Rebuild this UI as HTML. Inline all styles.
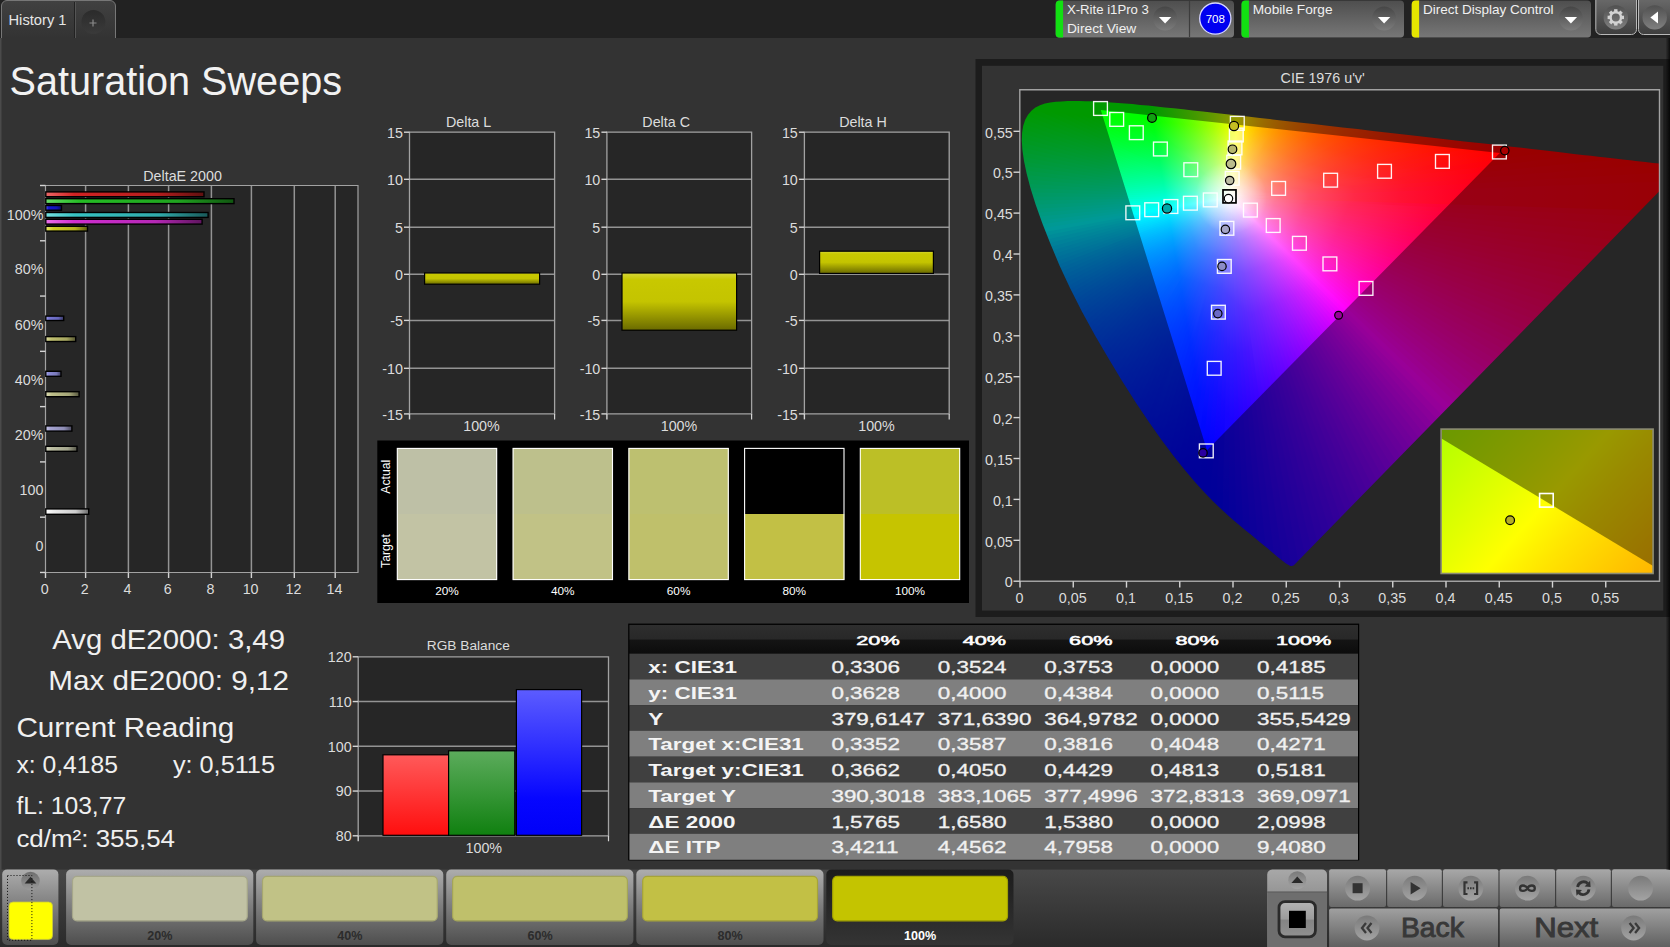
<!DOCTYPE html>
<html lang="en"><head><meta charset="utf-8"><title>Saturation Sweeps</title>
<style>html,body{margin:0;padding:0;background:#333;overflow:hidden}body{width:1670px;height:947px}
svg{display:block;font-family:"Liberation Sans",sans-serif}</style></head>
<body><svg width="1670" height="947" viewBox="0 0 1670 947">
<defs><linearGradient id="tabg" x1="0" y1="0" x2="0" y2="1"><stop offset="0" stop-color="#414141"/><stop offset="1" stop-color="#333"/></linearGradient>
<linearGradient id="plusg" x1="0" y1="0" x2="0" y2="1"><stop offset="0" stop-color="#2b2b2b"/><stop offset="1" stop-color="#3a3a3a"/></linearGradient>
<linearGradient id="wg" x1="0" y1="0" x2="0" y2="1"><stop offset="0" stop-color="#4e4e4e"/><stop offset="1" stop-color="#777"/></linearGradient>
<linearGradient id="ddg" x1="0" y1="0" x2="0" y2="1"><stop offset="0" stop-color="#464646"/><stop offset="1" stop-color="#7c7c7c"/></linearGradient>
<linearGradient id="gb" x1="0" y1="0" x2="0" y2="1"><stop offset="0" stop-color="#6a6a6a"/><stop offset="1" stop-color="#3e3e3e"/></linearGradient>
<linearGradient id="gbc" x1="0" y1="0" x2="0" y2="1"><stop offset="0" stop-color="#505050"/><stop offset="1" stop-color="#808080"/></linearGradient>
<linearGradient id="hb0" x1="0" y1="0" x2="1" y2="0"><stop offset="0" stop-color="#eb6767"/><stop offset="0.18" stop-color="#d02323"/><stop offset="0.7" stop-color="#b51e1e"/><stop offset="1" stop-color="#5f1010"/></linearGradient>
<linearGradient id="hb1" x1="0" y1="0" x2="1" y2="0"><stop offset="0" stop-color="#68dc68"/><stop offset="0.18" stop-color="#25bd25"/><stop offset="0.7" stop-color="#20a420"/><stop offset="1" stop-color="#115611"/></linearGradient>
<linearGradient id="hb2" x1="0" y1="0" x2="1" y2="0"><stop offset="0" stop-color="#5d5dea"/><stop offset="0.18" stop-color="#1616cf"/><stop offset="0.7" stop-color="#1313b4"/><stop offset="1" stop-color="#0a0a5e"/></linearGradient>
<linearGradient id="hb3" x1="0" y1="0" x2="1" y2="0"><stop offset="0" stop-color="#76e1e1"/><stop offset="0.18" stop-color="#37c3c3"/><stop offset="0.7" stop-color="#30aaaa"/><stop offset="1" stop-color="#195959"/></linearGradient>
<linearGradient id="hb4" x1="0" y1="0" x2="1" y2="0"><stop offset="0" stop-color="#eb70eb"/><stop offset="0.18" stop-color="#d02ed0"/><stop offset="0.7" stop-color="#b528b5"/><stop offset="1" stop-color="#5f155f"/></linearGradient>
<linearGradient id="hb5" x1="0" y1="0" x2="1" y2="0"><stop offset="0" stop-color="#e8e868"/><stop offset="0.18" stop-color="#cccc25"/><stop offset="0.7" stop-color="#b2b220"/><stop offset="1" stop-color="#5d5d11"/></linearGradient>
<linearGradient id="hb6" x1="0" y1="0" x2="1" y2="0"><stop offset="0" stop-color="#a6a6ef"/><stop offset="0.18" stop-color="#7676d5"/><stop offset="0.7" stop-color="#6666ba"/><stop offset="1" stop-color="#363661"/></linearGradient>
<linearGradient id="hb7" x1="0" y1="0" x2="1" y2="0"><stop offset="0" stop-color="#dddda0"/><stop offset="0.18" stop-color="#bebe6e"/><stop offset="0.7" stop-color="#a5a560"/><stop offset="1" stop-color="#575732"/></linearGradient>
<linearGradient id="hb8" x1="0" y1="0" x2="1" y2="0"><stop offset="0" stop-color="#b6b6ef"/><stop offset="0.18" stop-color="#8a8ad5"/><stop offset="0.7" stop-color="#7878ba"/><stop offset="1" stop-color="#3f3f61"/></linearGradient>
<linearGradient id="hb9" x1="0" y1="0" x2="1" y2="0"><stop offset="0" stop-color="#dddeb6"/><stop offset="0.18" stop-color="#bebf8a"/><stop offset="0.7" stop-color="#a5a678"/><stop offset="1" stop-color="#57573f"/></linearGradient>
<linearGradient id="hb10" x1="0" y1="0" x2="1" y2="0"><stop offset="0" stop-color="#c9c8eb"/><stop offset="0.18" stop-color="#a4a2d0"/><stop offset="0.7" stop-color="#8e8db5"/><stop offset="1" stop-color="#4b4a5f"/></linearGradient>
<linearGradient id="hb11" x1="0" y1="0" x2="1" y2="0"><stop offset="0" stop-color="#dbddc8"/><stop offset="0.18" stop-color="#bcbea2"/><stop offset="0.7" stop-color="#a3a58d"/><stop offset="1" stop-color="#56574a"/></linearGradient>
<linearGradient id="hb12" x1="0" y1="0" x2="1" y2="0"><stop offset="0" stop-color="#fff"/><stop offset="0.18" stop-color="#ebebeb"/><stop offset="0.7" stop-color="#ccc"/><stop offset="1" stop-color="#6b6b6b"/></linearGradient>
<linearGradient id="yv" x1="0" y1="0" x2="0" y2="1"><stop offset="0" stop-color="#d6d63a"/><stop offset="0.12" stop-color="#c8c800"/><stop offset="0.5" stop-color="#c4c400"/><stop offset="1" stop-color="#6a6a00"/></linearGradient>
<linearGradient id="w0" gradientUnits="userSpaceOnUse" x1="1230.8" y1="197.5" x2="1653.2" y2="197.5"><stop offset="0" stop-color="#fff"/><stop offset="0.023" stop-color="#ffd4da"/><stop offset="0.047" stop-color="#ffb2be"/><stop offset="0.107" stop-color="#ff788d"/><stop offset="0.187" stop-color="#ff4b67"/><stop offset="0.291" stop-color="#ff284a"/><stop offset="0.398" stop-color="#ff1237"/><stop offset="0.532" stop-color="#ff0028"/><stop offset="1" stop-color="#ff000f"/></linearGradient>
<linearGradient id="w1" gradientUnits="userSpaceOnUse" x1="1230.8" y1="197.5" x2="1644.7" y2="206.2"><stop offset="0" stop-color="#fff"/><stop offset="0.023" stop-color="#ffd4dc"/><stop offset="0.047" stop-color="#ffb3c1"/><stop offset="0.077" stop-color="#ff93a6"/><stop offset="0.11" stop-color="#ff778f"/><stop offset="0.191" stop-color="#ff4a6a"/><stop offset="0.294" stop-color="#ff284e"/><stop offset="0.401" stop-color="#ff123b"/><stop offset="0.532" stop-color="#ff002d"/><stop offset="1" stop-color="#ff0014"/></linearGradient>
<linearGradient id="w2" gradientUnits="userSpaceOnUse" x1="1230.8" y1="197.5" x2="1636.6" y2="214.5"><stop offset="0" stop-color="#fff"/><stop offset="0.023" stop-color="#ffd5dd"/><stop offset="0.047" stop-color="#ffb4c3"/><stop offset="0.077" stop-color="#ff94a9"/><stop offset="0.11" stop-color="#ff7892"/><stop offset="0.191" stop-color="#ff4b6e"/><stop offset="0.298" stop-color="#ff2852"/><stop offset="0.401" stop-color="#ff1240"/><stop offset="0.532" stop-color="#ff0032"/><stop offset="1" stop-color="#ff0019"/></linearGradient>
<linearGradient id="w3" gradientUnits="userSpaceOnUse" x1="1230.8" y1="197.5" x2="1628.7" y2="222.5"><stop offset="0" stop-color="#fff"/><stop offset="0.023" stop-color="#ffd6de"/><stop offset="0.05" stop-color="#ffb1c2"/><stop offset="0.114" stop-color="#ff7794"/><stop offset="0.194" stop-color="#ff4b71"/><stop offset="0.301" stop-color="#ff2756"/><stop offset="0.532" stop-color="#ff0037"/><stop offset="1" stop-color="#ff001e"/></linearGradient>
<linearGradient id="w4" gradientUnits="userSpaceOnUse" x1="1230.8" y1="197.5" x2="1621.2" y2="230.3"><stop offset="0" stop-color="#fff"/><stop offset="0.023" stop-color="#ffd6e0"/><stop offset="0.05" stop-color="#ffb2c4"/><stop offset="0.114" stop-color="#ff7897"/><stop offset="0.194" stop-color="#ff4b75"/><stop offset="0.301" stop-color="#ff285a"/><stop offset="0.532" stop-color="#ff003c"/><stop offset="1" stop-color="#ff0023"/></linearGradient>
<linearGradient id="w5" gradientUnits="userSpaceOnUse" x1="1230.8" y1="197.5" x2="1613.8" y2="237.8"><stop offset="0" stop-color="#fff"/><stop offset="0.023" stop-color="#ffd7e1"/><stop offset="0.05" stop-color="#ffb3c6"/><stop offset="0.114" stop-color="#ff799b"/><stop offset="0.197" stop-color="#ff4b79"/><stop offset="0.304" stop-color="#ff285e"/><stop offset="0.532" stop-color="#ff0041"/><stop offset="1" stop-color="#ff0028"/></linearGradient>
<linearGradient id="w6" gradientUnits="userSpaceOnUse" x1="1230.8" y1="197.5" x2="1606.8" y2="245"><stop offset="0" stop-color="#fff"/><stop offset="0.023" stop-color="#ffd7e2"/><stop offset="0.05" stop-color="#ffb4c8"/><stop offset="0.117" stop-color="#ff789d"/><stop offset="0.201" stop-color="#ff4a7c"/><stop offset="0.308" stop-color="#ff2762"/><stop offset="0.532" stop-color="#ff0046"/><stop offset="1" stop-color="#ff002d"/></linearGradient>
<linearGradient id="w7" gradientUnits="userSpaceOnUse" x1="1230.8" y1="197.5" x2="1599.9" y2="252"><stop offset="0" stop-color="#fff"/><stop offset="0.023" stop-color="#ffd8e3"/><stop offset="0.05" stop-color="#ffb5ca"/><stop offset="0.117" stop-color="#ff79a0"/><stop offset="0.201" stop-color="#ff4b80"/><stop offset="0.311" stop-color="#ff2766"/><stop offset="0.532" stop-color="#ff004b"/><stop offset="1" stop-color="#ff0032"/></linearGradient>
<linearGradient id="w8" gradientUnits="userSpaceOnUse" x1="1230.8" y1="197.5" x2="1593.3" y2="258.8"><stop offset="0" stop-color="#fff"/><stop offset="0.023" stop-color="#ffd8e4"/><stop offset="0.054" stop-color="#ffb2ca"/><stop offset="0.12" stop-color="#ff77a2"/><stop offset="0.204" stop-color="#ff4b83"/><stop offset="0.314" stop-color="#ff276a"/><stop offset="0.532" stop-color="#ff0050"/><stop offset="1" stop-color="#ff0037"/></linearGradient>
<linearGradient id="w9" gradientUnits="userSpaceOnUse" x1="1230.8" y1="197.5" x2="1586.8" y2="265.4"><stop offset="0" stop-color="#fff"/><stop offset="0.027" stop-color="#ffd4e2"/><stop offset="0.054" stop-color="#ffb3cc"/><stop offset="0.12" stop-color="#ff78a5"/><stop offset="0.207" stop-color="#ff4a86"/><stop offset="0.318" stop-color="#ff266e"/><stop offset="0.532" stop-color="#ff0054"/><stop offset="1" stop-color="#ff003d"/></linearGradient>
<linearGradient id="w10" gradientUnits="userSpaceOnUse" x1="1230.8" y1="197.5" x2="1580.5" y2="271.8"><stop offset="0" stop-color="#fff"/><stop offset="0.027" stop-color="#ffd5e3"/><stop offset="0.054" stop-color="#ffb3ce"/><stop offset="0.12" stop-color="#ff79a8"/><stop offset="0.207" stop-color="#ff4b8a"/><stop offset="0.321" stop-color="#ff2672"/><stop offset="0.532" stop-color="#ff0059"/><stop offset="1" stop-color="#ff0042"/></linearGradient>
<linearGradient id="w11" gradientUnits="userSpaceOnUse" x1="1230.8" y1="197.5" x2="1574.4" y2="278.1"><stop offset="0" stop-color="#fff"/><stop offset="0.027" stop-color="#ffd5e5"/><stop offset="0.054" stop-color="#ffb4d0"/><stop offset="0.124" stop-color="#ff78aa"/><stop offset="0.211" stop-color="#ff4a8d"/><stop offset="0.321" stop-color="#ff2677"/><stop offset="0.532" stop-color="#ff005e"/><stop offset="1" stop-color="#ff0047"/></linearGradient>
<linearGradient id="w12" gradientUnits="userSpaceOnUse" x1="1230.8" y1="197.5" x2="1568.5" y2="284.2"><stop offset="0" stop-color="#fff"/><stop offset="0.027" stop-color="#ffd6e6"/><stop offset="0.054" stop-color="#ffb5d2"/><stop offset="0.124" stop-color="#ff79ad"/><stop offset="0.211" stop-color="#ff4b91"/><stop offset="0.324" stop-color="#ff267b"/><stop offset="0.532" stop-color="#ff0063"/><stop offset="1" stop-color="#ff004d"/></linearGradient>
<linearGradient id="w13" gradientUnits="userSpaceOnUse" x1="1230.8" y1="197.5" x2="1562.6" y2="290.2"><stop offset="0" stop-color="#fff"/><stop offset="0.027" stop-color="#ffd6e7"/><stop offset="0.057" stop-color="#ffb2d2"/><stop offset="0.127" stop-color="#ff78af"/><stop offset="0.214" stop-color="#ff4b95"/><stop offset="0.328" stop-color="#ff267f"/><stop offset="0.532" stop-color="#ff0069"/><stop offset="1" stop-color="#ff0052"/></linearGradient>
<linearGradient id="w14" gradientUnits="userSpaceOnUse" x1="1230.8" y1="197.5" x2="1557" y2="296"><stop offset="0" stop-color="#fff"/><stop offset="0.027" stop-color="#ffd7e8"/><stop offset="0.057" stop-color="#ffb3d4"/><stop offset="0.127" stop-color="#ff79b3"/><stop offset="0.217" stop-color="#ff4a98"/><stop offset="0.331" stop-color="#ff2583"/><stop offset="0.532" stop-color="#ff006e"/><stop offset="1" stop-color="#ff0057"/></linearGradient>
<linearGradient id="w15" gradientUnits="userSpaceOnUse" x1="1230.8" y1="197.5" x2="1551.4" y2="301.7"><stop offset="0" stop-color="#fff"/><stop offset="0.027" stop-color="#ffd7e9"/><stop offset="0.057" stop-color="#ffb4d6"/><stop offset="0.127" stop-color="#ff7ab6"/><stop offset="0.217" stop-color="#ff4b9c"/><stop offset="0.334" stop-color="#ff2587"/><stop offset="0.532" stop-color="#ff0073"/><stop offset="1" stop-color="#ff005d"/></linearGradient>
<linearGradient id="w16" gradientUnits="userSpaceOnUse" x1="1230.8" y1="197.5" x2="1545.9" y2="307.2"><stop offset="0" stop-color="#fff"/><stop offset="0.027" stop-color="#ffd8ea"/><stop offset="0.057" stop-color="#ffb5d8"/><stop offset="0.13" stop-color="#ff79b8"/><stop offset="0.221" stop-color="#ff4a9f"/><stop offset="0.338" stop-color="#ff258b"/><stop offset="0.532" stop-color="#ff0078"/><stop offset="1" stop-color="#ff0063"/></linearGradient>
<linearGradient id="w17" gradientUnits="userSpaceOnUse" x1="1230.8" y1="197.5" x2="1540.6" y2="312.7"><stop offset="0" stop-color="#fff"/><stop offset="0.027" stop-color="#ffd8eb"/><stop offset="0.057" stop-color="#ffb6da"/><stop offset="0.13" stop-color="#ff7abb"/><stop offset="0.224" stop-color="#ff4aa3"/><stop offset="0.341" stop-color="#ff2490"/><stop offset="0.532" stop-color="#ff007d"/><stop offset="1" stop-color="#ff0068"/></linearGradient>
<linearGradient id="w18" gradientUnits="userSpaceOnUse" x1="1230.8" y1="197.5" x2="1535.4" y2="318.1"><stop offset="0" stop-color="#fff"/><stop offset="0.027" stop-color="#ffd9ec"/><stop offset="0.06" stop-color="#ffb3da"/><stop offset="0.134" stop-color="#ff78bd"/><stop offset="0.227" stop-color="#ff49a6"/><stop offset="0.341" stop-color="#ff2594"/><stop offset="0.532" stop-color="#ff0083"/><stop offset="1" stop-color="#ff006e"/></linearGradient>
<linearGradient id="w19" gradientUnits="userSpaceOnUse" x1="1230.8" y1="197.5" x2="1530.2" y2="323.4"><stop offset="0" stop-color="#fff"/><stop offset="0.027" stop-color="#ffd9ed"/><stop offset="0.06" stop-color="#ffb4dc"/><stop offset="0.134" stop-color="#ff79c1"/><stop offset="0.227" stop-color="#ff4aaa"/><stop offset="0.344" stop-color="#ff2499"/><stop offset="0.532" stop-color="#f08"/><stop offset="1" stop-color="#ff0074"/></linearGradient>
<linearGradient id="w20" gradientUnits="userSpaceOnUse" x1="1230.8" y1="197.5" x2="1525.1" y2="328.5"><stop offset="0" stop-color="#fff"/><stop offset="0.027" stop-color="#ffdaee"/><stop offset="0.06" stop-color="#ffb5de"/><stop offset="0.134" stop-color="#ff7ac4"/><stop offset="0.227" stop-color="#ff4baf"/><stop offset="0.348" stop-color="#ff249d"/><stop offset="0.532" stop-color="#ff008d"/><stop offset="1" stop-color="#ff007a"/></linearGradient>
<linearGradient id="w21" gradientUnits="userSpaceOnUse" x1="1230.8" y1="197.5" x2="1520.1" y2="333.7"><stop offset="0" stop-color="#fff"/><stop offset="0.03" stop-color="#ffd6ee"/><stop offset="0.06" stop-color="#ffb5e0"/><stop offset="0.137" stop-color="#ff79c6"/><stop offset="0.231" stop-color="#ff4ab2"/><stop offset="0.351" stop-color="#ff23a2"/><stop offset="0.532" stop-color="#ff0093"/><stop offset="1" stop-color="#ff0080"/></linearGradient>
<linearGradient id="w22" gradientUnits="userSpaceOnUse" x1="1230.8" y1="197.5" x2="1515.2" y2="338.7"><stop offset="0" stop-color="#fff"/><stop offset="0.06" stop-color="#ffb6e2"/><stop offset="0.137" stop-color="#ff7aca"/><stop offset="0.234" stop-color="#ff4ab6"/><stop offset="0.355" stop-color="#ff23a7"/><stop offset="0.532" stop-color="#f09"/><stop offset="1" stop-color="#ff0087"/></linearGradient>
<linearGradient id="w23" gradientUnits="userSpaceOnUse" x1="1230.8" y1="197.5" x2="1510.4" y2="343.7"><stop offset="0" stop-color="#fff"/><stop offset="0.03" stop-color="#ffd7f0"/><stop offset="0.064" stop-color="#ffb4e2"/><stop offset="0.14" stop-color="#ff79cc"/><stop offset="0.237" stop-color="#ff49ba"/><stop offset="0.358" stop-color="#ff23ab"/><stop offset="0.532" stop-color="#ff009e"/><stop offset="1" stop-color="#ff008d"/></linearGradient>
<linearGradient id="w24" gradientUnits="userSpaceOnUse" x1="1230.8" y1="197.5" x2="1505.6" y2="348.6"><stop offset="0" stop-color="#fff"/><stop offset="0.03" stop-color="#ffd8f1"/><stop offset="0.064" stop-color="#ffb4e4"/><stop offset="0.14" stop-color="#ff7acf"/><stop offset="0.237" stop-color="#ff4abe"/><stop offset="0.361" stop-color="#ff22b0"/><stop offset="0.532" stop-color="#ff00a4"/><stop offset="1" stop-color="#ff0094"/></linearGradient>
<linearGradient id="w25" gradientUnits="userSpaceOnUse" x1="1230.8" y1="197.5" x2="1500.8" y2="353.4"><stop offset="0" stop-color="#fff"/><stop offset="0.064" stop-color="#ffb5e6"/><stop offset="0.144" stop-color="#ff79d2"/><stop offset="0.241" stop-color="#ff49c2"/><stop offset="0.365" stop-color="#ff22b5"/><stop offset="0.532" stop-color="#f0a"/><stop offset="1" stop-color="#ff009a"/></linearGradient>
<linearGradient id="w26" gradientUnits="userSpaceOnUse" x1="1230.8" y1="197.5" x2="1496.1" y2="358.2"><stop offset="0" stop-color="#fff"/><stop offset="0.064" stop-color="#ffb6e8"/><stop offset="0.144" stop-color="#ff7ad6"/><stop offset="0.244" stop-color="#ff49c7"/><stop offset="0.368" stop-color="#ff21ba"/><stop offset="0.532" stop-color="#ff00b0"/><stop offset="1" stop-color="#ff00a1"/></linearGradient>
<linearGradient id="w27" gradientUnits="userSpaceOnUse" x1="1230.8" y1="197.5" x2="1491.5" y2="363"><stop offset="0" stop-color="#fff"/><stop offset="0.03" stop-color="#ffd9f4"/><stop offset="0.067" stop-color="#ffb4e9"/><stop offset="0.147" stop-color="#ff79d9"/><stop offset="0.247" stop-color="#ff48cb"/><stop offset="0.371" stop-color="#ff21c0"/><stop offset="0.532" stop-color="#ff00b6"/><stop offset="1" stop-color="#ff00a8"/></linearGradient>
<linearGradient id="w28" gradientUnits="userSpaceOnUse" x1="1230.8" y1="197.5" x2="1486.9" y2="367.7"><stop offset="0" stop-color="#fff"/><stop offset="0.067" stop-color="#ffb4ec"/><stop offset="0.151" stop-color="#ff78dc"/><stop offset="0.251" stop-color="#ff48cf"/><stop offset="0.378" stop-color="#ff20c5"/><stop offset="0.532" stop-color="#ff00bc"/><stop offset="1" stop-color="#ff00af"/></linearGradient>
<linearGradient id="w29" gradientUnits="userSpaceOnUse" x1="1230.8" y1="197.5" x2="1482.3" y2="372.3"><stop offset="0" stop-color="#fff"/><stop offset="0.067" stop-color="#ffb5ee"/><stop offset="0.151" stop-color="#ff79df"/><stop offset="0.254" stop-color="#ff47d4"/><stop offset="0.381" stop-color="#ff1fca"/><stop offset="0.532" stop-color="#ff00c3"/><stop offset="1" stop-color="#ff00b7"/></linearGradient>
<linearGradient id="w30" gradientUnits="userSpaceOnUse" x1="1230.8" y1="197.5" x2="1477.8" y2="377"><stop offset="0" stop-color="#fff"/><stop offset="0.033" stop-color="#ffd7f7"/><stop offset="0.07" stop-color="#ffb3ef"/><stop offset="0.154" stop-color="#ff78e3"/><stop offset="0.258" stop-color="#ff47d8"/><stop offset="0.385" stop-color="#ff1fd0"/><stop offset="0.532" stop-color="#ff00c9"/><stop offset="1" stop-color="#ff00bf"/></linearGradient>
<linearGradient id="w31" gradientUnits="userSpaceOnUse" x1="1230.8" y1="197.5" x2="1473.3" y2="381.6"><stop offset="0" stop-color="#fff"/><stop offset="0.07" stop-color="#ffb4f1"/><stop offset="0.154" stop-color="#ff79e6"/><stop offset="0.258" stop-color="#ff47dd"/><stop offset="0.388" stop-color="#ff1ed6"/><stop offset="0.532" stop-color="#ff00d0"/><stop offset="1" stop-color="#ff00c7"/></linearGradient>
<linearGradient id="w32" gradientUnits="userSpaceOnUse" x1="1230.8" y1="197.5" x2="1468.8" y2="386.2"><stop offset="0" stop-color="#fff"/><stop offset="0.07" stop-color="#ffb5f3"/><stop offset="0.157" stop-color="#ff78ea"/><stop offset="0.261" stop-color="#ff47e2"/><stop offset="0.391" stop-color="#ff1edc"/><stop offset="0.532" stop-color="#ff00d7"/><stop offset="1" stop-color="#ff00cf"/></linearGradient>
<linearGradient id="w33" gradientUnits="userSpaceOnUse" x1="1230.8" y1="197.5" x2="1464.4" y2="390.7"><stop offset="0" stop-color="#fff"/><stop offset="0.074" stop-color="#ffb3f5"/><stop offset="0.161" stop-color="#ff77ed"/><stop offset="0.268" stop-color="#ff45e7"/><stop offset="0.398" stop-color="#ff1de2"/><stop offset="0.532" stop-color="#ff00de"/><stop offset="1" stop-color="#ff00d7"/></linearGradient>
<linearGradient id="w34" gradientUnits="userSpaceOnUse" x1="1230.8" y1="197.5" x2="1459.9" y2="395.3"><stop offset="0" stop-color="#fff"/><stop offset="0.074" stop-color="#ffb4f7"/><stop offset="0.161" stop-color="#ff78f1"/><stop offset="0.268" stop-color="#ff46ed"/><stop offset="0.401" stop-color="#ff1ce8"/><stop offset="0.532" stop-color="#ff00e6"/><stop offset="1" stop-color="#ff00e0"/></linearGradient>
<linearGradient id="w35" gradientUnits="userSpaceOnUse" x1="1230.8" y1="197.5" x2="1455.5" y2="399.8"><stop offset="0" stop-color="#fff"/><stop offset="0.074" stop-color="#ffb5fa"/><stop offset="0.164" stop-color="#ff77f5"/><stop offset="0.271" stop-color="#ff45f2"/><stop offset="0.405" stop-color="#ff1cef"/><stop offset="0.532" stop-color="#ff00ed"/><stop offset="1" stop-color="#ff00e9"/></linearGradient>
<linearGradient id="w36" gradientUnits="userSpaceOnUse" x1="1230.8" y1="197.5" x2="1451.1" y2="404.3"><stop offset="0" stop-color="#fff"/><stop offset="0.077" stop-color="#ffb3fc"/><stop offset="0.167" stop-color="#ff76fa"/><stop offset="0.278" stop-color="#ff44f8"/><stop offset="0.411" stop-color="#ff1af6"/><stop offset="0.532" stop-color="#ff00f5"/><stop offset="1" stop-color="#ff00f3"/></linearGradient>
<linearGradient id="w37" gradientUnits="userSpaceOnUse" x1="1230.8" y1="197.5" x2="1446.6" y2="408.9"><stop offset="0" stop-color="#fff"/><stop offset="0.077" stop-color="#ffb4fe"/><stop offset="0.167" stop-color="#ff77fe"/><stop offset="0.278" stop-color="#ff45fd"/><stop offset="0.415" stop-color="#ff1afd"/><stop offset="0.532" stop-color="#ff00fd"/><stop offset="1" stop-color="#ff00fc"/></linearGradient>
<linearGradient id="w38" gradientUnits="userSpaceOnUse" x1="1230.8" y1="197.5" x2="1442.2" y2="413.4"><stop offset="0" stop-color="#fff"/><stop offset="0.077" stop-color="#fdb3ff"/><stop offset="0.167" stop-color="#fc77ff"/><stop offset="0.278" stop-color="#fb44ff"/><stop offset="0.415" stop-color="#fa1aff"/><stop offset="0.532" stop-color="#f900ff"/><stop offset="1" stop-color="#f800ff"/></linearGradient>
<linearGradient id="w39" gradientUnits="userSpaceOnUse" x1="1230.8" y1="197.5" x2="1437.8" y2="417.9"><stop offset="0" stop-color="#fff"/><stop offset="0.074" stop-color="#fbb5ff"/><stop offset="0.164" stop-color="#f878ff"/><stop offset="0.274" stop-color="#f545ff"/><stop offset="0.408" stop-color="#f21bff"/><stop offset="0.532" stop-color="#f100ff"/><stop offset="1" stop-color="#e0f"/></linearGradient>
<linearGradient id="w40" gradientUnits="userSpaceOnUse" x1="1230.8" y1="197.5" x2="1433.4" y2="422.5"><stop offset="0" stop-color="#fff"/><stop offset="0.074" stop-color="#f9b4ff"/><stop offset="0.164" stop-color="#f377ff"/><stop offset="0.271" stop-color="#ef45ff"/><stop offset="0.405" stop-color="#ec1cff"/><stop offset="0.532" stop-color="#e900ff"/><stop offset="1" stop-color="#e400ff"/></linearGradient>
<linearGradient id="w41" gradientUnits="userSpaceOnUse" x1="1230.8" y1="197.5" x2="1428.9" y2="427"><stop offset="0" stop-color="#fff"/><stop offset="0.074" stop-color="#f6b4ff"/><stop offset="0.161" stop-color="#ef78ff"/><stop offset="0.268" stop-color="#ea46ff"/><stop offset="0.401" stop-color="#e51cff"/><stop offset="0.532" stop-color="#e200ff"/><stop offset="1" stop-color="#db00ff"/></linearGradient>
<linearGradient id="w42" gradientUnits="userSpaceOnUse" x1="1230.8" y1="197.5" x2="1424.4" y2="431.6"><stop offset="0" stop-color="#fff"/><stop offset="0.074" stop-color="#f4b3ff"/><stop offset="0.161" stop-color="#eb77ff"/><stop offset="0.268" stop-color="#e445ff"/><stop offset="0.398" stop-color="#de1dff"/><stop offset="0.532" stop-color="#da00ff"/><stop offset="1" stop-color="#d300ff"/></linearGradient>
<linearGradient id="w43" gradientUnits="userSpaceOnUse" x1="1230.8" y1="197.5" x2="1420" y2="436.2"><stop offset="0" stop-color="#fff"/><stop offset="0.07" stop-color="#f2b5ff"/><stop offset="0.157" stop-color="#e878ff"/><stop offset="0.264" stop-color="#df46ff"/><stop offset="0.395" stop-color="#d81dff"/><stop offset="0.532" stop-color="#d300ff"/><stop offset="1" stop-color="#ca00ff"/></linearGradient>
<linearGradient id="w44" gradientUnits="userSpaceOnUse" x1="1230.8" y1="197.5" x2="1415.5" y2="440.8"><stop offset="0" stop-color="#fff"/><stop offset="0.07" stop-color="#f0b4ff"/><stop offset="0.154" stop-color="#e479ff"/><stop offset="0.258" stop-color="#da47ff"/><stop offset="0.388" stop-color="#d21eff"/><stop offset="0.532" stop-color="#c0f"/><stop offset="1" stop-color="#c200ff"/></linearGradient>
<linearGradient id="w45" gradientUnits="userSpaceOnUse" x1="1230.8" y1="197.5" x2="1410.9" y2="445.4"><stop offset="0" stop-color="#fff"/><stop offset="0.07" stop-color="#eeb3ff"/><stop offset="0.154" stop-color="#e078ff"/><stop offset="0.258" stop-color="#d547ff"/><stop offset="0.385" stop-color="#cc1fff"/><stop offset="0.532" stop-color="#c500ff"/><stop offset="1" stop-color="#ba00ff"/></linearGradient>
<linearGradient id="w46" gradientUnits="userSpaceOnUse" x1="1230.8" y1="197.5" x2="1406.4" y2="450.1"><stop offset="0" stop-color="#fff"/><stop offset="0.067" stop-color="#ecb6ff"/><stop offset="0.151" stop-color="#dd79ff"/><stop offset="0.254" stop-color="#d147ff"/><stop offset="0.381" stop-color="#c71fff"/><stop offset="0.532" stop-color="#bf00ff"/><stop offset="1" stop-color="#b200ff"/></linearGradient>
<linearGradient id="w47" gradientUnits="userSpaceOnUse" x1="1230.8" y1="197.5" x2="1401.7" y2="454.8"><stop offset="0" stop-color="#fff"/><stop offset="0.067" stop-color="#eab5ff"/><stop offset="0.151" stop-color="#d978ff"/><stop offset="0.251" stop-color="#cc48ff"/><stop offset="0.378" stop-color="#c120ff"/><stop offset="0.532" stop-color="#b800ff"/><stop offset="1" stop-color="#a0f"/></linearGradient>
<linearGradient id="w48" gradientUnits="userSpaceOnUse" x1="1230.8" y1="197.5" x2="1397.1" y2="459.6"><stop offset="0" stop-color="#fff"/><stop offset="0.067" stop-color="#e8b4ff"/><stop offset="0.147" stop-color="#d679ff"/><stop offset="0.247" stop-color="#c848ff"/><stop offset="0.375" stop-color="#bb20ff"/><stop offset="0.532" stop-color="#b200ff"/><stop offset="1" stop-color="#a300ff"/></linearGradient>
<linearGradient id="w49" gradientUnits="userSpaceOnUse" x1="1230.8" y1="197.5" x2="1392.4" y2="464.4"><stop offset="0" stop-color="#fff"/><stop offset="0.03" stop-color="#f2d9ff"/><stop offset="0.067" stop-color="#e6b3ff"/><stop offset="0.147" stop-color="#d378ff"/><stop offset="0.247" stop-color="#c348ff"/><stop offset="0.371" stop-color="#b621ff"/><stop offset="0.532" stop-color="#ab00ff"/><stop offset="1" stop-color="#9b00ff"/></linearGradient>
<linearGradient id="w50" gradientUnits="userSpaceOnUse" x1="1230.8" y1="197.5" x2="1387.7" y2="469.2"><stop offset="0" stop-color="#fff"/><stop offset="0.064" stop-color="#e5b6ff"/><stop offset="0.144" stop-color="#d079ff"/><stop offset="0.244" stop-color="#bf48ff"/><stop offset="0.368" stop-color="#b121ff"/><stop offset="0.532" stop-color="#a500ff"/><stop offset="1" stop-color="#9400ff"/></linearGradient>
<linearGradient id="w51" gradientUnits="userSpaceOnUse" x1="1230.8" y1="197.5" x2="1382.9" y2="474.1"><stop offset="0" stop-color="#fff"/><stop offset="0.064" stop-color="#e3b5ff"/><stop offset="0.144" stop-color="#cc78ff"/><stop offset="0.241" stop-color="#ba49ff"/><stop offset="0.365" stop-color="#ac22ff"/><stop offset="0.532" stop-color="#9f00ff"/><stop offset="1" stop-color="#8d00ff"/></linearGradient>
<linearGradient id="w52" gradientUnits="userSpaceOnUse" x1="1230.8" y1="197.5" x2="1378" y2="479.1"><stop offset="0" stop-color="#fff"/><stop offset="0.03" stop-color="#efd8ff"/><stop offset="0.064" stop-color="#e1b4ff"/><stop offset="0.14" stop-color="#ca7aff"/><stop offset="0.237" stop-color="#b64aff"/><stop offset="0.361" stop-color="#a722ff"/><stop offset="0.532" stop-color="#90f"/><stop offset="1" stop-color="#8600ff"/></linearGradient>
<linearGradient id="w53" gradientUnits="userSpaceOnUse" x1="1230.8" y1="197.5" x2="1373.1" y2="484.1"><stop offset="0" stop-color="#fff"/><stop offset="0.03" stop-color="#eed7ff"/><stop offset="0.064" stop-color="#dfb4ff"/><stop offset="0.14" stop-color="#c679ff"/><stop offset="0.237" stop-color="#b249ff"/><stop offset="0.358" stop-color="#a222ff"/><stop offset="0.532" stop-color="#9300ff"/><stop offset="1" stop-color="#8000ff"/></linearGradient>
<linearGradient id="w54" gradientUnits="userSpaceOnUse" x1="1230.8" y1="197.5" x2="1368.1" y2="489.3"><stop offset="0" stop-color="#fff"/><stop offset="0.06" stop-color="#deb6ff"/><stop offset="0.137" stop-color="#c47aff"/><stop offset="0.234" stop-color="#ae49ff"/><stop offset="0.355" stop-color="#9d23ff"/><stop offset="0.532" stop-color="#8d00ff"/><stop offset="1" stop-color="#7900ff"/></linearGradient>
<linearGradient id="w55" gradientUnits="userSpaceOnUse" x1="1230.8" y1="197.5" x2="1363" y2="494.5"><stop offset="0" stop-color="#fff"/><stop offset="0.03" stop-color="#ecd6ff"/><stop offset="0.06" stop-color="#dcb5ff"/><stop offset="0.137" stop-color="#c079ff"/><stop offset="0.234" stop-color="#a949ff"/><stop offset="0.355" stop-color="#9822ff"/><stop offset="0.532" stop-color="#8700ff"/><stop offset="1" stop-color="#7300ff"/></linearGradient>
<linearGradient id="w56" gradientUnits="userSpaceOnUse" x1="1230.8" y1="197.5" x2="1357.8" y2="499.7"><stop offset="0" stop-color="#fff"/><stop offset="0.027" stop-color="#eddaff"/><stop offset="0.06" stop-color="#dab5ff"/><stop offset="0.137" stop-color="#bd78ff"/><stop offset="0.231" stop-color="#a649ff"/><stop offset="0.351" stop-color="#9323ff"/><stop offset="0.532" stop-color="#8200ff"/><stop offset="1" stop-color="#6c00ff"/></linearGradient>
<linearGradient id="w57" gradientUnits="userSpaceOnUse" x1="1230.8" y1="197.5" x2="1352.6" y2="505.1"><stop offset="0" stop-color="#fff"/><stop offset="0.027" stop-color="#ecd9ff"/><stop offset="0.06" stop-color="#d8b4ff"/><stop offset="0.134" stop-color="#ba79ff"/><stop offset="0.227" stop-color="#a24aff"/><stop offset="0.348" stop-color="#8e23ff"/><stop offset="0.532" stop-color="#7c00ff"/><stop offset="1" stop-color="#60f"/></linearGradient>
<linearGradient id="w58" gradientUnits="userSpaceOnUse" x1="1230.8" y1="197.5" x2="1347.2" y2="510.6"><stop offset="0" stop-color="#fff"/><stop offset="0.027" stop-color="#ebd9ff"/><stop offset="0.06" stop-color="#d6b3ff"/><stop offset="0.134" stop-color="#b779ff"/><stop offset="0.227" stop-color="#9e49ff"/><stop offset="0.344" stop-color="#8924ff"/><stop offset="0.532" stop-color="#7600ff"/><stop offset="1" stop-color="#6000ff"/></linearGradient>
<linearGradient id="w59" gradientUnits="userSpaceOnUse" x1="1230.8" y1="197.5" x2="1341.8" y2="516.2"><stop offset="0" stop-color="#fff"/><stop offset="0.027" stop-color="#e9d8ff"/><stop offset="0.057" stop-color="#d6b6ff"/><stop offset="0.13" stop-color="#b57aff"/><stop offset="0.224" stop-color="#9a4aff"/><stop offset="0.341" stop-color="#8524ff"/><stop offset="0.532" stop-color="#7100ff"/><stop offset="1" stop-color="#5a00ff"/></linearGradient>
<linearGradient id="w60" gradientUnits="userSpaceOnUse" x1="1230.8" y1="197.5" x2="1336.2" y2="521.9"><stop offset="0" stop-color="#fff"/><stop offset="0.027" stop-color="#e8d8ff"/><stop offset="0.057" stop-color="#d4b5ff"/><stop offset="0.13" stop-color="#b179ff"/><stop offset="0.221" stop-color="#964aff"/><stop offset="0.338" stop-color="#8025ff"/><stop offset="0.532" stop-color="#6b00ff"/><stop offset="1" stop-color="#5300ff"/></linearGradient>
<linearGradient id="w61" gradientUnits="userSpaceOnUse" x1="1230.8" y1="197.5" x2="1330.5" y2="527.7"><stop offset="0" stop-color="#fff"/><stop offset="0.027" stop-color="#e7d7ff"/><stop offset="0.057" stop-color="#d2b4ff"/><stop offset="0.13" stop-color="#ae78ff"/><stop offset="0.221" stop-color="#924aff"/><stop offset="0.334" stop-color="#7c25ff"/><stop offset="0.532" stop-color="#6500ff"/><stop offset="1" stop-color="#4d00ff"/></linearGradient>
<linearGradient id="w62" gradientUnits="userSpaceOnUse" x1="1230.8" y1="197.5" x2="1324.7" y2="533.7"><stop offset="0" stop-color="#fff"/><stop offset="0.027" stop-color="#e6d7ff"/><stop offset="0.057" stop-color="#d0b4ff"/><stop offset="0.127" stop-color="#ac79ff"/><stop offset="0.217" stop-color="#8e4aff"/><stop offset="0.334" stop-color="#7725ff"/><stop offset="0.532" stop-color="#6000ff"/><stop offset="1" stop-color="#4700ff"/></linearGradient>
<linearGradient id="w63" gradientUnits="userSpaceOnUse" x1="1230.8" y1="197.5" x2="1318.7" y2="539.8"><stop offset="0" stop-color="#fff"/><stop offset="0.027" stop-color="#e5d7ff"/><stop offset="0.057" stop-color="#ceb3ff"/><stop offset="0.127" stop-color="#a878ff"/><stop offset="0.217" stop-color="#8a4aff"/><stop offset="0.331" stop-color="#7225ff"/><stop offset="0.532" stop-color="#5b00ff"/><stop offset="1" stop-color="#4200ff"/></linearGradient>
<linearGradient id="w64" gradientUnits="userSpaceOnUse" x1="1230.8" y1="197.5" x2="1312.6" y2="546.1"><stop offset="0" stop-color="#fff"/><stop offset="0.027" stop-color="#e4d6ff"/><stop offset="0.054" stop-color="#ceb6ff"/><stop offset="0.124" stop-color="#a67aff"/><stop offset="0.214" stop-color="#874aff"/><stop offset="0.328" stop-color="#6e25ff"/><stop offset="0.528" stop-color="#50f"/><stop offset="1" stop-color="#3c00ff"/></linearGradient>
<linearGradient id="w65" gradientUnits="userSpaceOnUse" x1="1230.8" y1="197.5" x2="1306.3" y2="552.5"><stop offset="0" stop-color="#fff"/><stop offset="0.027" stop-color="#e3d6ff"/><stop offset="0.054" stop-color="#ccb5ff"/><stop offset="0.124" stop-color="#a379ff"/><stop offset="0.211" stop-color="#834bff"/><stop offset="0.324" stop-color="#6a26ff"/><stop offset="0.528" stop-color="#5000ff"/><stop offset="1" stop-color="#3600ff"/></linearGradient>
<linearGradient id="w66" gradientUnits="userSpaceOnUse" x1="1230.8" y1="197.5" x2="1299.8" y2="559.2"><stop offset="0" stop-color="#fff"/><stop offset="0.027" stop-color="#e1d5ff"/><stop offset="0.054" stop-color="#cab4ff"/><stop offset="0.124" stop-color="#9f78ff"/><stop offset="0.211" stop-color="#7f4aff"/><stop offset="0.321" stop-color="#6526ff"/><stop offset="0.528" stop-color="#4b00ff"/><stop offset="1" stop-color="#3000ff"/></linearGradient>
<linearGradient id="w67" gradientUnits="userSpaceOnUse" x1="1230.8" y1="197.5" x2="1293" y2="565.6"><stop offset="0" stop-color="#fff"/><stop offset="0.027" stop-color="#e0d4ff"/><stop offset="0.054" stop-color="#c8b3ff"/><stop offset="0.12" stop-color="#9d79ff"/><stop offset="0.207" stop-color="#7b4bff"/><stop offset="0.318" stop-color="#6126ff"/><stop offset="0.532" stop-color="#4500ff"/><stop offset="1" stop-color="#2a00ff"/></linearGradient>
<linearGradient id="w68" gradientUnits="userSpaceOnUse" x1="1230.8" y1="197.5" x2="1284.7" y2="562.4"><stop offset="0" stop-color="#fff"/><stop offset="0.027" stop-color="#dfd5ff"/><stop offset="0.054" stop-color="#c7b4ff"/><stop offset="0.12" stop-color="#9b7aff"/><stop offset="0.207" stop-color="#794cff"/><stop offset="0.318" stop-color="#5e28ff"/><stop offset="0.545" stop-color="#4000ff"/><stop offset="1" stop-color="#2600ff"/></linearGradient>
<linearGradient id="w69" gradientUnits="userSpaceOnUse" x1="1230.8" y1="197.5" x2="1276" y2="555.6"><stop offset="0" stop-color="#fff"/><stop offset="0.027" stop-color="#dfd6ff"/><stop offset="0.054" stop-color="#c6b5ff"/><stop offset="0.12" stop-color="#9a7cff"/><stop offset="0.207" stop-color="#774fff"/><stop offset="0.318" stop-color="#5b2bff"/><stop offset="0.428" stop-color="#4914ff"/><stop offset="0.565" stop-color="#3a00ff"/><stop offset="1" stop-color="#2100ff"/></linearGradient>
<linearGradient id="w70" gradientUnits="userSpaceOnUse" x1="1230.8" y1="197.5" x2="1267.7" y2="548.5"><stop offset="0" stop-color="#fff"/><stop offset="0.027" stop-color="#dfd7ff"/><stop offset="0.054" stop-color="#c6b7ff"/><stop offset="0.12" stop-color="#997fff"/><stop offset="0.207" stop-color="#7551ff"/><stop offset="0.318" stop-color="#592dff"/><stop offset="0.438" stop-color="#4514ff"/><stop offset="0.589" stop-color="#3500ff"/><stop offset="1" stop-color="#1d00ff"/></linearGradient>
<linearGradient id="w71" gradientUnits="userSpaceOnUse" x1="1230.8" y1="197.5" x2="1259.7" y2="541.9"><stop offset="0" stop-color="#fff"/><stop offset="0.027" stop-color="#dfd7ff"/><stop offset="0.054" stop-color="#c5b8ff"/><stop offset="0.124" stop-color="#967eff"/><stop offset="0.211" stop-color="#7252ff"/><stop offset="0.318" stop-color="#5630ff"/><stop offset="0.448" stop-color="#4115ff"/><stop offset="0.612" stop-color="#2f00ff"/><stop offset="1" stop-color="#1900ff"/></linearGradient>
<linearGradient id="w72" gradientUnits="userSpaceOnUse" x1="1230.8" y1="197.5" x2="1252.1" y2="535.6"><stop offset="0" stop-color="#fff"/><stop offset="0.054" stop-color="#c5baff"/><stop offset="0.124" stop-color="#9580ff"/><stop offset="0.211" stop-color="#7054ff"/><stop offset="0.318" stop-color="#5432ff"/><stop offset="0.458" stop-color="#3c16ff"/><stop offset="0.635" stop-color="#2a00ff"/><stop offset="1" stop-color="#1500ff"/></linearGradient>
<linearGradient id="w73" gradientUnits="userSpaceOnUse" x1="1230.8" y1="197.5" x2="1244.7" y2="529.6"><stop offset="0" stop-color="#fff"/><stop offset="0.054" stop-color="#c5bbff"/><stop offset="0.124" stop-color="#9482ff"/><stop offset="0.211" stop-color="#6f57ff"/><stop offset="0.318" stop-color="#5235ff"/><stop offset="0.468" stop-color="#3817ff"/><stop offset="0.659" stop-color="#2500ff"/><stop offset="1" stop-color="#10f"/></linearGradient>
<linearGradient id="w74" gradientUnits="userSpaceOnUse" x1="1230.8" y1="197.5" x2="1237.6" y2="523.7"><stop offset="0" stop-color="#fff"/><stop offset="0.054" stop-color="#c4bcff"/><stop offset="0.124" stop-color="#9384ff"/><stop offset="0.207" stop-color="#6e5aff"/><stop offset="0.314" stop-color="#5038ff"/><stop offset="0.475" stop-color="#3418ff"/><stop offset="0.686" stop-color="#1f00ff"/><stop offset="1" stop-color="#0d00ff"/></linearGradient>
<linearGradient id="w75" gradientUnits="userSpaceOnUse" x1="1230.8" y1="197.5" x2="1230.8" y2="517.8"><stop offset="0" stop-color="#fff"/><stop offset="0.054" stop-color="#c4bdff"/><stop offset="0.124" stop-color="#9286ff"/><stop offset="0.207" stop-color="#6d5dff"/><stop offset="0.314" stop-color="#4e3aff"/><stop offset="0.482" stop-color="#311aff"/><stop offset="0.706" stop-color="#1a01ff"/><stop offset="1" stop-color="#0900ff"/></linearGradient>
<linearGradient id="w76" gradientUnits="userSpaceOnUse" x1="1230.8" y1="197.5" x2="1224.2" y2="511.9"><stop offset="0" stop-color="#fff"/><stop offset="0.054" stop-color="#c3beff"/><stop offset="0.124" stop-color="#9188ff"/><stop offset="0.207" stop-color="#6b5fff"/><stop offset="0.314" stop-color="#4c3dff"/><stop offset="0.478" stop-color="#2e1dff"/><stop offset="0.689" stop-color="#1805ff"/><stop offset="1" stop-color="#0500ff"/></linearGradient>
<linearGradient id="w77" gradientUnits="userSpaceOnUse" x1="1230.8" y1="197.5" x2="1217.9" y2="505.9"><stop offset="0" stop-color="#fff"/><stop offset="0.054" stop-color="#c3c0ff"/><stop offset="0.124" stop-color="#918aff"/><stop offset="0.207" stop-color="#6a61ff"/><stop offset="0.314" stop-color="#4a3fff"/><stop offset="0.472" stop-color="#2d20ff"/><stop offset="0.672" stop-color="#1608ff"/><stop offset="0.776" stop-color="#0e00ff"/><stop offset="1" stop-color="#0100ff"/></linearGradient>
<linearGradient id="w78" gradientUnits="userSpaceOnUse" x1="1230.8" y1="197.5" x2="1211.8" y2="500"><stop offset="0" stop-color="#fff"/><stop offset="0.057" stop-color="#c0beff"/><stop offset="0.124" stop-color="#908cff"/><stop offset="0.207" stop-color="#6963ff"/><stop offset="0.314" stop-color="#4842ff"/><stop offset="0.465" stop-color="#2b24ff"/><stop offset="0.656" stop-color="#150cff"/><stop offset="0.806" stop-color="#0900ff"/><stop offset="1" stop-color="#00f"/></linearGradient>
<linearGradient id="w79" gradientUnits="userSpaceOnUse" x1="1230.8" y1="197.5" x2="1205.9" y2="494"><stop offset="0" stop-color="#fff"/><stop offset="0.057" stop-color="#c0bfff"/><stop offset="0.124" stop-color="#8f8eff"/><stop offset="0.207" stop-color="#6766ff"/><stop offset="0.311" stop-color="#4745ff"/><stop offset="0.455" stop-color="#2a28ff"/><stop offset="0.639" stop-color="#1310ff"/><stop offset="0.843" stop-color="#0300ff"/><stop offset="1" stop-color="#00f"/></linearGradient>
<linearGradient id="w80" gradientUnits="userSpaceOnUse" x1="1230.8" y1="197.5" x2="1200.3" y2="488"><stop offset="0" stop-color="#fff"/><stop offset="0.057" stop-color="#c0c0ff"/><stop offset="0.124" stop-color="#8f90ff"/><stop offset="0.207" stop-color="#6668ff"/><stop offset="0.314" stop-color="#4446ff"/><stop offset="0.462" stop-color="#2729ff"/><stop offset="0.645" stop-color="#1012ff"/><stop offset="0.836" stop-color="#0003ff"/><stop offset="1" stop-color="#00f"/></linearGradient>
<linearGradient id="w81" gradientUnits="userSpaceOnUse" x1="1230.8" y1="197.5" x2="1194.9" y2="481.9"><stop offset="0" stop-color="#fff"/><stop offset="0.057" stop-color="#c0c2ff"/><stop offset="0.127" stop-color="#8c90ff"/><stop offset="0.214" stop-color="#6368ff"/><stop offset="0.321" stop-color="#4147ff"/><stop offset="0.478" stop-color="#2229ff"/><stop offset="0.676" stop-color="#0a12ff"/><stop offset="0.789" stop-color="#0009ff"/><stop offset="1" stop-color="#00f"/></linearGradient>
<linearGradient id="w82" gradientUnits="userSpaceOnUse" x1="1230.8" y1="197.5" x2="1189.7" y2="475.8"><stop offset="0" stop-color="#fff"/><stop offset="0.057" stop-color="#c0c3ff"/><stop offset="0.127" stop-color="#8c92ff"/><stop offset="0.214" stop-color="#626aff"/><stop offset="0.324" stop-color="#3f49ff"/><stop offset="0.488" stop-color="#1e2aff"/><stop offset="0.702" stop-color="#0412ff"/><stop offset="1" stop-color="#00f"/></linearGradient>
<linearGradient id="w83" gradientUnits="userSpaceOnUse" x1="1230.8" y1="197.5" x2="1184.7" y2="469.9"><stop offset="0" stop-color="#fff"/><stop offset="0.057" stop-color="#bfc4ff"/><stop offset="0.13" stop-color="#8992ff"/><stop offset="0.221" stop-color="#5e6aff"/><stop offset="0.331" stop-color="#3b4aff"/><stop offset="0.498" stop-color="#1a2bff"/><stop offset="0.716" stop-color="#0013ff"/><stop offset="1" stop-color="#0001ff"/></linearGradient>
<linearGradient id="w84" gradientUnits="userSpaceOnUse" x1="1230.8" y1="197.5" x2="1180" y2="464"><stop offset="0" stop-color="#fff"/><stop offset="0.06" stop-color="#bcc3ff"/><stop offset="0.134" stop-color="#8792ff"/><stop offset="0.224" stop-color="#5c6bff"/><stop offset="0.338" stop-color="#384bff"/><stop offset="0.492" stop-color="#192fff"/><stop offset="0.689" stop-color="#0018ff"/><stop offset="1" stop-color="#0003ff"/></linearGradient>
<linearGradient id="w85" gradientUnits="userSpaceOnUse" x1="1230.8" y1="197.5" x2="1175.4" y2="458.2"><stop offset="0" stop-color="#fff"/><stop offset="0.06" stop-color="#bcc4ff"/><stop offset="0.137" stop-color="#8593ff"/><stop offset="0.227" stop-color="#5a6dff"/><stop offset="0.341" stop-color="#364dff"/><stop offset="0.485" stop-color="#1833ff"/><stop offset="0.662" stop-color="#001dff"/><stop offset="1" stop-color="#0006ff"/></linearGradient>
<linearGradient id="w86" gradientUnits="userSpaceOnUse" x1="1230.8" y1="197.5" x2="1171" y2="452.5"><stop offset="0" stop-color="#fff"/><stop offset="0.06" stop-color="#bdc5ff"/><stop offset="0.137" stop-color="#8495ff"/><stop offset="0.231" stop-color="#586eff"/><stop offset="0.348" stop-color="#334eff"/><stop offset="0.482" stop-color="#1736ff"/><stop offset="0.642" stop-color="#02f"/><stop offset="1" stop-color="#0008ff"/></linearGradient>
<linearGradient id="w87" gradientUnits="userSpaceOnUse" x1="1230.8" y1="197.5" x2="1166.8" y2="446.9"><stop offset="0" stop-color="#fff"/><stop offset="0.064" stop-color="#bac4ff"/><stop offset="0.14" stop-color="#8295ff"/><stop offset="0.237" stop-color="#546eff"/><stop offset="0.355" stop-color="#304fff"/><stop offset="0.478" stop-color="#1539ff"/><stop offset="0.622" stop-color="#0027ff"/><stop offset="1" stop-color="#000bff"/></linearGradient>
<linearGradient id="w88" gradientUnits="userSpaceOnUse" x1="1230.8" y1="197.5" x2="1162.7" y2="441.4"><stop offset="0" stop-color="#fff"/><stop offset="0.064" stop-color="#bac5ff"/><stop offset="0.144" stop-color="#8096ff"/><stop offset="0.241" stop-color="#526fff"/><stop offset="0.358" stop-color="#2d51ff"/><stop offset="0.602" stop-color="#002bff"/><stop offset="1" stop-color="#000dff"/></linearGradient>
<linearGradient id="w89" gradientUnits="userSpaceOnUse" x1="1230.8" y1="197.5" x2="1158.8" y2="436"><stop offset="0" stop-color="#fff"/><stop offset="0.064" stop-color="#bac7ff"/><stop offset="0.144" stop-color="#8098ff"/><stop offset="0.244" stop-color="#5071ff"/><stop offset="0.365" stop-color="#2a52ff"/><stop offset="0.585" stop-color="#0030ff"/><stop offset="1" stop-color="#0010ff"/></linearGradient>
<linearGradient id="w90" gradientUnits="userSpaceOnUse" x1="1230.8" y1="197.5" x2="1155" y2="430.8"><stop offset="0" stop-color="#fff"/><stop offset="0.067" stop-color="#b7c6ff"/><stop offset="0.147" stop-color="#7d98ff"/><stop offset="0.247" stop-color="#4e72ff"/><stop offset="0.371" stop-color="#2753ff"/><stop offset="0.572" stop-color="#0034ff"/><stop offset="1" stop-color="#0012ff"/></linearGradient>
<linearGradient id="w91" gradientUnits="userSpaceOnUse" x1="1230.8" y1="197.5" x2="1151.4" y2="425.6"><stop offset="0" stop-color="#fff"/><stop offset="0.067" stop-color="#b7c7ff"/><stop offset="0.151" stop-color="#7b98ff"/><stop offset="0.254" stop-color="#4b73ff"/><stop offset="0.378" stop-color="#2455ff"/><stop offset="0.559" stop-color="#0038ff"/><stop offset="1" stop-color="#0015ff"/></linearGradient>
<linearGradient id="w92" gradientUnits="userSpaceOnUse" x1="1230.8" y1="197.5" x2="1147.8" y2="420.5"><stop offset="0" stop-color="#fff"/><stop offset="0.07" stop-color="#b4c6ff"/><stop offset="0.154" stop-color="#7999ff"/><stop offset="0.258" stop-color="#4874ff"/><stop offset="0.381" stop-color="#2256ff"/><stop offset="0.545" stop-color="#003dff"/><stop offset="0.749" stop-color="#0028ff"/><stop offset="1" stop-color="#0017ff"/></linearGradient>
<linearGradient id="w93" gradientUnits="userSpaceOnUse" x1="1230.8" y1="197.5" x2="1144.5" y2="415.6"><stop offset="0" stop-color="#fff"/><stop offset="0.07" stop-color="#b4c7ff"/><stop offset="0.154" stop-color="#799bff"/><stop offset="0.258" stop-color="#4876ff"/><stop offset="0.388" stop-color="#1f58ff"/><stop offset="0.535" stop-color="#0041ff"/><stop offset="0.742" stop-color="#002bff"/><stop offset="1" stop-color="#001aff"/></linearGradient>
<linearGradient id="w94" gradientUnits="userSpaceOnUse" x1="1230.8" y1="197.5" x2="1141.2" y2="410.7"><stop offset="0" stop-color="#fff"/><stop offset="0.07" stop-color="#b4c9ff"/><stop offset="0.157" stop-color="#779cff"/><stop offset="0.264" stop-color="#47f"/><stop offset="0.395" stop-color="#1c59ff"/><stop offset="0.525" stop-color="#0045ff"/><stop offset="0.736" stop-color="#002eff"/><stop offset="1" stop-color="#001cff"/></linearGradient>
<linearGradient id="w95" gradientUnits="userSpaceOnUse" x1="1230.8" y1="197.5" x2="1138" y2="405.9"><stop offset="0" stop-color="#fff"/><stop offset="0.074" stop-color="#b2c8ff"/><stop offset="0.161" stop-color="#759cff"/><stop offset="0.268" stop-color="#4278ff"/><stop offset="0.401" stop-color="#195aff"/><stop offset="0.515" stop-color="#0049ff"/><stop offset="0.729" stop-color="#0031ff"/><stop offset="1" stop-color="#001fff"/></linearGradient>
<linearGradient id="w96" gradientUnits="userSpaceOnUse" x1="1230.8" y1="197.5" x2="1134.9" y2="401.2"><stop offset="0" stop-color="#fff"/><stop offset="0.074" stop-color="#b2c9ff"/><stop offset="0.164" stop-color="#739dff"/><stop offset="0.274" stop-color="#3f79ff"/><stop offset="0.408" stop-color="#165cff"/><stop offset="0.505" stop-color="#004dff"/><stop offset="0.722" stop-color="#0035ff"/><stop offset="1" stop-color="#02f"/></linearGradient>
<linearGradient id="w97" gradientUnits="userSpaceOnUse" x1="1230.8" y1="197.5" x2="1132" y2="396.6"><stop offset="0" stop-color="#fff"/><stop offset="0.074" stop-color="#b2caff"/><stop offset="0.167" stop-color="#719eff"/><stop offset="0.278" stop-color="#3d7aff"/><stop offset="0.415" stop-color="#125dff"/><stop offset="0.495" stop-color="#0051ff"/><stop offset="0.719" stop-color="#0038ff"/><stop offset="1" stop-color="#0024ff"/></linearGradient>
<linearGradient id="w98" gradientUnits="userSpaceOnUse" x1="1230.8" y1="197.5" x2="1129.1" y2="392.1"><stop offset="0" stop-color="#fff"/><stop offset="0.037" stop-color="#d5e3ff"/><stop offset="0.077" stop-color="#afcaff"/><stop offset="0.167" stop-color="#70a0ff"/><stop offset="0.281" stop-color="#3b7cff"/><stop offset="0.421" stop-color="#0f5fff"/><stop offset="0.488" stop-color="#0054ff"/><stop offset="0.712" stop-color="#003bff"/><stop offset="1" stop-color="#0027ff"/></linearGradient>
<linearGradient id="w99" gradientUnits="userSpaceOnUse" x1="1230.8" y1="197.5" x2="1126.3" y2="387.6"><stop offset="0" stop-color="#fff"/><stop offset="0.077" stop-color="#afcbff"/><stop offset="0.171" stop-color="#6ea0ff"/><stop offset="0.288" stop-color="#387dff"/><stop offset="0.428" stop-color="#0c60ff"/><stop offset="0.482" stop-color="#0058ff"/><stop offset="0.709" stop-color="#003eff"/><stop offset="1" stop-color="#002aff"/></linearGradient>
<linearGradient id="w100" gradientUnits="userSpaceOnUse" x1="1230.8" y1="197.5" x2="1123.5" y2="383.3"><stop offset="0" stop-color="#fff"/><stop offset="0.077" stop-color="#afccff"/><stop offset="0.174" stop-color="#6ca1ff"/><stop offset="0.291" stop-color="#367eff"/><stop offset="0.435" stop-color="#0962ff"/><stop offset="0.475" stop-color="#005cff"/><stop offset="0.706" stop-color="#0041ff"/><stop offset="1" stop-color="#002cff"/></linearGradient>
<linearGradient id="w101" gradientUnits="userSpaceOnUse" x1="1230.8" y1="197.5" x2="1120.9" y2="379"><stop offset="0" stop-color="#fff"/><stop offset="0.037" stop-color="#d5e5ff"/><stop offset="0.08" stop-color="#adccff"/><stop offset="0.177" stop-color="#6aa2ff"/><stop offset="0.298" stop-color="#337fff"/><stop offset="0.441" stop-color="#0663ff"/><stop offset="0.468" stop-color="#005fff"/><stop offset="0.686" stop-color="#0046ff"/><stop offset="1" stop-color="#002fff"/></linearGradient>
<linearGradient id="w102" gradientUnits="userSpaceOnUse" x1="1230.8" y1="197.5" x2="1118.3" y2="374.7"><stop offset="0" stop-color="#fff"/><stop offset="0.037" stop-color="#d5e6ff"/><stop offset="0.08" stop-color="#adcdff"/><stop offset="0.181" stop-color="#68a3ff"/><stop offset="0.301" stop-color="#3181ff"/><stop offset="0.448" stop-color="#0365ff"/><stop offset="0.689" stop-color="#0048ff"/><stop offset="1" stop-color="#0032ff"/></linearGradient>
<linearGradient id="w103" gradientUnits="userSpaceOnUse" x1="1230.8" y1="197.5" x2="1115.8" y2="370.6"><stop offset="0" stop-color="#fff"/><stop offset="0.08" stop-color="#adceff"/><stop offset="0.181" stop-color="#68a5ff"/><stop offset="0.304" stop-color="#2f83ff"/><stop offset="0.452" stop-color="#0167ff"/><stop offset="0.692" stop-color="#004bff"/><stop offset="1" stop-color="#0035ff"/></linearGradient>
<linearGradient id="w104" gradientUnits="userSpaceOnUse" x1="1230.8" y1="197.5" x2="1113.3" y2="366.5"><stop offset="0" stop-color="#fff"/><stop offset="0.08" stop-color="#adcfff"/><stop offset="0.181" stop-color="#68a7ff"/><stop offset="0.301" stop-color="#2f86ff"/><stop offset="0.448" stop-color="#006aff"/><stop offset="0.689" stop-color="#004eff"/><stop offset="1" stop-color="#0038ff"/></linearGradient>
<linearGradient id="w105" gradientUnits="userSpaceOnUse" x1="1230.8" y1="197.5" x2="1110.9" y2="362.5"><stop offset="0" stop-color="#fff"/><stop offset="0.08" stop-color="#add1ff"/><stop offset="0.181" stop-color="#68a9ff"/><stop offset="0.298" stop-color="#3089ff"/><stop offset="0.441" stop-color="#006eff"/><stop offset="0.686" stop-color="#0051ff"/><stop offset="1" stop-color="#003aff"/></linearGradient>
<linearGradient id="w106" gradientUnits="userSpaceOnUse" x1="1230.8" y1="197.5" x2="1108.5" y2="358.6"><stop offset="0" stop-color="#fff"/><stop offset="0.08" stop-color="#aed2ff"/><stop offset="0.177" stop-color="#69acff"/><stop offset="0.294" stop-color="#308cff"/><stop offset="0.435" stop-color="#0172ff"/><stop offset="0.682" stop-color="#0054ff"/><stop offset="1" stop-color="#003dff"/></linearGradient>
<linearGradient id="w107" gradientUnits="userSpaceOnUse" x1="1230.8" y1="197.5" x2="1106.2" y2="354.6"><stop offset="0" stop-color="#fff"/><stop offset="0.08" stop-color="#aed3ff"/><stop offset="0.177" stop-color="#69aeff"/><stop offset="0.294" stop-color="#308fff"/><stop offset="0.431" stop-color="#0075ff"/><stop offset="0.679" stop-color="#0057ff"/><stop offset="1" stop-color="#0040ff"/></linearGradient>
<linearGradient id="w108" gradientUnits="userSpaceOnUse" x1="1230.8" y1="197.5" x2="1104" y2="350.8"><stop offset="0" stop-color="#fff"/><stop offset="0.08" stop-color="#aed4ff"/><stop offset="0.177" stop-color="#69b0ff"/><stop offset="0.291" stop-color="#3092ff"/><stop offset="0.428" stop-color="#0079ff"/><stop offset="0.679" stop-color="#005aff"/><stop offset="1" stop-color="#0043ff"/></linearGradient>
<linearGradient id="w109" gradientUnits="userSpaceOnUse" x1="1230.8" y1="197.5" x2="1101.7" y2="347"><stop offset="0" stop-color="#fff"/><stop offset="0.08" stop-color="#aed6ff"/><stop offset="0.174" stop-color="#6bb3ff"/><stop offset="0.288" stop-color="#3195ff"/><stop offset="0.421" stop-color="#017cff"/><stop offset="0.672" stop-color="#005eff"/><stop offset="1" stop-color="#0046ff"/></linearGradient>
<linearGradient id="w110" gradientUnits="userSpaceOnUse" x1="1230.8" y1="197.5" x2="1099.6" y2="343.2"><stop offset="0" stop-color="#fff"/><stop offset="0.08" stop-color="#aed7ff"/><stop offset="0.174" stop-color="#6bb5ff"/><stop offset="0.284" stop-color="#3298ff"/><stop offset="0.418" stop-color="#0080ff"/><stop offset="0.672" stop-color="#0061ff"/><stop offset="1" stop-color="#004aff"/></linearGradient>
<linearGradient id="w111" gradientUnits="userSpaceOnUse" x1="1230.8" y1="197.5" x2="1097.4" y2="339.5"><stop offset="0" stop-color="#fff"/><stop offset="0.08" stop-color="#afd8ff"/><stop offset="0.174" stop-color="#6bb7ff"/><stop offset="0.284" stop-color="#319bff"/><stop offset="0.415" stop-color="#0083ff"/><stop offset="0.669" stop-color="#0065ff"/><stop offset="1" stop-color="#004dff"/></linearGradient>
<linearGradient id="w112" gradientUnits="userSpaceOnUse" x1="1230.8" y1="197.5" x2="1095.3" y2="335.9"><stop offset="0" stop-color="#fff"/><stop offset="0.08" stop-color="#afd9ff"/><stop offset="0.174" stop-color="#6bb9ff"/><stop offset="0.284" stop-color="#319dff"/><stop offset="0.411" stop-color="#0086ff"/><stop offset="0.669" stop-color="#0068ff"/><stop offset="1" stop-color="#0050ff"/></linearGradient>
<linearGradient id="w113" gradientUnits="userSpaceOnUse" x1="1230.8" y1="197.5" x2="1093.2" y2="332.2"><stop offset="0" stop-color="#fff"/><stop offset="0.08" stop-color="#afdaff"/><stop offset="0.174" stop-color="#6bbbff"/><stop offset="0.281" stop-color="#32a1ff"/><stop offset="0.408" stop-color="#008aff"/><stop offset="0.666" stop-color="#006bff"/><stop offset="1" stop-color="#0053ff"/></linearGradient>
<linearGradient id="w114" gradientUnits="userSpaceOnUse" x1="1230.8" y1="197.5" x2="1091.2" y2="328.6"><stop offset="0" stop-color="#fff"/><stop offset="0.08" stop-color="#afdbff"/><stop offset="0.171" stop-color="#6dbeff"/><stop offset="0.281" stop-color="#31a3ff"/><stop offset="0.405" stop-color="#008dff"/><stop offset="0.666" stop-color="#006eff"/><stop offset="1" stop-color="#0057ff"/></linearGradient>
<linearGradient id="w115" gradientUnits="userSpaceOnUse" x1="1230.8" y1="197.5" x2="1089.2" y2="325"><stop offset="0" stop-color="#fff"/><stop offset="0.08" stop-color="#afddff"/><stop offset="0.171" stop-color="#6dc0ff"/><stop offset="0.278" stop-color="#32a6ff"/><stop offset="0.398" stop-color="#0191ff"/><stop offset="0.659" stop-color="#0072ff"/><stop offset="1" stop-color="#005aff"/></linearGradient>
<linearGradient id="w116" gradientUnits="userSpaceOnUse" x1="1230.8" y1="197.5" x2="1087.2" y2="321.4"><stop offset="0" stop-color="#fff"/><stop offset="0.08" stop-color="#b0deff"/><stop offset="0.171" stop-color="#6dc2ff"/><stop offset="0.274" stop-color="#3af"/><stop offset="0.395" stop-color="#0195ff"/><stop offset="0.659" stop-color="#0076ff"/><stop offset="1" stop-color="#005eff"/></linearGradient>
<linearGradient id="w117" gradientUnits="userSpaceOnUse" x1="1230.8" y1="197.5" x2="1085.3" y2="317.9"><stop offset="0" stop-color="#fff"/><stop offset="0.08" stop-color="#b0dfff"/><stop offset="0.171" stop-color="#6dc4ff"/><stop offset="0.278" stop-color="#31acff"/><stop offset="0.395" stop-color="#0098ff"/><stop offset="0.659" stop-color="#0079ff"/><stop offset="1" stop-color="#0062ff"/></linearGradient>
<linearGradient id="w118" gradientUnits="userSpaceOnUse" x1="1230.8" y1="197.5" x2="1083.4" y2="314.3"><stop offset="0" stop-color="#fff"/><stop offset="0.08" stop-color="#b0e0ff"/><stop offset="0.171" stop-color="#6dc6ff"/><stop offset="0.274" stop-color="#32afff"/><stop offset="0.391" stop-color="#009bff"/><stop offset="0.659" stop-color="#007dff"/><stop offset="1" stop-color="#0065ff"/></linearGradient>
<linearGradient id="w119" gradientUnits="userSpaceOnUse" x1="1230.8" y1="197.5" x2="1081.5" y2="310.8"><stop offset="0" stop-color="#fff"/><stop offset="0.077" stop-color="#b3e2ff"/><stop offset="0.167" stop-color="#6fc9ff"/><stop offset="0.271" stop-color="#33b2ff"/><stop offset="0.388" stop-color="#009fff"/><stop offset="0.656" stop-color="#0081ff"/><stop offset="1" stop-color="#0069ff"/></linearGradient>
<linearGradient id="w120" gradientUnits="userSpaceOnUse" x1="1230.8" y1="197.5" x2="1079.7" y2="307.3"><stop offset="0" stop-color="#fff"/><stop offset="0.077" stop-color="#b3e4ff"/><stop offset="0.167" stop-color="#6fcbff"/><stop offset="0.268" stop-color="#35b5ff"/><stop offset="0.385" stop-color="#00a2ff"/><stop offset="0.656" stop-color="#0084ff"/><stop offset="1" stop-color="#006dff"/></linearGradient>
<linearGradient id="w121" gradientUnits="userSpaceOnUse" x1="1230.8" y1="197.5" x2="1077.9" y2="303.8"><stop offset="0" stop-color="#fff"/><stop offset="0.077" stop-color="#b4e5ff"/><stop offset="0.167" stop-color="#6fcdff"/><stop offset="0.268" stop-color="#34b8ff"/><stop offset="0.381" stop-color="#00a6ff"/><stop offset="0.652" stop-color="#08f"/><stop offset="1" stop-color="#0071ff"/></linearGradient>
<linearGradient id="w122" gradientUnits="userSpaceOnUse" x1="1230.8" y1="197.5" x2="1076" y2="300.3"><stop offset="0" stop-color="#fff"/><stop offset="0.077" stop-color="#b4e6ff"/><stop offset="0.167" stop-color="#6fcfff"/><stop offset="0.268" stop-color="#34bbff"/><stop offset="0.378" stop-color="#0af"/><stop offset="0.652" stop-color="#008cff"/><stop offset="1" stop-color="#0075ff"/></linearGradient>
<linearGradient id="w123" gradientUnits="userSpaceOnUse" x1="1230.8" y1="197.5" x2="1074.3" y2="296.8"><stop offset="0" stop-color="#fff"/><stop offset="0.077" stop-color="#b4e7ff"/><stop offset="0.164" stop-color="#72d2ff"/><stop offset="0.264" stop-color="#35beff"/><stop offset="0.375" stop-color="#01adff"/><stop offset="0.649" stop-color="#0090ff"/><stop offset="1" stop-color="#007aff"/></linearGradient>
<linearGradient id="w124" gradientUnits="userSpaceOnUse" x1="1230.8" y1="197.5" x2="1072.6" y2="293.3"><stop offset="0" stop-color="#fff"/><stop offset="0.08" stop-color="#b2e7ff"/><stop offset="0.167" stop-color="#6fd3ff"/><stop offset="0.268" stop-color="#33c0ff"/><stop offset="0.375" stop-color="#00b1ff"/><stop offset="0.649" stop-color="#0095ff"/><stop offset="1" stop-color="#007eff"/></linearGradient>
<linearGradient id="w125" gradientUnits="userSpaceOnUse" x1="1230.8" y1="197.5" x2="1070.8" y2="289.8"><stop offset="0" stop-color="#fff"/><stop offset="0.077" stop-color="#b5e9ff"/><stop offset="0.164" stop-color="#72d6ff"/><stop offset="0.261" stop-color="#36c4ff"/><stop offset="0.371" stop-color="#00b5ff"/><stop offset="0.649" stop-color="#09f"/><stop offset="1" stop-color="#0083ff"/></linearGradient>
<linearGradient id="w126" gradientUnits="userSpaceOnUse" x1="1230.8" y1="197.5" x2="1069.2" y2="286.4"><stop offset="0" stop-color="#fff"/><stop offset="0.077" stop-color="#b5eaff"/><stop offset="0.164" stop-color="#72d8ff"/><stop offset="0.261" stop-color="#36c7ff"/><stop offset="0.368" stop-color="#01b8ff"/><stop offset="0.645" stop-color="#009dff"/><stop offset="1" stop-color="#08f"/></linearGradient>
<linearGradient id="w127" gradientUnits="userSpaceOnUse" x1="1230.8" y1="197.5" x2="1067.5" y2="282.9"><stop offset="0" stop-color="#fff"/><stop offset="0.077" stop-color="#b5ecff"/><stop offset="0.164" stop-color="#72daff"/><stop offset="0.261" stop-color="#35caff"/><stop offset="0.368" stop-color="#00bcff"/><stop offset="0.645" stop-color="#00a2ff"/><stop offset="1" stop-color="#008dff"/></linearGradient>
<linearGradient id="w128" gradientUnits="userSpaceOnUse" x1="1230.8" y1="197.5" x2="1065.9" y2="279.4"><stop offset="0" stop-color="#fff"/><stop offset="0.077" stop-color="#b6edff"/><stop offset="0.164" stop-color="#72dcff"/><stop offset="0.258" stop-color="#37ceff"/><stop offset="0.365" stop-color="#00c0ff"/><stop offset="0.645" stop-color="#00a6ff"/><stop offset="1" stop-color="#0092ff"/></linearGradient>
<linearGradient id="w129" gradientUnits="userSpaceOnUse" x1="1230.8" y1="197.5" x2="1064.2" y2="275.9"><stop offset="0" stop-color="#fff"/><stop offset="0.077" stop-color="#b6eeff"/><stop offset="0.164" stop-color="#72deff"/><stop offset="0.258" stop-color="#37d0ff"/><stop offset="0.361" stop-color="#01c4ff"/><stop offset="0.645" stop-color="#00abff"/><stop offset="1" stop-color="#0097ff"/></linearGradient>
<linearGradient id="w130" gradientUnits="userSpaceOnUse" x1="1230.8" y1="197.5" x2="1062.6" y2="272.4"><stop offset="0" stop-color="#fff"/><stop offset="0.077" stop-color="#b6efff"/><stop offset="0.164" stop-color="#73e1ff"/><stop offset="0.261" stop-color="#35d3ff"/><stop offset="0.361" stop-color="#00c8ff"/><stop offset="0.645" stop-color="#00b0ff"/><stop offset="1" stop-color="#009dff"/></linearGradient>
<linearGradient id="w131" gradientUnits="userSpaceOnUse" x1="1230.8" y1="197.5" x2="1061" y2="268.9"><stop offset="0" stop-color="#fff"/><stop offset="0.077" stop-color="#b7f0ff"/><stop offset="0.164" stop-color="#73e3ff"/><stop offset="0.258" stop-color="#36d7ff"/><stop offset="0.358" stop-color="#0cf"/><stop offset="0.642" stop-color="#00b5ff"/><stop offset="1" stop-color="#00a3ff"/></linearGradient>
<linearGradient id="w132" gradientUnits="userSpaceOnUse" x1="1230.8" y1="197.5" x2="1059.5" y2="265.3"><stop offset="0" stop-color="#fff"/><stop offset="0.077" stop-color="#b7f2ff"/><stop offset="0.164" stop-color="#73e5ff"/><stop offset="0.261" stop-color="#34d9ff"/><stop offset="0.358" stop-color="#00d0ff"/><stop offset="0.645" stop-color="#00baff"/><stop offset="1" stop-color="#00a9ff"/></linearGradient>
<linearGradient id="w133" gradientUnits="userSpaceOnUse" x1="1230.8" y1="197.5" x2="1057.9" y2="261.8"><stop offset="0" stop-color="#fff"/><stop offset="0.077" stop-color="#b7f3ff"/><stop offset="0.161" stop-color="#76e8ff"/><stop offset="0.254" stop-color="#38ddff"/><stop offset="0.355" stop-color="#00d4ff"/><stop offset="1" stop-color="#00b0ff"/></linearGradient>
<linearGradient id="w134" gradientUnits="userSpaceOnUse" x1="1230.8" y1="197.5" x2="1056.4" y2="258.2"><stop offset="0" stop-color="#fff"/><stop offset="0.077" stop-color="#b8f4ff"/><stop offset="0.161" stop-color="#76eaff"/><stop offset="0.251" stop-color="#3ae1ff"/><stop offset="0.351" stop-color="#01d8ff"/><stop offset="1" stop-color="#00b7ff"/></linearGradient>
<linearGradient id="w135" gradientUnits="userSpaceOnUse" x1="1230.8" y1="197.5" x2="1054.8" y2="254.7"><stop offset="0" stop-color="#fff"/><stop offset="0.077" stop-color="#b8f5ff"/><stop offset="0.161" stop-color="#76edff"/><stop offset="0.254" stop-color="#37e4ff"/><stop offset="0.351" stop-color="#0df"/><stop offset="1" stop-color="#00beff"/></linearGradient>
<linearGradient id="w136" gradientUnits="userSpaceOnUse" x1="1230.8" y1="197.5" x2="1053.3" y2="251.1"><stop offset="0" stop-color="#fff"/><stop offset="0.077" stop-color="#b9f7ff"/><stop offset="0.161" stop-color="#77efff"/><stop offset="0.251" stop-color="#39e8ff"/><stop offset="0.348" stop-color="#01e1ff"/><stop offset="1" stop-color="#00c5ff"/></linearGradient>
<linearGradient id="w137" gradientUnits="userSpaceOnUse" x1="1230.8" y1="197.5" x2="1051.8" y2="247.5"><stop offset="0" stop-color="#fff"/><stop offset="0.077" stop-color="#b9f8ff"/><stop offset="0.161" stop-color="#77f1ff"/><stop offset="0.251" stop-color="#39ebff"/><stop offset="0.348" stop-color="#00e6ff"/><stop offset="1" stop-color="#00cdff"/></linearGradient>
<linearGradient id="w138" gradientUnits="userSpaceOnUse" x1="1230.8" y1="197.5" x2="1050.3" y2="243.8"><stop offset="0" stop-color="#fff"/><stop offset="0.077" stop-color="#b9f9ff"/><stop offset="0.161" stop-color="#77f4ff"/><stop offset="0.251" stop-color="#39efff"/><stop offset="0.344" stop-color="#01eaff"/><stop offset="1" stop-color="#00d6ff"/></linearGradient>
<linearGradient id="w139" gradientUnits="userSpaceOnUse" x1="1230.8" y1="197.5" x2="1048.9" y2="240.2"><stop offset="0" stop-color="#fff"/><stop offset="0.077" stop-color="#bafbff"/><stop offset="0.161" stop-color="#78f6ff"/><stop offset="0.344" stop-color="#00efff"/><stop offset="1" stop-color="#00deff"/></linearGradient>
<linearGradient id="w140" gradientUnits="userSpaceOnUse" x1="1230.8" y1="197.5" x2="1047.4" y2="236.5"><stop offset="0" stop-color="#fff"/><stop offset="0.077" stop-color="#bafcff"/><stop offset="0.161" stop-color="#78f9ff"/><stop offset="0.341" stop-color="#01f4ff"/><stop offset="1" stop-color="#00e8ff"/></linearGradient>
<linearGradient id="w141" gradientUnits="userSpaceOnUse" x1="1230.8" y1="197.5" x2="1045.9" y2="232.8"><stop offset="0" stop-color="#fff"/><stop offset="0.161" stop-color="#78fcff"/><stop offset="0.341" stop-color="#00f9ff"/><stop offset="1" stop-color="#00f2ff"/></linearGradient>
<linearGradient id="w142" gradientUnits="userSpaceOnUse" x1="1230.8" y1="197.5" x2="1044.5" y2="229"><stop offset="0" stop-color="#fff"/><stop offset="0.164" stop-color="#76feff"/><stop offset="0.341" stop-color="#00feff"/><stop offset="1" stop-color="#00fdff"/></linearGradient>
<linearGradient id="w143" gradientUnits="userSpaceOnUse" x1="1230.8" y1="197.5" x2="1043" y2="225.2"><stop offset="0" stop-color="#fff"/><stop offset="0.161" stop-color="#78fffd"/><stop offset="0.338" stop-color="#00fffb"/><stop offset="1" stop-color="#00fff6"/></linearGradient>
<linearGradient id="w144" gradientUnits="userSpaceOnUse" x1="1230.8" y1="197.5" x2="1041.6" y2="221.4"><stop offset="0" stop-color="#fff"/><stop offset="0.161" stop-color="#77fffa"/><stop offset="0.338" stop-color="#00fff5"/><stop offset="1" stop-color="#00ffeb"/></linearGradient>
<linearGradient id="w145" gradientUnits="userSpaceOnUse" x1="1230.8" y1="197.5" x2="1040.2" y2="217.5"><stop offset="0" stop-color="#fff"/><stop offset="0.157" stop-color="#79fff7"/><stop offset="0.334" stop-color="#00fff0"/><stop offset="1" stop-color="#00ffe0"/></linearGradient>
<linearGradient id="w146" gradientUnits="userSpaceOnUse" x1="1230.8" y1="197.5" x2="1038.8" y2="213.6"><stop offset="0" stop-color="#fff"/><stop offset="0.157" stop-color="#78fff5"/><stop offset="0.334" stop-color="#00ffeb"/><stop offset="1" stop-color="#00ffd5"/></linearGradient>
<linearGradient id="w147" gradientUnits="userSpaceOnUse" x1="1230.8" y1="197.5" x2="1037.4" y2="209.7"><stop offset="0" stop-color="#fff"/><stop offset="0.077" stop-color="#b9fff8"/><stop offset="0.161" stop-color="#75fff2"/><stop offset="0.334" stop-color="#00ffe6"/><stop offset="1" stop-color="#00ffcb"/></linearGradient>
<linearGradient id="w148" gradientUnits="userSpaceOnUse" x1="1230.8" y1="197.5" x2="1036" y2="205.7"><stop offset="0" stop-color="#fff"/><stop offset="0.077" stop-color="#b8fff7"/><stop offset="0.157" stop-color="#77ffef"/><stop offset="0.331" stop-color="#00ffe1"/><stop offset="1" stop-color="#00ffc0"/></linearGradient>
<linearGradient id="w149" gradientUnits="userSpaceOnUse" x1="1230.8" y1="197.5" x2="1034.7" y2="201.6"><stop offset="0" stop-color="#fff"/><stop offset="0.077" stop-color="#b8fff5"/><stop offset="0.157" stop-color="#76ffec"/><stop offset="0.331" stop-color="#00ffdc"/><stop offset="1" stop-color="#00ffb6"/></linearGradient>
<linearGradient id="w150" gradientUnits="userSpaceOnUse" x1="1230.8" y1="197.5" x2="1033.3" y2="197.5"><stop offset="0" stop-color="#fff"/><stop offset="0.077" stop-color="#b7fff4"/><stop offset="0.157" stop-color="#75ffe9"/><stop offset="0.247" stop-color="#34ffdf"/><stop offset="0.331" stop-color="#00ffd7"/><stop offset="0.635" stop-color="#00ffbf"/><stop offset="1" stop-color="#00ffac"/></linearGradient>
<linearGradient id="w151" gradientUnits="userSpaceOnUse" x1="1230.8" y1="197.5" x2="1032" y2="193.3"><stop offset="0" stop-color="#fff"/><stop offset="0.074" stop-color="#bafff3"/><stop offset="0.154" stop-color="#77ffe7"/><stop offset="0.328" stop-color="#00ffd2"/><stop offset="0.632" stop-color="#00ffb8"/><stop offset="1" stop-color="#00ffa2"/></linearGradient>
<linearGradient id="w152" gradientUnits="userSpaceOnUse" x1="1230.8" y1="197.5" x2="1030.8" y2="189.1"><stop offset="0" stop-color="#fff"/><stop offset="0.074" stop-color="#b9fff1"/><stop offset="0.154" stop-color="#76ffe4"/><stop offset="0.241" stop-color="#37ffd8"/><stop offset="0.328" stop-color="#00ffcd"/><stop offset="0.632" stop-color="#00ffb0"/><stop offset="1" stop-color="#00ff98"/></linearGradient>
<linearGradient id="w153" gradientUnits="userSpaceOnUse" x1="1230.8" y1="197.5" x2="1029.6" y2="184.8"><stop offset="0" stop-color="#fff"/><stop offset="0.074" stop-color="#b9fff0"/><stop offset="0.154" stop-color="#76ffe2"/><stop offset="0.244" stop-color="#34ffd3"/><stop offset="0.328" stop-color="#00ffc8"/><stop offset="0.632" stop-color="#00ffa8"/><stop offset="1" stop-color="#00ff8e"/></linearGradient>
<linearGradient id="w154" gradientUnits="userSpaceOnUse" x1="1230.8" y1="197.5" x2="1028.4" y2="180.5"><stop offset="0" stop-color="#fff"/><stop offset="0.074" stop-color="#b8ffee"/><stop offset="0.151" stop-color="#78ffdf"/><stop offset="0.234" stop-color="#3affd1"/><stop offset="0.324" stop-color="#01ffc3"/><stop offset="0.629" stop-color="#00ffa1"/><stop offset="1" stop-color="#00ff85"/></linearGradient>
<linearGradient id="w155" gradientUnits="userSpaceOnUse" x1="1230.8" y1="197.5" x2="1027.2" y2="176.1"><stop offset="0" stop-color="#fff"/><stop offset="0.074" stop-color="#b8ffed"/><stop offset="0.151" stop-color="#7fd"/><stop offset="0.234" stop-color="#3affcd"/><stop offset="0.324" stop-color="#00ffbe"/><stop offset="0.629" stop-color="#0f9"/><stop offset="1" stop-color="#00ff7b"/></linearGradient>
<linearGradient id="w156" gradientUnits="userSpaceOnUse" x1="1230.8" y1="197.5" x2="1026.2" y2="171.7"><stop offset="0" stop-color="#fff"/><stop offset="0.074" stop-color="#b7ffeb"/><stop offset="0.151" stop-color="#76ffda"/><stop offset="0.234" stop-color="#39ffc9"/><stop offset="0.324" stop-color="#00ffb9"/><stop offset="0.625" stop-color="#00ff92"/><stop offset="1" stop-color="#00ff72"/></linearGradient>
<linearGradient id="w157" gradientUnits="userSpaceOnUse" x1="1230.8" y1="197.5" x2="1025.2" y2="167.1"><stop offset="0" stop-color="#fff"/><stop offset="0.074" stop-color="#b7ffea"/><stop offset="0.151" stop-color="#76ffd7"/><stop offset="0.237" stop-color="#37ffc4"/><stop offset="0.324" stop-color="#00ffb4"/><stop offset="0.625" stop-color="#00ff8b"/><stop offset="1" stop-color="#00ff69"/></linearGradient>
<linearGradient id="w158" gradientUnits="userSpaceOnUse" x1="1230.8" y1="197.5" x2="1024.3" y2="162.6"><stop offset="0" stop-color="#fff"/><stop offset="0.074" stop-color="#b7ffe8"/><stop offset="0.151" stop-color="#76ffd4"/><stop offset="0.237" stop-color="#36ffc0"/><stop offset="0.324" stop-color="#00ffaf"/><stop offset="0.625" stop-color="#00ff83"/><stop offset="1" stop-color="#00ff5f"/></linearGradient>
<linearGradient id="w159" gradientUnits="userSpaceOnUse" x1="1230.8" y1="197.5" x2="1023.5" y2="158"><stop offset="0" stop-color="#fff"/><stop offset="0.074" stop-color="#b6ffe7"/><stop offset="0.151" stop-color="#75ffd1"/><stop offset="0.237" stop-color="#36ffbc"/><stop offset="0.324" stop-color="#0fa"/><stop offset="0.625" stop-color="#00ff7c"/><stop offset="1" stop-color="#00ff56"/></linearGradient>
<linearGradient id="w160" gradientUnits="userSpaceOnUse" x1="1230.8" y1="197.5" x2="1022.8" y2="153.3"><stop offset="0" stop-color="#fff"/><stop offset="0.074" stop-color="#b6ffe5"/><stop offset="0.151" stop-color="#75ffcf"/><stop offset="0.237" stop-color="#36ffb8"/><stop offset="0.324" stop-color="#00ffa5"/><stop offset="0.625" stop-color="#00ff75"/><stop offset="1" stop-color="#00ff4d"/></linearGradient>
<linearGradient id="w161" gradientUnits="userSpaceOnUse" x1="1230.8" y1="197.5" x2="1022.2" y2="148.6"><stop offset="0" stop-color="#fff"/><stop offset="0.074" stop-color="#b6ffe4"/><stop offset="0.151" stop-color="#75ffcc"/><stop offset="0.234" stop-color="#38ffb5"/><stop offset="0.324" stop-color="#00ffa1"/><stop offset="0.625" stop-color="#00ff6d"/><stop offset="1" stop-color="#00ff45"/></linearGradient>
<linearGradient id="w162" gradientUnits="userSpaceOnUse" x1="1230.8" y1="197.5" x2="1021.9" y2="143.9"><stop offset="0" stop-color="#fff"/><stop offset="0.074" stop-color="#b6ffe2"/><stop offset="0.151" stop-color="#74ffc9"/><stop offset="0.234" stop-color="#38ffb1"/><stop offset="0.324" stop-color="#00ff9c"/><stop offset="0.625" stop-color="#0f6"/><stop offset="1" stop-color="#00ff3c"/></linearGradient>
<linearGradient id="w163" gradientUnits="userSpaceOnUse" x1="1230.8" y1="197.5" x2="1021.8" y2="139.1"><stop offset="0" stop-color="#fff"/><stop offset="0.074" stop-color="#b6ffe1"/><stop offset="0.151" stop-color="#74ffc6"/><stop offset="0.234" stop-color="#38ffae"/><stop offset="0.324" stop-color="#01ff97"/><stop offset="0.625" stop-color="#00ff5f"/><stop offset="1" stop-color="#0f3"/></linearGradient>
<linearGradient id="w164" gradientUnits="userSpaceOnUse" x1="1230.8" y1="197.5" x2="1022" y2="134.4"><stop offset="0" stop-color="#fff"/><stop offset="0.074" stop-color="#b6ffdf"/><stop offset="0.151" stop-color="#75ffc4"/><stop offset="0.237" stop-color="#36ffa9"/><stop offset="0.328" stop-color="#00ff91"/><stop offset="0.625" stop-color="#00ff58"/><stop offset="1" stop-color="#00ff2b"/></linearGradient>
<linearGradient id="w165" gradientUnits="userSpaceOnUse" x1="1230.8" y1="197.5" x2="1022.5" y2="129.8"><stop offset="0" stop-color="#fff"/><stop offset="0.074" stop-color="#b6ffde"/><stop offset="0.154" stop-color="#72ffc0"/><stop offset="0.244" stop-color="#33ffa3"/><stop offset="0.331" stop-color="#00ff8c"/><stop offset="0.629" stop-color="#00ff51"/><stop offset="1" stop-color="#00ff23"/></linearGradient>
<linearGradient id="w166" gradientUnits="userSpaceOnUse" x1="1230.8" y1="197.5" x2="1023.4" y2="125.3"><stop offset="0" stop-color="#fff"/><stop offset="0.074" stop-color="#b6ffdd"/><stop offset="0.151" stop-color="#76ffbe"/><stop offset="0.237" stop-color="#38ffa1"/><stop offset="0.331" stop-color="#01ff87"/><stop offset="0.629" stop-color="#00ff4b"/><stop offset="1" stop-color="#00ff1b"/></linearGradient>
<linearGradient id="w167" gradientUnits="userSpaceOnUse" x1="1230.8" y1="197.5" x2="1024.8" y2="120.9"><stop offset="0" stop-color="#fff"/><stop offset="0.074" stop-color="#b6ffdb"/><stop offset="0.154" stop-color="#74ffbb"/><stop offset="0.241" stop-color="#37ff9d"/><stop offset="0.334" stop-color="#01ff82"/><stop offset="0.629" stop-color="#00ff45"/><stop offset="1" stop-color="#00ff14"/></linearGradient>
<linearGradient id="w168" gradientUnits="userSpaceOnUse" x1="1230.8" y1="197.5" x2="1026.8" y2="116.7"><stop offset="0" stop-color="#fff"/><stop offset="0.074" stop-color="#b7ffda"/><stop offset="0.157" stop-color="#73ffb7"/><stop offset="0.247" stop-color="#35ff98"/><stop offset="0.341" stop-color="#00ff7c"/><stop offset="0.632" stop-color="#00ff3e"/><stop offset="1" stop-color="#00ff0d"/></linearGradient>
<linearGradient id="w169" gradientUnits="userSpaceOnUse" x1="1230.8" y1="197.5" x2="1029.4" y2="112.9"><stop offset="0" stop-color="#fff"/><stop offset="0.077" stop-color="#b5ffd7"/><stop offset="0.161" stop-color="#72ffb4"/><stop offset="0.254" stop-color="#33ff92"/><stop offset="0.348" stop-color="#0f7"/><stop offset="0.639" stop-color="#00ff38"/><stop offset="1" stop-color="#00ff06"/></linearGradient>
<linearGradient id="w170" gradientUnits="userSpaceOnUse" x1="1230.8" y1="197.5" x2="1032.9" y2="109.4"><stop offset="0" stop-color="#fff"/><stop offset="0.077" stop-color="#b6ffd6"/><stop offset="0.161" stop-color="#74ffb2"/><stop offset="0.254" stop-color="#36ff90"/><stop offset="0.355" stop-color="#00ff71"/><stop offset="0.642" stop-color="#00ff32"/><stop offset="1" stop-color="#0f0"/></linearGradient>
<linearGradient id="w171" gradientUnits="userSpaceOnUse" x1="1230.8" y1="197.5" x2="1037.4" y2="106.5"><stop offset="0" stop-color="#fff"/><stop offset="0.08" stop-color="#b5ffd4"/><stop offset="0.167" stop-color="#72ffae"/><stop offset="0.264" stop-color="#34ff8a"/><stop offset="0.365" stop-color="#00ff6c"/><stop offset="0.515" stop-color="#00ff47"/><stop offset="0.686" stop-color="#00ff26"/><stop offset="0.95" stop-color="#0f0"/><stop offset="1" stop-color="#0f0"/></linearGradient>
<linearGradient id="w172" gradientUnits="userSpaceOnUse" x1="1230.8" y1="197.5" x2="1042.8" y2="104.2"><stop offset="0" stop-color="#fff"/><stop offset="0.08" stop-color="#b6ffd4"/><stop offset="0.171" stop-color="#73ffab"/><stop offset="0.268" stop-color="#37ff88"/><stop offset="0.375" stop-color="#01ff67"/><stop offset="0.538" stop-color="#00ff3f"/><stop offset="0.726" stop-color="#00ff1c"/><stop offset="0.916" stop-color="#0f0"/><stop offset="1" stop-color="#0f0"/></linearGradient>
<linearGradient id="w173" gradientUnits="userSpaceOnUse" x1="1230.8" y1="197.5" x2="1049.3" y2="102.6"><stop offset="0" stop-color="#fff"/><stop offset="0.084" stop-color="#b6ffd2"/><stop offset="0.177" stop-color="#73ffa8"/><stop offset="0.278" stop-color="#37ff83"/><stop offset="0.391" stop-color="#00ff61"/><stop offset="0.569" stop-color="#00ff36"/><stop offset="0.769" stop-color="#00ff12"/><stop offset="0.89" stop-color="#0f0"/><stop offset="1" stop-color="#0f0"/></linearGradient>
<linearGradient id="w174" gradientUnits="userSpaceOnUse" x1="1230.8" y1="197.5" x2="1056.6" y2="101.7"><stop offset="0" stop-color="#fff"/><stop offset="0.087" stop-color="#b6ffd0"/><stop offset="0.184" stop-color="#73ffa5"/><stop offset="0.291" stop-color="#37ff7e"/><stop offset="0.408" stop-color="#01ff5b"/><stop offset="0.595" stop-color="#00ff2f"/><stop offset="0.809" stop-color="#00ff0a"/><stop offset="0.873" stop-color="#0f0"/><stop offset="1" stop-color="#0f0"/></linearGradient>
<linearGradient id="w175" gradientUnits="userSpaceOnUse" x1="1230.8" y1="197.5" x2="1064.1" y2="101.3"><stop offset="0" stop-color="#fff"/><stop offset="0.094" stop-color="#b4ffcd"/><stop offset="0.194" stop-color="#72ffa1"/><stop offset="0.308" stop-color="#36ff79"/><stop offset="0.431" stop-color="#0f5"/><stop offset="0.629" stop-color="#00ff28"/><stop offset="0.856" stop-color="#00ff01"/><stop offset="1" stop-color="#0f0"/></linearGradient>
<linearGradient id="w176" gradientUnits="userSpaceOnUse" x1="1230.8" y1="197.5" x2="1071.6" y2="101.1"><stop offset="0" stop-color="#fff"/><stop offset="0.097" stop-color="#b5ffcc"/><stop offset="0.204" stop-color="#72ff9e"/><stop offset="0.321" stop-color="#36ff75"/><stop offset="0.452" stop-color="#01ff4f"/><stop offset="0.639" stop-color="#00ff25"/><stop offset="0.849" stop-color="#0f0"/><stop offset="1" stop-color="#0f0"/></linearGradient>
<linearGradient id="w177" gradientUnits="userSpaceOnUse" x1="1230.8" y1="197.5" x2="1078.8" y2="101.1"><stop offset="0" stop-color="#fff"/><stop offset="0.1" stop-color="#b5ffca"/><stop offset="0.214" stop-color="#72ff9a"/><stop offset="0.338" stop-color="#36ff70"/><stop offset="0.475" stop-color="#01ff49"/><stop offset="0.649" stop-color="#0f2"/><stop offset="0.843" stop-color="#0f0"/><stop offset="1" stop-color="#0f0"/></linearGradient>
<linearGradient id="w178" gradientUnits="userSpaceOnUse" x1="1230.8" y1="197.5" x2="1085.8" y2="101.2"><stop offset="0" stop-color="#fff"/><stop offset="0.107" stop-color="#b4ffc8"/><stop offset="0.224" stop-color="#72ff97"/><stop offset="0.355" stop-color="#37ff6b"/><stop offset="0.502" stop-color="#00ff43"/><stop offset="0.836" stop-color="#0f0"/><stop offset="1" stop-color="#0f0"/></linearGradient>
<linearGradient id="w179" gradientUnits="userSpaceOnUse" x1="1230.8" y1="197.5" x2="1092.5" y2="101.4"><stop offset="0" stop-color="#fff"/><stop offset="0.11" stop-color="#b5ffc7"/><stop offset="0.234" stop-color="#73ff94"/><stop offset="0.375" stop-color="#36ff65"/><stop offset="0.528" stop-color="#00ff3c"/><stop offset="0.833" stop-color="#0f0"/><stop offset="1" stop-color="#0f0"/></linearGradient>
<linearGradient id="w180" gradientUnits="userSpaceOnUse" x1="1230.8" y1="197.5" x2="1098.9" y2="101.7"><stop offset="0" stop-color="#fff"/><stop offset="0.117" stop-color="#b4ffc4"/><stop offset="0.247" stop-color="#72ff8f"/><stop offset="0.395" stop-color="#36ff60"/><stop offset="0.559" stop-color="#00ff36"/><stop offset="0.829" stop-color="#0f0"/><stop offset="1" stop-color="#0f0"/></linearGradient>
<linearGradient id="w181" gradientUnits="userSpaceOnUse" x1="1230.8" y1="197.5" x2="1105" y2="102"><stop offset="0" stop-color="#fff"/><stop offset="0.124" stop-color="#b4ffc2"/><stop offset="0.261" stop-color="#71ff8b"/><stop offset="0.415" stop-color="#36ff5b"/><stop offset="0.589" stop-color="#00ff2f"/><stop offset="0.829" stop-color="#0f0"/><stop offset="1" stop-color="#0f0"/></linearGradient>
<linearGradient id="w182" gradientUnits="userSpaceOnUse" x1="1230.8" y1="197.5" x2="1110.8" y2="102.4"><stop offset="0" stop-color="#fff"/><stop offset="0.13" stop-color="#b3ffbf"/><stop offset="0.274" stop-color="#71ff87"/><stop offset="0.438" stop-color="#35ff55"/><stop offset="0.619" stop-color="#01ff29"/><stop offset="0.826" stop-color="#0f0"/><stop offset="1" stop-color="#0f0"/></linearGradient>
<linearGradient id="w183" gradientUnits="userSpaceOnUse" x1="1230.8" y1="197.5" x2="1116.3" y2="102.8"><stop offset="0" stop-color="#fff"/><stop offset="0.127" stop-color="#b8ffc1"/><stop offset="0.271" stop-color="#78ff89"/><stop offset="0.431" stop-color="#3eff57"/><stop offset="0.612" stop-color="#0bff2a"/><stop offset="0.656" stop-color="#00ff21"/><stop offset="0.826" stop-color="#0f0"/><stop offset="1" stop-color="#0f0"/></linearGradient>
<linearGradient id="w184" gradientUnits="userSpaceOnUse" x1="1230.8" y1="197.5" x2="1121.5" y2="103.2"><stop offset="0" stop-color="#fff"/><stop offset="0.124" stop-color="#bcffc3"/><stop offset="0.264" stop-color="#7fff8c"/><stop offset="0.418" stop-color="#49ff5c"/><stop offset="0.592" stop-color="#18ff2f"/><stop offset="0.692" stop-color="#00ff19"/><stop offset="0.826" stop-color="#0f0"/><stop offset="1" stop-color="#0f0"/></linearGradient>
<linearGradient id="w185" gradientUnits="userSpaceOnUse" x1="1230.8" y1="197.5" x2="1126.5" y2="103.6"><stop offset="0" stop-color="#fff"/><stop offset="0.12" stop-color="#c1ffc5"/><stop offset="0.254" stop-color="#88ff90"/><stop offset="0.405" stop-color="#54ff60"/><stop offset="0.569" stop-color="#26ff35"/><stop offset="0.729" stop-color="#00ff12"/><stop offset="0.826" stop-color="#0f0"/><stop offset="1" stop-color="#0f0"/></linearGradient>
<linearGradient id="w186" gradientUnits="userSpaceOnUse" x1="1230.8" y1="197.5" x2="1131.3" y2="104"><stop offset="0" stop-color="#fff"/><stop offset="0.117" stop-color="#c5ffc7"/><stop offset="0.247" stop-color="#8fff93"/><stop offset="0.391" stop-color="#5eff65"/><stop offset="0.548" stop-color="#32ff3a"/><stop offset="0.769" stop-color="#00ff0a"/><stop offset="0.826" stop-color="#0f0"/><stop offset="1" stop-color="#0f0"/></linearGradient>
<linearGradient id="w187" gradientUnits="userSpaceOnUse" x1="1230.8" y1="197.5" x2="1135.8" y2="104.4"><stop offset="0" stop-color="#fff"/><stop offset="0.114" stop-color="#c8ffc9"/><stop offset="0.237" stop-color="#97ff98"/><stop offset="0.525" stop-color="#3fff41"/><stop offset="0.813" stop-color="#00ff02"/><stop offset="1" stop-color="#0f0"/></linearGradient>
<linearGradient id="w188" gradientUnits="userSpaceOnUse" x1="1230.8" y1="197.5" x2="1140.1" y2="104.8"><stop offset="0" stop-color="#fff"/><stop offset="0.114" stop-color="#cbffc9"/><stop offset="0.237" stop-color="#9bff98"/><stop offset="0.522" stop-color="#46ff42"/><stop offset="0.823" stop-color="#07ff00"/><stop offset="0.86" stop-color="#0f0"/><stop offset="1" stop-color="#0f0"/></linearGradient>
<linearGradient id="w189" gradientUnits="userSpaceOnUse" x1="1230.8" y1="197.5" x2="1144.2" y2="105.2"><stop offset="0" stop-color="#fff"/><stop offset="0.114" stop-color="#cdffca"/><stop offset="0.241" stop-color="#9dff98"/><stop offset="0.525" stop-color="#4cff42"/><stop offset="0.826" stop-color="#0eff00"/><stop offset="0.906" stop-color="#0f0"/><stop offset="1" stop-color="#0f0"/></linearGradient>
<linearGradient id="w190" gradientUnits="userSpaceOnUse" x1="1230.8" y1="197.5" x2="1148.1" y2="105.6"><stop offset="0" stop-color="#fff"/><stop offset="0.114" stop-color="#cfffca"/><stop offset="0.241" stop-color="#a1ff98"/><stop offset="0.528" stop-color="#51ff41"/><stop offset="0.826" stop-color="#16ff00"/><stop offset="0.96" stop-color="#0f0"/><stop offset="1" stop-color="#0f0"/></linearGradient>
<linearGradient id="w191" gradientUnits="userSpaceOnUse" x1="1230.8" y1="197.5" x2="1151.8" y2="106"><stop offset="0" stop-color="#fff"/><stop offset="0.117" stop-color="#cfffc9"/><stop offset="0.244" stop-color="#a4ff98"/><stop offset="0.535" stop-color="#56ff40"/><stop offset="0.826" stop-color="#1dff00"/><stop offset="1" stop-color="#02ff00"/></linearGradient>
<linearGradient id="w192" gradientUnits="userSpaceOnUse" x1="1230.8" y1="197.5" x2="1155.4" y2="106.4"><stop offset="0" stop-color="#fff"/><stop offset="0.117" stop-color="#d1ffca"/><stop offset="0.247" stop-color="#a6ff97"/><stop offset="0.538" stop-color="#5bff40"/><stop offset="0.826" stop-color="#25ff00"/><stop offset="1" stop-color="#0aff00"/></linearGradient>
<linearGradient id="w193" gradientUnits="userSpaceOnUse" x1="1230.8" y1="197.5" x2="1158.8" y2="106.7"><stop offset="0" stop-color="#fff"/><stop offset="0.117" stop-color="#d3ffca"/><stop offset="0.247" stop-color="#a9ff98"/><stop offset="0.542" stop-color="#60ff3f"/><stop offset="0.826" stop-color="#2cff00"/><stop offset="1" stop-color="#12ff00"/></linearGradient>
<linearGradient id="w194" gradientUnits="userSpaceOnUse" x1="1230.8" y1="197.5" x2="1162.2" y2="107.1"><stop offset="0" stop-color="#fff"/><stop offset="0.12" stop-color="#d4ffc9"/><stop offset="0.251" stop-color="#acff97"/><stop offset="0.545" stop-color="#65ff3f"/><stop offset="0.826" stop-color="#3f0"/><stop offset="1" stop-color="#1aff00"/></linearGradient>
<linearGradient id="w195" gradientUnits="userSpaceOnUse" x1="1230.8" y1="197.5" x2="1165.3" y2="107.4"><stop offset="0" stop-color="#fff"/><stop offset="0.12" stop-color="#d5ffc9"/><stop offset="0.251" stop-color="#afff98"/><stop offset="0.548" stop-color="#6aff3e"/><stop offset="0.826" stop-color="#3aff00"/><stop offset="1" stop-color="#21ff00"/></linearGradient>
<linearGradient id="w196" gradientUnits="userSpaceOnUse" x1="1230.8" y1="197.5" x2="1168.4" y2="107.7"><stop offset="0" stop-color="#fff"/><stop offset="0.124" stop-color="#d6ffc8"/><stop offset="0.254" stop-color="#b1ff97"/><stop offset="0.552" stop-color="#6fff3e"/><stop offset="0.826" stop-color="#41ff00"/><stop offset="1" stop-color="#28ff00"/></linearGradient>
<linearGradient id="w197" gradientUnits="userSpaceOnUse" x1="1230.8" y1="197.5" x2="1171.4" y2="108.1"><stop offset="0" stop-color="#fff"/><stop offset="0.124" stop-color="#d8ffc9"/><stop offset="0.258" stop-color="#b3ff96"/><stop offset="0.559" stop-color="#73ff3d"/><stop offset="0.826" stop-color="#47ff00"/><stop offset="1" stop-color="#30ff00"/></linearGradient>
<linearGradient id="w198" gradientUnits="userSpaceOnUse" x1="1230.8" y1="197.5" x2="1174.2" y2="108.4"><stop offset="0" stop-color="#fff"/><stop offset="0.124" stop-color="#d9ffc9"/><stop offset="0.261" stop-color="#b6ff96"/><stop offset="0.562" stop-color="#77ff3c"/><stop offset="0.829" stop-color="#4dff00"/><stop offset="1" stop-color="#37ff00"/></linearGradient>
<linearGradient id="w199" gradientUnits="userSpaceOnUse" x1="1230.8" y1="197.5" x2="1177" y2="108.7"><stop offset="0" stop-color="#fff"/><stop offset="0.261" stop-color="#b9ff96"/><stop offset="0.565" stop-color="#7cff3c"/><stop offset="0.829" stop-color="#54ff00"/><stop offset="1" stop-color="#3eff00"/></linearGradient>
<linearGradient id="w200" gradientUnits="userSpaceOnUse" x1="1230.8" y1="197.5" x2="1179.7" y2="108.9"><stop offset="0" stop-color="#fff"/><stop offset="0.264" stop-color="#bbff95"/><stop offset="0.569" stop-color="#80ff3b"/><stop offset="0.829" stop-color="#5aff00"/><stop offset="1" stop-color="#45ff00"/></linearGradient>
<linearGradient id="w201" gradientUnits="userSpaceOnUse" x1="1230.8" y1="197.5" x2="1182.3" y2="109.2"><stop offset="0" stop-color="#fff"/><stop offset="0.264" stop-color="#bdff96"/><stop offset="0.572" stop-color="#85ff3b"/><stop offset="0.829" stop-color="#60ff00"/><stop offset="1" stop-color="#4cff00"/></linearGradient>
<linearGradient id="w202" gradientUnits="userSpaceOnUse" x1="1230.8" y1="197.5" x2="1184.8" y2="109.5"><stop offset="0" stop-color="#fff"/><stop offset="0.268" stop-color="#c0ff95"/><stop offset="0.575" stop-color="#89ff3a"/><stop offset="0.829" stop-color="#6f0"/><stop offset="1" stop-color="#52ff00"/></linearGradient>
<linearGradient id="w203" gradientUnits="userSpaceOnUse" x1="1230.8" y1="197.5" x2="1187.2" y2="109.8"><stop offset="0" stop-color="#fff"/><stop offset="0.268" stop-color="#c2ff96"/><stop offset="0.579" stop-color="#8dff3a"/><stop offset="0.829" stop-color="#6cff00"/><stop offset="1" stop-color="#59ff00"/></linearGradient>
<linearGradient id="w204" gradientUnits="userSpaceOnUse" x1="1230.8" y1="197.5" x2="1189.6" y2="110"><stop offset="0" stop-color="#fff"/><stop offset="0.271" stop-color="#c4ff95"/><stop offset="0.585" stop-color="#91ff39"/><stop offset="0.829" stop-color="#72ff00"/><stop offset="1" stop-color="#5fff00"/></linearGradient>
<linearGradient id="w205" gradientUnits="userSpaceOnUse" x1="1230.8" y1="197.5" x2="1192" y2="110.3"><stop offset="0" stop-color="#fff"/><stop offset="0.274" stop-color="#c6ff94"/><stop offset="0.589" stop-color="#95ff38"/><stop offset="0.829" stop-color="#78ff00"/><stop offset="1" stop-color="#6f0"/></linearGradient>
<linearGradient id="w206" gradientUnits="userSpaceOnUse" x1="1230.8" y1="197.5" x2="1194.2" y2="110.5"><stop offset="0" stop-color="#fff"/><stop offset="0.274" stop-color="#c9ff95"/><stop offset="0.592" stop-color="#9aff38"/><stop offset="0.833" stop-color="#7dff00"/><stop offset="1" stop-color="#6cff00"/></linearGradient>
<linearGradient id="w207" gradientUnits="userSpaceOnUse" x1="1230.8" y1="197.5" x2="1196.5" y2="110.8"><stop offset="0" stop-color="#fff"/><stop offset="0.278" stop-color="#cbff94"/><stop offset="0.595" stop-color="#9eff37"/><stop offset="0.833" stop-color="#83ff00"/><stop offset="1" stop-color="#73ff00"/></linearGradient>
<linearGradient id="w208" gradientUnits="userSpaceOnUse" x1="1230.8" y1="197.5" x2="1198.6" y2="111"><stop offset="0" stop-color="#fff"/><stop offset="0.278" stop-color="#ceff94"/><stop offset="0.599" stop-color="#a2ff37"/><stop offset="0.833" stop-color="#89ff00"/><stop offset="1" stop-color="#79ff00"/></linearGradient>
<linearGradient id="w209" gradientUnits="userSpaceOnUse" x1="1230.8" y1="197.5" x2="1200.8" y2="111.3"><stop offset="0" stop-color="#fff"/><stop offset="0.281" stop-color="#d0ff94"/><stop offset="0.602" stop-color="#a6ff36"/><stop offset="0.833" stop-color="#8eff00"/><stop offset="1" stop-color="#7fff00"/></linearGradient>
<linearGradient id="w210" gradientUnits="userSpaceOnUse" x1="1230.8" y1="197.5" x2="1202.8" y2="111.5"><stop offset="0" stop-color="#fff"/><stop offset="0.284" stop-color="#d2ff93"/><stop offset="0.609" stop-color="#aaff35"/><stop offset="0.833" stop-color="#94ff00"/><stop offset="1" stop-color="#86ff00"/></linearGradient>
<linearGradient id="w211" gradientUnits="userSpaceOnUse" x1="1230.8" y1="197.5" x2="1204.9" y2="111.7"><stop offset="0" stop-color="#fff"/><stop offset="0.288" stop-color="#d4ff92"/><stop offset="0.612" stop-color="#aeff34"/><stop offset="0.833" stop-color="#9f0"/><stop offset="1" stop-color="#8cff00"/></linearGradient>
<linearGradient id="w212" gradientUnits="userSpaceOnUse" x1="1230.8" y1="197.5" x2="1206.9" y2="112"><stop offset="0" stop-color="#fff"/><stop offset="0.288" stop-color="#d6ff93"/><stop offset="0.615" stop-color="#b2ff34"/><stop offset="0.833" stop-color="#9fff00"/><stop offset="1" stop-color="#92ff00"/></linearGradient>
<linearGradient id="w213" gradientUnits="userSpaceOnUse" x1="1230.8" y1="197.5" x2="1208.9" y2="112.2"><stop offset="0" stop-color="#fff"/><stop offset="0.291" stop-color="#d8ff92"/><stop offset="0.622" stop-color="#b6ff32"/><stop offset="0.833" stop-color="#a4ff00"/><stop offset="1" stop-color="#98ff00"/></linearGradient>
<linearGradient id="w214" gradientUnits="userSpaceOnUse" x1="1230.8" y1="197.5" x2="1210.8" y2="112.4"><stop offset="0" stop-color="#fff"/><stop offset="0.294" stop-color="#daff91"/><stop offset="0.625" stop-color="#baff32"/><stop offset="0.833" stop-color="#af0"/><stop offset="1" stop-color="#9eff00"/></linearGradient>
<linearGradient id="w215" gradientUnits="userSpaceOnUse" x1="1230.8" y1="197.5" x2="1212.7" y2="112.6"><stop offset="0" stop-color="#fff"/><stop offset="0.294" stop-color="#ddff92"/><stop offset="0.629" stop-color="#bfff31"/><stop offset="0.836" stop-color="#afff00"/><stop offset="1" stop-color="#a4ff00"/></linearGradient>
<linearGradient id="w216" gradientUnits="userSpaceOnUse" x1="1230.8" y1="197.5" x2="1214.6" y2="112.8"><stop offset="0" stop-color="#fff"/><stop offset="0.298" stop-color="#dfff91"/><stop offset="0.635" stop-color="#c2ff30"/><stop offset="0.836" stop-color="#b5ff00"/><stop offset="1" stop-color="#af0"/></linearGradient>
<linearGradient id="w217" gradientUnits="userSpaceOnUse" x1="1230.8" y1="197.5" x2="1216.5" y2="113"><stop offset="0" stop-color="#fff"/><stop offset="0.301" stop-color="#e1ff90"/><stop offset="0.639" stop-color="#c7ff2f"/><stop offset="0.836" stop-color="#baff00"/><stop offset="1" stop-color="#b1ff00"/></linearGradient>
<linearGradient id="w218" gradientUnits="userSpaceOnUse" x1="1230.8" y1="197.5" x2="1218.3" y2="113.2"><stop offset="0" stop-color="#fff"/><stop offset="0.301" stop-color="#e3ff91"/><stop offset="0.642" stop-color="#cbff2f"/><stop offset="0.836" stop-color="#bfff00"/><stop offset="1" stop-color="#b7ff00"/></linearGradient>
<linearGradient id="w219" gradientUnits="userSpaceOnUse" x1="1230.8" y1="197.5" x2="1220.2" y2="113.4"><stop offset="0" stop-color="#fff"/><stop offset="0.304" stop-color="#e6ff90"/><stop offset="0.649" stop-color="#cfff2d"/><stop offset="0.836" stop-color="#c5ff00"/><stop offset="1" stop-color="#bdff00"/></linearGradient>
<linearGradient id="w220" gradientUnits="userSpaceOnUse" x1="1230.8" y1="197.5" x2="1222" y2="113.6"><stop offset="0" stop-color="#fff"/><stop offset="0.308" stop-color="#e8ff8f"/><stop offset="0.652" stop-color="#d3ff2c"/><stop offset="0.836" stop-color="#caff00"/><stop offset="1" stop-color="#c3ff00"/></linearGradient>
<linearGradient id="w221" gradientUnits="userSpaceOnUse" x1="1230.8" y1="197.5" x2="1223.8" y2="113.8"><stop offset="0" stop-color="#fff"/><stop offset="0.311" stop-color="#eaff8f"/><stop offset="0.659" stop-color="#d8ff2b"/><stop offset="0.836" stop-color="#d0ff00"/><stop offset="1" stop-color="#c9ff00"/></linearGradient>
<linearGradient id="w222" gradientUnits="userSpaceOnUse" x1="1230.8" y1="197.5" x2="1225.5" y2="114"><stop offset="0" stop-color="#fff"/><stop offset="0.314" stop-color="#ecff8e"/><stop offset="0.666" stop-color="#dcff2a"/><stop offset="0.836" stop-color="#d5ff00"/><stop offset="1" stop-color="#cfff00"/></linearGradient>
<linearGradient id="w223" gradientUnits="userSpaceOnUse" x1="1230.8" y1="197.5" x2="1227.3" y2="114.2"><stop offset="0" stop-color="#fff"/><stop offset="0.314" stop-color="#efff8e"/><stop offset="0.669" stop-color="#e0ff29"/><stop offset="0.836" stop-color="#dbff00"/><stop offset="1" stop-color="#d5ff00"/></linearGradient>
<linearGradient id="w224" gradientUnits="userSpaceOnUse" x1="1230.8" y1="197.5" x2="1229.1" y2="114.4"><stop offset="0" stop-color="#fff"/><stop offset="0.318" stop-color="#f1ff8e"/><stop offset="0.676" stop-color="#e5ff28"/><stop offset="0.839" stop-color="#e0ff00"/><stop offset="1" stop-color="#dcff00"/></linearGradient>
<linearGradient id="w225" gradientUnits="userSpaceOnUse" x1="1230.8" y1="197.5" x2="1230.8" y2="114.6"><stop offset="0" stop-color="#fff"/><stop offset="0.321" stop-color="#f4ff8d"/><stop offset="0.682" stop-color="#e9ff26"/><stop offset="0.839" stop-color="#e6ff00"/><stop offset="1" stop-color="#e2ff00"/></linearGradient>
<linearGradient id="w226" gradientUnits="userSpaceOnUse" x1="1230.8" y1="197.5" x2="1232.5" y2="114.8"><stop offset="0" stop-color="#fff"/><stop offset="0.324" stop-color="#f6ff8c"/><stop offset="0.689" stop-color="#eeff25"/><stop offset="0.839" stop-color="#ebff00"/><stop offset="1" stop-color="#e8ff00"/></linearGradient>
<linearGradient id="w227" gradientUnits="userSpaceOnUse" x1="1230.8" y1="197.5" x2="1234.2" y2="115"><stop offset="0" stop-color="#fff"/><stop offset="0.328" stop-color="#f9ff8c"/><stop offset="0.696" stop-color="#f3ff23"/><stop offset="0.839" stop-color="#f1ff00"/><stop offset="1" stop-color="#efff00"/></linearGradient>
<linearGradient id="w228" gradientUnits="userSpaceOnUse" x1="1230.8" y1="197.5" x2="1236" y2="115.2"><stop offset="0" stop-color="#fff"/><stop offset="0.331" stop-color="#fbff8b"/><stop offset="0.702" stop-color="#f8ff22"/><stop offset="0.839" stop-color="#f6ff00"/><stop offset="1" stop-color="#f5ff00"/></linearGradient>
<linearGradient id="w229" gradientUnits="userSpaceOnUse" x1="1230.8" y1="197.5" x2="1237.7" y2="115.4"><stop offset="0" stop-color="#fff"/><stop offset="0.334" stop-color="#feff8a"/><stop offset="0.709" stop-color="#fdff20"/><stop offset="0.839" stop-color="#fcff00"/><stop offset="1" stop-color="#fcff00"/></linearGradient>
<linearGradient id="w230" gradientUnits="userSpaceOnUse" x1="1230.8" y1="197.5" x2="1239.4" y2="115.6"><stop offset="0" stop-color="#fff"/><stop offset="0.331" stop-color="#fffe8b"/><stop offset="0.699" stop-color="#fffc23"/><stop offset="0.839" stop-color="#fffc00"/><stop offset="1" stop-color="#fffc00"/></linearGradient>
<linearGradient id="w231" gradientUnits="userSpaceOnUse" x1="1230.8" y1="197.5" x2="1241.1" y2="115.8"><stop offset="0" stop-color="#fff"/><stop offset="0.321" stop-color="#fffb8d"/><stop offset="0.679" stop-color="#fff827"/><stop offset="0.839" stop-color="#fff600"/><stop offset="1" stop-color="#fff500"/></linearGradient>
<linearGradient id="w232" gradientUnits="userSpaceOnUse" x1="1230.8" y1="197.5" x2="1242.8" y2="116"><stop offset="0" stop-color="#fff"/><stop offset="0.311" stop-color="#fff98f"/><stop offset="0.659" stop-color="#fff32c"/><stop offset="0.839" stop-color="#fff100"/><stop offset="1" stop-color="#ffef00"/></linearGradient>
<linearGradient id="w233" gradientUnits="userSpaceOnUse" x1="1230.8" y1="197.5" x2="1244.5" y2="116.2"><stop offset="0" stop-color="#fff"/><stop offset="0.301" stop-color="#fff792"/><stop offset="0.642" stop-color="#ffef30"/><stop offset="0.839" stop-color="#ffec00"/><stop offset="1" stop-color="#ffe900"/></linearGradient>
<linearGradient id="w234" gradientUnits="userSpaceOnUse" x1="1230.8" y1="197.5" x2="1246.3" y2="116.4"><stop offset="0" stop-color="#fff"/><stop offset="0.294" stop-color="#fff593"/><stop offset="0.625" stop-color="#ffec33"/><stop offset="0.843" stop-color="#ffe700"/><stop offset="1" stop-color="#ffe400"/></linearGradient>
<linearGradient id="w235" gradientUnits="userSpaceOnUse" x1="1230.8" y1="197.5" x2="1248" y2="116.6"><stop offset="0" stop-color="#fff"/><stop offset="0.288" stop-color="#fff394"/><stop offset="0.612" stop-color="#ffe836"/><stop offset="0.843" stop-color="#ffe200"/><stop offset="1" stop-color="#ffde00"/></linearGradient>
<linearGradient id="w236" gradientUnits="userSpaceOnUse" x1="1230.8" y1="197.5" x2="1249.7" y2="116.8"><stop offset="0" stop-color="#fff"/><stop offset="0.281" stop-color="#fff195"/><stop offset="0.602" stop-color="#ffe438"/><stop offset="0.843" stop-color="#fd0"/><stop offset="1" stop-color="#ffd900"/></linearGradient>
<linearGradient id="w237" gradientUnits="userSpaceOnUse" x1="1230.8" y1="197.5" x2="1251.5" y2="117"><stop offset="0" stop-color="#fff"/><stop offset="0.274" stop-color="#ffef97"/><stop offset="0.589" stop-color="#ffe13b"/><stop offset="0.843" stop-color="#ffd800"/><stop offset="1" stop-color="#ffd300"/></linearGradient>
<linearGradient id="w238" gradientUnits="userSpaceOnUse" x1="1230.8" y1="197.5" x2="1253.2" y2="117.2"><stop offset="0" stop-color="#fff"/><stop offset="0.271" stop-color="#ffed97"/><stop offset="0.579" stop-color="#ffde3d"/><stop offset="0.843" stop-color="#ffd400"/><stop offset="1" stop-color="#ffce00"/></linearGradient>
<linearGradient id="w239" gradientUnits="userSpaceOnUse" x1="1230.8" y1="197.5" x2="1255" y2="117.4"><stop offset="0" stop-color="#fff"/><stop offset="0.264" stop-color="#ffec98"/><stop offset="0.569" stop-color="#ffdb3f"/><stop offset="0.843" stop-color="#ffcf00"/><stop offset="1" stop-color="#ffca00"/></linearGradient>
<linearGradient id="w240" gradientUnits="userSpaceOnUse" x1="1230.8" y1="197.5" x2="1256.8" y2="117.6"><stop offset="0" stop-color="#fff"/><stop offset="0.258" stop-color="#ffea99"/><stop offset="0.559" stop-color="#ffd841"/><stop offset="0.843" stop-color="#ffcb00"/><stop offset="1" stop-color="#ffc500"/></linearGradient>
<linearGradient id="w241" gradientUnits="userSpaceOnUse" x1="1230.8" y1="197.5" x2="1258.5" y2="117.8"><stop offset="0" stop-color="#fff"/><stop offset="0.254" stop-color="#ffe99a"/><stop offset="0.552" stop-color="#ffd542"/><stop offset="0.843" stop-color="#ffc700"/><stop offset="1" stop-color="#ffc000"/></linearGradient>
<linearGradient id="w242" gradientUnits="userSpaceOnUse" x1="1230.8" y1="197.5" x2="1260.4" y2="118"><stop offset="0" stop-color="#fff"/><stop offset="0.251" stop-color="#ffe79a"/><stop offset="0.545" stop-color="#ffd243"/><stop offset="0.843" stop-color="#ffc200"/><stop offset="1" stop-color="#ffbc00"/></linearGradient>
<linearGradient id="w243" gradientUnits="userSpaceOnUse" x1="1230.8" y1="197.5" x2="1262.2" y2="118.2"><stop offset="0" stop-color="#fff"/><stop offset="0.247" stop-color="#ffe59a"/><stop offset="0.535" stop-color="#ffd045"/><stop offset="0.843" stop-color="#ffbe00"/><stop offset="1" stop-color="#ffb700"/></linearGradient>
<linearGradient id="w244" gradientUnits="userSpaceOnUse" x1="1230.8" y1="197.5" x2="1264" y2="118.4"><stop offset="0" stop-color="#fff"/><stop offset="0.117" stop-color="#fff1cb"/><stop offset="0.244" stop-color="#ffe49b"/><stop offset="0.528" stop-color="#ffcd46"/><stop offset="0.846" stop-color="#ffba00"/><stop offset="1" stop-color="#ffb300"/></linearGradient>
<linearGradient id="w245" gradientUnits="userSpaceOnUse" x1="1230.8" y1="197.5" x2="1265.9" y2="118.6"><stop offset="0" stop-color="#fff"/><stop offset="0.117" stop-color="#fff0ca"/><stop offset="0.241" stop-color="#ffe29b"/><stop offset="0.522" stop-color="#ffca47"/><stop offset="0.846" stop-color="#ffb600"/><stop offset="1" stop-color="#ffae00"/></linearGradient>
<linearGradient id="w246" gradientUnits="userSpaceOnUse" x1="1230.8" y1="197.5" x2="1267.8" y2="118.9"><stop offset="0" stop-color="#fff"/><stop offset="0.114" stop-color="#ffefcb"/><stop offset="0.237" stop-color="#ffe19b"/><stop offset="0.515" stop-color="#ffc848"/><stop offset="0.846" stop-color="#ffb200"/><stop offset="1" stop-color="#fa0"/></linearGradient>
<linearGradient id="w247" gradientUnits="userSpaceOnUse" x1="1230.8" y1="197.5" x2="1269.7" y2="119.1"><stop offset="0" stop-color="#fff"/><stop offset="0.114" stop-color="#ffeeca"/><stop offset="0.234" stop-color="#ffe09c"/><stop offset="0.512" stop-color="#ffc548"/><stop offset="0.846" stop-color="#ffae00"/><stop offset="1" stop-color="#ffa600"/></linearGradient>
<linearGradient id="w248" gradientUnits="userSpaceOnUse" x1="1230.8" y1="197.5" x2="1271.7" y2="119.3"><stop offset="0" stop-color="#fff"/><stop offset="0.11" stop-color="#ffeecb"/><stop offset="0.231" stop-color="#ffde9c"/><stop offset="0.505" stop-color="#ffc349"/><stop offset="0.846" stop-color="#ffab00"/><stop offset="1" stop-color="#ffa200"/></linearGradient>
<linearGradient id="w249" gradientUnits="userSpaceOnUse" x1="1230.8" y1="197.5" x2="1273.7" y2="119.5"><stop offset="0" stop-color="#fff"/><stop offset="0.107" stop-color="#ffedcc"/><stop offset="0.227" stop-color="#ffdd9c"/><stop offset="0.498" stop-color="#ffc04a"/><stop offset="0.846" stop-color="#ffa700"/><stop offset="1" stop-color="#ff9e00"/></linearGradient>
<linearGradient id="w250" gradientUnits="userSpaceOnUse" x1="1230.8" y1="197.5" x2="1275.7" y2="119.8"><stop offset="0" stop-color="#fff"/><stop offset="0.107" stop-color="#ffeccc"/><stop offset="0.224" stop-color="#ffdb9d"/><stop offset="0.495" stop-color="#ffbe4a"/><stop offset="0.846" stop-color="#ffa300"/><stop offset="1" stop-color="#ff9a00"/></linearGradient>
<linearGradient id="w251" gradientUnits="userSpaceOnUse" x1="1230.8" y1="197.5" x2="1277.7" y2="120"><stop offset="0" stop-color="#fff"/><stop offset="0.104" stop-color="#ffeccc"/><stop offset="0.221" stop-color="#ffda9d"/><stop offset="0.488" stop-color="#ffbb4b"/><stop offset="0.846" stop-color="#ffa000"/><stop offset="1" stop-color="#ff9600"/></linearGradient>
<linearGradient id="w252" gradientUnits="userSpaceOnUse" x1="1230.8" y1="197.5" x2="1279.8" y2="120.2"><stop offset="0" stop-color="#fff"/><stop offset="0.104" stop-color="#ffebcc"/><stop offset="0.217" stop-color="#ffd99d"/><stop offset="0.482" stop-color="#ffb94c"/><stop offset="0.656" stop-color="#ffaa24"/><stop offset="0.849" stop-color="#ff9c00"/><stop offset="1" stop-color="#ff9300"/></linearGradient>
<linearGradient id="w253" gradientUnits="userSpaceOnUse" x1="1230.8" y1="197.5" x2="1282" y2="120.5"><stop offset="0" stop-color="#fff"/><stop offset="0.104" stop-color="#ffeacb"/><stop offset="0.217" stop-color="#ffd79c"/><stop offset="0.478" stop-color="#ffb74c"/><stop offset="0.652" stop-color="#ffa724"/><stop offset="0.849" stop-color="#ff9800"/><stop offset="1" stop-color="#ff8f00"/></linearGradient>
<linearGradient id="w254" gradientUnits="userSpaceOnUse" x1="1230.8" y1="197.5" x2="1284.1" y2="120.7"><stop offset="0" stop-color="#fff"/><stop offset="0.1" stop-color="#ffeacc"/><stop offset="0.214" stop-color="#ffd69d"/><stop offset="0.475" stop-color="#ffb44c"/><stop offset="0.652" stop-color="#ffa324"/><stop offset="0.849" stop-color="#ff9500"/><stop offset="1" stop-color="#ff8b00"/></linearGradient>
<linearGradient id="w255" gradientUnits="userSpaceOnUse" x1="1230.8" y1="197.5" x2="1286.4" y2="121"><stop offset="0" stop-color="#fff"/><stop offset="0.1" stop-color="#ffe9cc"/><stop offset="0.211" stop-color="#ffd59d"/><stop offset="0.468" stop-color="#ffb24d"/><stop offset="0.649" stop-color="#ffa124"/><stop offset="0.849" stop-color="#ff9100"/><stop offset="1" stop-color="#f80"/></linearGradient>
<linearGradient id="w256" gradientUnits="userSpaceOnUse" x1="1230.8" y1="197.5" x2="1288.7" y2="121.2"><stop offset="0" stop-color="#fff"/><stop offset="0.097" stop-color="#ffe9cc"/><stop offset="0.207" stop-color="#ffd49e"/><stop offset="0.331" stop-color="#ffc173"/><stop offset="0.465" stop-color="#ffb04d"/><stop offset="0.645" stop-color="#ff9e24"/><stop offset="0.849" stop-color="#ff8e00"/><stop offset="1" stop-color="#ff8400"/></linearGradient>
<linearGradient id="w257" gradientUnits="userSpaceOnUse" x1="1230.8" y1="197.5" x2="1291" y2="121.5"><stop offset="0" stop-color="#fff"/><stop offset="0.097" stop-color="#ffe8cc"/><stop offset="0.207" stop-color="#ffd29d"/><stop offset="0.328" stop-color="#ffbf73"/><stop offset="0.462" stop-color="#ffad4d"/><stop offset="0.642" stop-color="#ff9b25"/><stop offset="0.849" stop-color="#ff8a00"/><stop offset="1" stop-color="#ff8000"/></linearGradient>
<linearGradient id="w258" gradientUnits="userSpaceOnUse" x1="1230.8" y1="197.5" x2="1293.4" y2="121.8"><stop offset="0" stop-color="#fff"/><stop offset="0.097" stop-color="#ffe7cb"/><stop offset="0.204" stop-color="#ffd19d"/><stop offset="0.324" stop-color="#ffbd73"/><stop offset="0.455" stop-color="#ffab4e"/><stop offset="0.639" stop-color="#ff9825"/><stop offset="0.849" stop-color="#ff8700"/><stop offset="1" stop-color="#ff7d00"/></linearGradient>
<linearGradient id="w259" gradientUnits="userSpaceOnUse" x1="1230.8" y1="197.5" x2="1295.9" y2="122.1"><stop offset="0" stop-color="#fff"/><stop offset="0.094" stop-color="#ffe6cc"/><stop offset="0.201" stop-color="#ffd09d"/><stop offset="0.318" stop-color="#ffbb74"/><stop offset="0.452" stop-color="#ffa94e"/><stop offset="0.639" stop-color="#ff9524"/><stop offset="0.853" stop-color="#ff8300"/><stop offset="1" stop-color="#ff7900"/></linearGradient>
<linearGradient id="w260" gradientUnits="userSpaceOnUse" x1="1230.8" y1="197.5" x2="1298.4" y2="122.4"><stop offset="0" stop-color="#fff"/><stop offset="0.094" stop-color="#ffe5cc"/><stop offset="0.201" stop-color="#ffce9c"/><stop offset="0.318" stop-color="#ffb973"/><stop offset="0.448" stop-color="#ffa74e"/><stop offset="0.635" stop-color="#ff9225"/><stop offset="0.853" stop-color="#ff8000"/><stop offset="1" stop-color="#ff7600"/></linearGradient>
<linearGradient id="w261" gradientUnits="userSpaceOnUse" x1="1230.8" y1="197.5" x2="1301.1" y2="122.7"><stop offset="0" stop-color="#fff"/><stop offset="0.094" stop-color="#ffe4cb"/><stop offset="0.197" stop-color="#ffcd9d"/><stop offset="0.311" stop-color="#ffb874"/><stop offset="0.441" stop-color="#ffa54f"/><stop offset="0.632" stop-color="#ff8f25"/><stop offset="0.853" stop-color="#ff7c00"/><stop offset="1" stop-color="#ff7200"/></linearGradient>
<linearGradient id="w262" gradientUnits="userSpaceOnUse" x1="1230.8" y1="197.5" x2="1303.8" y2="123"><stop offset="0" stop-color="#fff"/><stop offset="0.09" stop-color="#ffe4cc"/><stop offset="0.194" stop-color="#ffcb9d"/><stop offset="0.308" stop-color="#ffb674"/><stop offset="0.438" stop-color="#ffa24f"/><stop offset="0.629" stop-color="#ff8c25"/><stop offset="0.853" stop-color="#ff7900"/><stop offset="1" stop-color="#ff6f00"/></linearGradient>
<linearGradient id="w263" gradientUnits="userSpaceOnUse" x1="1230.8" y1="197.5" x2="1306.6" y2="123.3"><stop offset="0" stop-color="#fff"/><stop offset="0.09" stop-color="#ffe3cb"/><stop offset="0.194" stop-color="#ffca9c"/><stop offset="0.308" stop-color="#ffb373"/><stop offset="0.435" stop-color="#ffa04f"/><stop offset="0.625" stop-color="#ff8925"/><stop offset="0.846" stop-color="#ff7601"/><stop offset="1" stop-color="#ff6b00"/></linearGradient>
<linearGradient id="w264" gradientUnits="userSpaceOnUse" x1="1230.8" y1="197.5" x2="1309.5" y2="123.6"><stop offset="0" stop-color="#fff"/><stop offset="0.09" stop-color="#ffe2cb"/><stop offset="0.191" stop-color="#ffc89d"/><stop offset="0.304" stop-color="#ffb273"/><stop offset="0.431" stop-color="#ff9d4f"/><stop offset="0.619" stop-color="#ff8726"/><stop offset="0.839" stop-color="#ff7302"/><stop offset="1" stop-color="#ff6800"/></linearGradient>
<linearGradient id="w265" gradientUnits="userSpaceOnUse" x1="1230.8" y1="197.5" x2="1312.5" y2="124"><stop offset="0" stop-color="#fff"/><stop offset="0.087" stop-color="#ffe2cc"/><stop offset="0.187" stop-color="#ffc79d"/><stop offset="0.301" stop-color="#ffb073"/><stop offset="0.428" stop-color="#ff9b4f"/><stop offset="0.612" stop-color="#ff8427"/><stop offset="0.829" stop-color="#ff7004"/><stop offset="1" stop-color="#ff6400"/></linearGradient>
<linearGradient id="w266" gradientUnits="userSpaceOnUse" x1="1230.8" y1="197.5" x2="1315.6" y2="124.3"><stop offset="0" stop-color="#fff"/><stop offset="0.087" stop-color="#ffe1cb"/><stop offset="0.184" stop-color="#ffc69d"/><stop offset="0.294" stop-color="#ffae74"/><stop offset="0.421" stop-color="#ff9950"/><stop offset="0.605" stop-color="#ff8227"/><stop offset="0.819" stop-color="#ff6e05"/><stop offset="1" stop-color="#ff6100"/></linearGradient>
<linearGradient id="w267" gradientUnits="userSpaceOnUse" x1="1230.8" y1="197.5" x2="1318.8" y2="124.7"><stop offset="0" stop-color="#fff"/><stop offset="0.087" stop-color="#ffe0ca"/><stop offset="0.184" stop-color="#ffc49c"/><stop offset="0.294" stop-color="#ffac73"/><stop offset="0.418" stop-color="#ff9750"/><stop offset="0.599" stop-color="#ff7f28"/><stop offset="0.809" stop-color="#ff6b06"/><stop offset="0.86" stop-color="#ff6700"/><stop offset="1" stop-color="#ff5d00"/></linearGradient>
<linearGradient id="w268" gradientUnits="userSpaceOnUse" x1="1230.8" y1="197.5" x2="1322.2" y2="125.1"><stop offset="0" stop-color="#fff"/><stop offset="0.084" stop-color="#ffdfcb"/><stop offset="0.181" stop-color="#ffc39d"/><stop offset="0.291" stop-color="#ffaa73"/><stop offset="0.415" stop-color="#ff9450"/><stop offset="0.592" stop-color="#ff7d29"/><stop offset="0.803" stop-color="#ff6807"/><stop offset="0.86" stop-color="#ff6400"/><stop offset="1" stop-color="#ff5a00"/></linearGradient>
<linearGradient id="w269" gradientUnits="userSpaceOnUse" x1="1230.8" y1="197.5" x2="1325.7" y2="125.5"><stop offset="0" stop-color="#fff"/><stop offset="0.084" stop-color="#ffdeca"/><stop offset="0.181" stop-color="#ffc19b"/><stop offset="0.288" stop-color="#ffa873"/><stop offset="0.411" stop-color="#ff924f"/><stop offset="0.585" stop-color="#ff7a2a"/><stop offset="0.793" stop-color="#ff6609"/><stop offset="0.86" stop-color="#ff6000"/><stop offset="1" stop-color="#ff5600"/></linearGradient>
<linearGradient id="w270" gradientUnits="userSpaceOnUse" x1="1230.8" y1="197.5" x2="1329.3" y2="125.9"><stop offset="0" stop-color="#fff"/><stop offset="0.084" stop-color="#ffddca"/><stop offset="0.177" stop-color="#ffc09c"/><stop offset="0.284" stop-color="#ffa673"/><stop offset="0.408" stop-color="#ff8f4f"/><stop offset="0.582" stop-color="#ff772a"/><stop offset="0.786" stop-color="#ff6309"/><stop offset="0.86" stop-color="#ff5d00"/><stop offset="1" stop-color="#ff5300"/></linearGradient>
<linearGradient id="w271" gradientUnits="userSpaceOnUse" x1="1230.8" y1="197.5" x2="1333.2" y2="126.3"><stop offset="0" stop-color="#fff"/><stop offset="0.08" stop-color="#ffddcb"/><stop offset="0.174" stop-color="#ffbf9c"/><stop offset="0.281" stop-color="#ffa473"/><stop offset="0.405" stop-color="#ff8d4f"/><stop offset="0.575" stop-color="#ff742a"/><stop offset="0.779" stop-color="#ff600a"/><stop offset="0.863" stop-color="#ff5900"/><stop offset="1" stop-color="#ff4f00"/></linearGradient>
<linearGradient id="w272" gradientUnits="userSpaceOnUse" x1="1230.8" y1="197.5" x2="1337.2" y2="126.8"><stop offset="0" stop-color="#fff"/><stop offset="0.08" stop-color="#ffdcca"/><stop offset="0.171" stop-color="#ffbd9c"/><stop offset="0.278" stop-color="#ffa273"/><stop offset="0.398" stop-color="#ff8a50"/><stop offset="0.569" stop-color="#ff722b"/><stop offset="0.769" stop-color="#ff5d0b"/><stop offset="0.863" stop-color="#f50"/><stop offset="1" stop-color="#ff4c00"/></linearGradient>
<linearGradient id="w273" gradientUnits="userSpaceOnUse" x1="1230.8" y1="197.5" x2="1341.4" y2="127.3"><stop offset="0" stop-color="#fff"/><stop offset="0.08" stop-color="#ffdac9"/><stop offset="0.171" stop-color="#ffbb9b"/><stop offset="0.274" stop-color="#ffa073"/><stop offset="0.395" stop-color="#ff884f"/><stop offset="0.562" stop-color="#ff6f2b"/><stop offset="0.759" stop-color="#ff5a0d"/><stop offset="0.863" stop-color="#ff5200"/><stop offset="1" stop-color="#ff4800"/></linearGradient>
<linearGradient id="w274" gradientUnits="userSpaceOnUse" x1="1230.8" y1="197.5" x2="1345.9" y2="127.8"><stop offset="0" stop-color="#fff"/><stop offset="0.077" stop-color="#ffdaca"/><stop offset="0.167" stop-color="#ffba9b"/><stop offset="0.271" stop-color="#ff9e73"/><stop offset="0.391" stop-color="#ff854f"/><stop offset="0.555" stop-color="#ff6d2c"/><stop offset="0.753" stop-color="#ff570d"/><stop offset="0.863" stop-color="#ff4e00"/><stop offset="1" stop-color="#ff4500"/></linearGradient>
<linearGradient id="w275" gradientUnits="userSpaceOnUse" x1="1230.8" y1="197.5" x2="1350.6" y2="128.3"><stop offset="0" stop-color="#fff"/><stop offset="0.077" stop-color="#ffd9c9"/><stop offset="0.167" stop-color="#ffb79a"/><stop offset="0.271" stop-color="#ff9b71"/><stop offset="0.388" stop-color="#ff824f"/><stop offset="0.552" stop-color="#ff692c"/><stop offset="0.746" stop-color="#ff540e"/><stop offset="0.866" stop-color="#ff4a00"/><stop offset="1" stop-color="#ff4100"/></linearGradient>
<linearGradient id="w276" gradientUnits="userSpaceOnUse" x1="1230.8" y1="197.5" x2="1355.6" y2="128.9"><stop offset="0" stop-color="#fff"/><stop offset="0.077" stop-color="#ffd7c8"/><stop offset="0.164" stop-color="#ffb69a"/><stop offset="0.268" stop-color="#ff9871"/><stop offset="0.385" stop-color="#ff804f"/><stop offset="0.545" stop-color="#ff672c"/><stop offset="0.739" stop-color="#ff510f"/><stop offset="0.866" stop-color="#ff4700"/><stop offset="1" stop-color="#ff3e00"/></linearGradient>
<linearGradient id="w277" gradientUnits="userSpaceOnUse" x1="1230.8" y1="197.5" x2="1360.9" y2="129.5"><stop offset="0" stop-color="#fff"/><stop offset="0.074" stop-color="#ffd7c9"/><stop offset="0.161" stop-color="#ffb59a"/><stop offset="0.261" stop-color="#ff9772"/><stop offset="0.378" stop-color="#ff7d4f"/><stop offset="0.538" stop-color="#ff642d"/><stop offset="0.729" stop-color="#ff4f10"/><stop offset="0.866" stop-color="#ff4300"/><stop offset="1" stop-color="#ff3a00"/></linearGradient>
<linearGradient id="w278" gradientUnits="userSpaceOnUse" x1="1230.8" y1="197.5" x2="1366.5" y2="130.1"><stop offset="0" stop-color="#fff"/><stop offset="0.074" stop-color="#ffd6c8"/><stop offset="0.157" stop-color="#ffb39a"/><stop offset="0.258" stop-color="#ff9471"/><stop offset="0.375" stop-color="#ff7a4f"/><stop offset="0.532" stop-color="#ff612d"/><stop offset="0.722" stop-color="#ff4b10"/><stop offset="0.87" stop-color="#ff3f00"/><stop offset="1" stop-color="#ff3600"/></linearGradient>
<linearGradient id="w279" gradientUnits="userSpaceOnUse" x1="1230.8" y1="197.5" x2="1372.5" y2="130.8"><stop offset="0" stop-color="#fff"/><stop offset="0.074" stop-color="#ffd4c7"/><stop offset="0.157" stop-color="#ffb099"/><stop offset="0.258" stop-color="#ff9170"/><stop offset="0.371" stop-color="#ff774e"/><stop offset="0.528" stop-color="#ff5e2d"/><stop offset="0.716" stop-color="#ff4811"/><stop offset="0.87" stop-color="#ff3b00"/><stop offset="1" stop-color="#ff3200"/></linearGradient>
<linearGradient id="w280" gradientUnits="userSpaceOnUse" x1="1230.8" y1="197.5" x2="1378.9" y2="131.6"><stop offset="0" stop-color="#fff"/><stop offset="0.07" stop-color="#ffd4c8"/><stop offset="0.154" stop-color="#ffaf99"/><stop offset="0.251" stop-color="#ff8f71"/><stop offset="0.368" stop-color="#ff744e"/><stop offset="0.522" stop-color="#ff5b2d"/><stop offset="0.709" stop-color="#ff4511"/><stop offset="0.87" stop-color="#ff3700"/><stop offset="1" stop-color="#ff2f00"/></linearGradient>
<linearGradient id="w281" gradientUnits="userSpaceOnUse" x1="1230.8" y1="197.5" x2="1385.8" y2="132.3"><stop offset="0" stop-color="#fff"/><stop offset="0.07" stop-color="#ffd2c7"/><stop offset="0.151" stop-color="#ffad99"/><stop offset="0.247" stop-color="#ff8d70"/><stop offset="0.361" stop-color="#ff714e"/><stop offset="0.515" stop-color="#ff572d"/><stop offset="0.699" stop-color="#ff4212"/><stop offset="0.873" stop-color="#f30"/><stop offset="1" stop-color="#ff2b00"/></linearGradient>
<linearGradient id="w282" gradientUnits="userSpaceOnUse" x1="1230.8" y1="197.5" x2="1393.2" y2="133.2"><stop offset="0" stop-color="#fff"/><stop offset="0.07" stop-color="#ffd0c6"/><stop offset="0.151" stop-color="#ffaa97"/><stop offset="0.244" stop-color="#ff8a6f"/><stop offset="0.358" stop-color="#ff6e4d"/><stop offset="0.508" stop-color="#ff542d"/><stop offset="0.692" stop-color="#ff3e13"/><stop offset="0.873" stop-color="#ff2f00"/><stop offset="1" stop-color="#ff2700"/></linearGradient>
<linearGradient id="w283" gradientUnits="userSpaceOnUse" x1="1230.8" y1="197.5" x2="1401.2" y2="134.1"><stop offset="0" stop-color="#fff"/><stop offset="0.067" stop-color="#ffd0c7"/><stop offset="0.147" stop-color="#ffa897"/><stop offset="0.241" stop-color="#ff876f"/><stop offset="0.351" stop-color="#ff6b4d"/><stop offset="0.502" stop-color="#ff512e"/><stop offset="0.682" stop-color="#ff3b14"/><stop offset="0.876" stop-color="#ff2b00"/><stop offset="1" stop-color="#ff2300"/></linearGradient>
<linearGradient id="w284" gradientUnits="userSpaceOnUse" x1="1230.8" y1="197.5" x2="1409.9" y2="135.1"><stop offset="0" stop-color="#fff"/><stop offset="0.067" stop-color="#ffcec5"/><stop offset="0.144" stop-color="#ffa696"/><stop offset="0.237" stop-color="#ff846e"/><stop offset="0.348" stop-color="#ff684d"/><stop offset="0.495" stop-color="#ff4d2e"/><stop offset="0.676" stop-color="#ff3814"/><stop offset="0.88" stop-color="#ff2700"/><stop offset="1" stop-color="#ff1f00"/></linearGradient>
<linearGradient id="w285" gradientUnits="userSpaceOnUse" x1="1230.8" y1="197.5" x2="1419.4" y2="136.2"><stop offset="0" stop-color="#fff"/><stop offset="0.064" stop-color="#ffcec6"/><stop offset="0.14" stop-color="#ffa496"/><stop offset="0.231" stop-color="#ff826e"/><stop offset="0.341" stop-color="#ff654d"/><stop offset="0.488" stop-color="#ff4a2e"/><stop offset="0.666" stop-color="#ff3415"/><stop offset="0.88" stop-color="#ff2300"/><stop offset="1" stop-color="#ff1b00"/></linearGradient>
<linearGradient id="w286" gradientUnits="userSpaceOnUse" x1="1230.8" y1="197.5" x2="1429.8" y2="137.4"><stop offset="0" stop-color="#fff"/><stop offset="0.064" stop-color="#ffcbc5"/><stop offset="0.137" stop-color="#ffa296"/><stop offset="0.227" stop-color="#ff7f6d"/><stop offset="0.338" stop-color="#ff614c"/><stop offset="0.482" stop-color="#ff462e"/><stop offset="0.659" stop-color="#ff3015"/><stop offset="0.883" stop-color="#ff1e00"/><stop offset="1" stop-color="#ff1700"/></linearGradient>
<linearGradient id="w287" gradientUnits="userSpaceOnUse" x1="1230.8" y1="197.5" x2="1441.3" y2="138.7"><stop offset="0" stop-color="#fff"/><stop offset="0.06" stop-color="#ffcbc5"/><stop offset="0.134" stop-color="#ffa095"/><stop offset="0.224" stop-color="#ff7b6c"/><stop offset="0.331" stop-color="#ff5d4b"/><stop offset="0.475" stop-color="#ff422d"/><stop offset="0.649" stop-color="#ff2d15"/><stop offset="0.886" stop-color="#ff1900"/><stop offset="1" stop-color="#ff1300"/></linearGradient>
<linearGradient id="w288" gradientUnits="userSpaceOnUse" x1="1230.8" y1="197.5" x2="1454.1" y2="140.2"><stop offset="0" stop-color="#fff"/><stop offset="0.06" stop-color="#ffc8c4"/><stop offset="0.134" stop-color="#ff9b93"/><stop offset="0.221" stop-color="#ff776b"/><stop offset="0.328" stop-color="#ff594a"/><stop offset="0.468" stop-color="#ff3e2d"/><stop offset="0.642" stop-color="#ff2916"/><stop offset="0.89" stop-color="#ff1500"/><stop offset="1" stop-color="#ff0e00"/></linearGradient>
<linearGradient id="w289" gradientUnits="userSpaceOnUse" x1="1230.8" y1="197.5" x2="1468.3" y2="141.8"><stop offset="0" stop-color="#fff"/><stop offset="0.06" stop-color="#ffc5c2"/><stop offset="0.13" stop-color="#ff9992"/><stop offset="0.217" stop-color="#ff736a"/><stop offset="0.321" stop-color="#ff554a"/><stop offset="0.462" stop-color="#ff3a2d"/><stop offset="0.632" stop-color="#ff2516"/><stop offset="0.893" stop-color="#ff1000"/><stop offset="1" stop-color="#ff0a00"/></linearGradient>
<linearGradient id="w290" gradientUnits="userSpaceOnUse" x1="1230.8" y1="197.5" x2="1484.3" y2="143.6"><stop offset="0" stop-color="#fff"/><stop offset="0.057" stop-color="#ffc5c2"/><stop offset="0.127" stop-color="#ff9691"/><stop offset="0.211" stop-color="#ff7069"/><stop offset="0.314" stop-color="#ff5149"/><stop offset="0.452" stop-color="#ff362d"/><stop offset="0.622" stop-color="#ff2016"/><stop offset="0.896" stop-color="#ff0b00"/><stop offset="1" stop-color="#ff0600"/></linearGradient>
<linearGradient id="w291" gradientUnits="userSpaceOnUse" x1="1230.8" y1="197.5" x2="1502.4" y2="145.7"><stop offset="0" stop-color="#fff"/><stop offset="0.054" stop-color="#ffc4c3"/><stop offset="0.12" stop-color="#ff9491"/><stop offset="0.204" stop-color="#ff6d69"/><stop offset="0.308" stop-color="#ff4d48"/><stop offset="0.441" stop-color="#ff322d"/><stop offset="0.612" stop-color="#ff1c17"/><stop offset="0.9" stop-color="#ff0600"/><stop offset="1" stop-color="#ff0100"/></linearGradient>
<linearGradient id="w292" gradientUnits="userSpaceOnUse" x1="1230.8" y1="197.5" x2="1523.2" y2="148"><stop offset="0" stop-color="#fff"/><stop offset="0.054" stop-color="#ffc1c0"/><stop offset="0.117" stop-color="#ff9190"/><stop offset="0.197" stop-color="#ff6968"/><stop offset="0.301" stop-color="#ff4847"/><stop offset="0.435" stop-color="#ff2d2c"/><stop offset="0.602" stop-color="#ff1817"/><stop offset="0.88" stop-color="#ff0201"/><stop offset="1" stop-color="#f00"/></linearGradient>
<linearGradient id="w293" gradientUnits="userSpaceOnUse" x1="1230.8" y1="197.5" x2="1547.1" y2="150.8"><stop offset="0" stop-color="#fff"/><stop offset="0.05" stop-color="#ffc0c1"/><stop offset="0.117" stop-color="#ff8a8c"/><stop offset="0.197" stop-color="#ff6265"/><stop offset="0.298" stop-color="#ff4245"/><stop offset="0.438" stop-color="#ff262a"/><stop offset="0.622" stop-color="#ff1014"/><stop offset="0.833" stop-color="#ff0004"/><stop offset="1" stop-color="#f00"/></linearGradient>
<linearGradient id="w294" gradientUnits="userSpaceOnUse" x1="1230.8" y1="197.5" x2="1575.1" y2="154"><stop offset="0" stop-color="#fff"/><stop offset="0.023" stop-color="#ffdbdd"/><stop offset="0.05" stop-color="#ffbbbe"/><stop offset="0.114" stop-color="#ff868a"/><stop offset="0.194" stop-color="#ff5c62"/><stop offset="0.294" stop-color="#ff3c43"/><stop offset="0.448" stop-color="#ff1e26"/><stop offset="0.649" stop-color="#ff0711"/><stop offset="0.749" stop-color="#ff0009"/><stop offset="1" stop-color="#f00"/></linearGradient>
<linearGradient id="w295" gradientUnits="userSpaceOnUse" x1="1230.8" y1="197.5" x2="1608.5" y2="157.8"><stop offset="0" stop-color="#fff"/><stop offset="0.023" stop-color="#ffd8da"/><stop offset="0.047" stop-color="#ffbabe"/><stop offset="0.11" stop-color="#ff8188"/><stop offset="0.191" stop-color="#ff565f"/><stop offset="0.291" stop-color="#ff3540"/><stop offset="0.448" stop-color="#ff1724"/><stop offset="0.662" stop-color="#ff000f"/><stop offset="1" stop-color="#f00"/></linearGradient>
<linearGradient id="w296" gradientUnits="userSpaceOnUse" x1="1230.8" y1="197.5" x2="1648.7" y2="162.4"><stop offset="0" stop-color="#fff"/><stop offset="0.023" stop-color="#ffd4d8"/><stop offset="0.047" stop-color="#ffb4ba"/><stop offset="0.107" stop-color="#ff7b85"/><stop offset="0.184" stop-color="#ff505d"/><stop offset="0.288" stop-color="#ff2d3e"/><stop offset="0.418" stop-color="#ff1426"/><stop offset="0.589" stop-color="#ff0014"/><stop offset="1" stop-color="#f00"/></linearGradient>
<linearGradient id="w297" gradientUnits="userSpaceOnUse" x1="1230.8" y1="197.5" x2="1662" y2="170.4"><stop offset="0" stop-color="#fff"/><stop offset="0.02" stop-color="#ffd9dc"/><stop offset="0.043" stop-color="#ffb6bd"/><stop offset="0.07" stop-color="#ff98a2"/><stop offset="0.104" stop-color="#ff7a87"/><stop offset="0.181" stop-color="#ff4e5f"/><stop offset="0.284" stop-color="#ff2b40"/><stop offset="0.405" stop-color="#ff132a"/><stop offset="0.555" stop-color="#ff0019"/><stop offset="1" stop-color="#ff0001"/></linearGradient>
<linearGradient id="w298" gradientUnits="userSpaceOnUse" x1="1230.8" y1="197.5" x2="1662" y2="179.4"><stop offset="0" stop-color="#fff"/><stop offset="0.023" stop-color="#ffd3d8"/><stop offset="0.047" stop-color="#ffb2bb"/><stop offset="0.107" stop-color="#ff7787"/><stop offset="0.184" stop-color="#ff4c61"/><stop offset="0.288" stop-color="#ff2942"/><stop offset="0.401" stop-color="#ff122e"/><stop offset="0.545" stop-color="#ff001e"/><stop offset="1" stop-color="#ff0005"/></linearGradient>
<linearGradient id="w299" gradientUnits="userSpaceOnUse" x1="1230.8" y1="197.5" x2="1662" y2="188.5"><stop offset="0" stop-color="#fff"/><stop offset="0.023" stop-color="#ffd3d9"/><stop offset="0.047" stop-color="#ffb1bc"/><stop offset="0.107" stop-color="#ff778a"/><stop offset="0.184" stop-color="#ff4b64"/><stop offset="0.288" stop-color="#ff2846"/><stop offset="0.395" stop-color="#ff1233"/><stop offset="0.532" stop-color="#ff0023"/><stop offset="1" stop-color="#ff000a"/></linearGradient>
<clipPath id="plotc"><rect x="1020" y="90" width="640" height="491"/></clipPath>
<radialGradient id="wglow"><stop offset="0" stop-color="#fff" stop-opacity="0.75"/><stop offset="0.4" stop-color="#fff" stop-opacity="0.38"/><stop offset="1" stop-color="#fff" stop-opacity="0"/></radialGradient>
<linearGradient id="insg" gradientUnits="userSpaceOnUse" x1="1442.4" y1="408.3" x2="1651.8" y2="594.3"><stop offset="0.0" stop-color="#acff00"/><stop offset="0.071" stop-color="#b6ff00"/><stop offset="0.143" stop-color="#c1ff00"/><stop offset="0.214" stop-color="#cdff00"/><stop offset="0.286" stop-color="#d9ff00"/><stop offset="0.357" stop-color="#e5ff00"/><stop offset="0.429" stop-color="#f2ff00"/><stop offset="0.5" stop-color="#ff0"/><stop offset="0.571" stop-color="#fff200"/><stop offset="0.643" stop-color="#ffe500"/><stop offset="0.714" stop-color="#ffda00"/><stop offset="0.786" stop-color="#ffcf00"/><stop offset="0.857" stop-color="#ffc400"/><stop offset="0.929" stop-color="#ffba00"/><stop offset="1.0" stop-color="#ffb100"/></linearGradient>
<clipPath id="insc"><rect x="1441.1" y="429.1" width="212.0" height="144.39999999999998"/></clipPath>
<linearGradient id="rb" x1="0" y1="0" x2="0" y2="1"><stop offset="0" stop-color="#ff5a5a"/><stop offset="1" stop-color="#ff0e0e"/></linearGradient>
<linearGradient id="gbar" x1="0" y1="0" x2="0" y2="1"><stop offset="0" stop-color="#5cac5c"/><stop offset="1" stop-color="#108010"/></linearGradient>
<linearGradient id="bb" x1="0" y1="0" x2="0" y2="1"><stop offset="0" stop-color="#5c5cff"/><stop offset="0.75" stop-color="#0606ff"/><stop offset="1" stop-color="#0000f8"/></linearGradient>
<linearGradient id="thg" x1="0" y1="0" x2="0" y2="1"><stop offset="0" stop-color="#2e2e2e"/><stop offset="0.5" stop-color="#282828"/><stop offset="0.52" stop-color="#141414"/><stop offset="1" stop-color="#0c0c0c"/></linearGradient>
<linearGradient id="stripg" x1="0" y1="0" x2="0" y2="1"><stop offset="0" stop-color="#484848"/><stop offset="1" stop-color="#2a2a2a"/></linearGradient>
<linearGradient id="btn" x1="0" y1="0" x2="0" y2="1"><stop offset="0" stop-color="#adadad"/><stop offset="0.5" stop-color="#7c7c7c"/><stop offset="1" stop-color="#4e4e4e"/></linearGradient>
<linearGradient id="btnsel" x1="0" y1="0" x2="0" y2="1"><stop offset="0" stop-color="#1c1c1c"/><stop offset="1" stop-color="#343434"/></linearGradient>
<linearGradient id="upc" x1="0" y1="0" x2="0" y2="1"><stop offset="0" stop-color="#6e6e6e"/><stop offset="1" stop-color="#9a9a9a"/></linearGradient>
<linearGradient id="cb" x1="0" y1="0" x2="0" y2="1"><stop offset="0" stop-color="#a8a8a8"/><stop offset="1" stop-color="#6a6a6a"/></linearGradient>
<linearGradient id="cb2" x1="0" y1="0" x2="0" y2="1"><stop offset="0" stop-color="#a0a0a0"/><stop offset="1" stop-color="#5e5e5e"/></linearGradient>
<linearGradient id="cc" x1="0" y1="0" x2="0" y2="1"><stop offset="0" stop-color="#7a7a7a"/><stop offset="1" stop-color="#a4a4a4"/></linearGradient>
<linearGradient id="sbg" x1="0" y1="0" x2="0" y2="1"><stop offset="0" stop-color="#b4b4b4"/><stop offset="0.5" stop-color="#9c9c9c"/><stop offset="0.52" stop-color="#848484"/><stop offset="1" stop-color="#909090"/></linearGradient>
<linearGradient id="edge" x1="0" y1="0" x2="1" y2="0"><stop offset="0" stop-color="rgba(0,0,0,0)"/><stop offset="1" stop-color="rgba(0,0,0,0.78)"/></linearGradient></defs>
<rect x="0" y="0" width="1670" height="947" fill="#333"/>
<rect x="0" y="0" width="1670" height="38" fill="#222"/>
<path d="M1.5 38V6a5.5 5.5 0 0 1 5.5-5.5H110a5.5 5.5 0 0 1 5.5 5.5V38" fill="url(#tabg)" stroke="#777" stroke-width="1"/>
<line x1="74.5" y1="2" x2="74.5" y2="38" stroke="#222" stroke-width="1"/>
<line x1="75.5" y1="2" x2="75.5" y2="38" stroke="#555" stroke-width="1"/>
<text x="8.5" y="25" font-size="15" fill="#e6e6e6" textLength="58" lengthAdjust="spacingAndGlyphs">History 1</text>
<circle cx="93.4" cy="22" r="12" fill="url(#plusg)"/>
<path d="M89.5 23h7M93 19.5v7" stroke="#8a8a8a" stroke-width="1.2"/>
<rect x="0" y="38" width="1.5" height="909" fill="#4a4a4a"/>
<text x="9.5" y="94.6" font-size="41.4" fill="#f2f2f2" textLength="332.5" lengthAdjust="spacingAndGlyphs">Saturation Sweeps</text>
<path d="M1055.7 4.500a4 4 0 0 1 4-4H1230a4 4 0 0 1 4 4V34a3.4 3.4 0 0 1-3.4 3.4H1059.1000000000001a3.4 3.4 0 0 1-3.4-3.4z" fill="url(#wg)"/>
<path d="M1055.7 4.500a4 4 0 0 1 4-4h3.4v36.900h-4a3.4 3.4 0 0 1-3.4-3.4z" fill="#12e012"/>
<text x="1066.9" y="13.8" font-size="12.8" fill="#f0f0f0" textLength="82" lengthAdjust="spacingAndGlyphs">X-Rite i1Pro 3</text>
<text x="1066.9" y="33.0" font-size="12.8" fill="#f0f0f0" textLength="69.4" lengthAdjust="spacingAndGlyphs">Direct View</text>
<circle cx="1165.1" cy="18.6" r="12" fill="url(#ddg)"/>
<path d="M1158.8999999999999 17h12.4l-6.200 6.600z" fill="#fff"/>
<line x1="1189.5" y1="1" x2="1189.5" y2="37" stroke="#3c3c3c" stroke-width="1.2"/>
<circle cx="1215.3" cy="18.6" r="15.6" fill="#0000f0" stroke="#d8d8ff" stroke-width="1.3"/>
<text x="1215.3" y="23.4" font-size="11.6" fill="#fff" text-anchor="middle">708</text>
<path d="M1241.5 4.500a4 4 0 0 1 4-4H1400a4 4 0 0 1 4 4V34a3.4 3.4 0 0 1-3.4 3.4H1244.9a3.4 3.4 0 0 1-3.4-3.4z" fill="url(#wg)"/>
<path d="M1241.5 4.500a4 4 0 0 1 4-4h3.4v36.900h-4a3.4 3.4 0 0 1-3.4-3.4z" fill="#12e012"/>
<text x="1252.7" y="13.8" font-size="12.8" fill="#f0f0f0" textLength="79.9" lengthAdjust="spacingAndGlyphs">Mobile Forge</text>
<circle cx="1384.1" cy="18.6" r="12" fill="url(#ddg)"/>
<path d="M1377.8999999999999 17h12.4l-6.200 6.600z" fill="#fff"/>
<path d="M1411.7 4.500a4 4 0 0 1 4-4H1587a4 4 0 0 1 4 4V34a3.4 3.4 0 0 1-3.4 3.4H1415.1000000000001a3.4 3.4 0 0 1-3.4-3.4z" fill="url(#wg)"/>
<path d="M1411.7 4.500a4 4 0 0 1 4-4h3.4v36.900h-4a3.4 3.4 0 0 1-3.4-3.4z" fill="#e6e600"/>
<text x="1422.9" y="13.8" font-size="12.8" fill="#f0f0f0" textLength="130.6" lengthAdjust="spacingAndGlyphs">Direct Display Control</text>
<circle cx="1570.9" cy="18.6" r="12" fill="url(#ddg)"/>
<path d="M1564.7 17h12.4l-6.200 6.600z" fill="#fff"/>
<path d="M1595.8 -2V29.5a5 5 0 0 0 5 5H1631.5a5 5 0 0 0 5-5V-2z" fill="url(#gb)" stroke="#b8b8b8" stroke-width="1"/>
<path d="M1638.5 -2V29.5a5 5 0 0 0 5 5H1676V-2z" fill="url(#gb)" stroke="#b8b8b8" stroke-width="1"/>
<circle cx="1615.8" cy="17.4" r="12.2" fill="url(#gbc)"/>
<circle cx="1654.7" cy="17.4" r="12.2" fill="url(#gbc)"/>
<g transform="translate(1615.8 17.4)" fill="#d2d2d2"><rect x="-1.7" y="-8.2" width="3.4" height="3.6" transform="rotate(0)"/><rect x="-1.7" y="-8.2" width="3.4" height="3.6" transform="rotate(45)"/><rect x="-1.7" y="-8.2" width="3.4" height="3.6" transform="rotate(90)"/><rect x="-1.7" y="-8.2" width="3.4" height="3.6" transform="rotate(135)"/><rect x="-1.7" y="-8.2" width="3.4" height="3.6" transform="rotate(180)"/><rect x="-1.7" y="-8.2" width="3.4" height="3.6" transform="rotate(225)"/><rect x="-1.7" y="-8.2" width="3.4" height="3.6" transform="rotate(270)"/><rect x="-1.7" y="-8.2" width="3.4" height="3.6" transform="rotate(315)"/><circle r="5.2" fill="none" stroke="#d2d2d2" stroke-width="2.4"/></g>
<path d="M1658 11.4v12l-7.6-6z" fill="#fff"/>
<rect x="45.5" y="185.5" width="312.5" height="387.0" fill="#262626"/>
<line x1="85.6" y1="185.5" x2="85.6" y2="572.5" stroke="#939393" stroke-width="1.5"/>
<line x1="128.4" y1="185.5" x2="128.4" y2="572.5" stroke="#939393" stroke-width="1.5"/>
<line x1="168.6" y1="185.5" x2="168.6" y2="572.5" stroke="#939393" stroke-width="1.5"/>
<line x1="211.4" y1="185.5" x2="211.4" y2="572.5" stroke="#939393" stroke-width="1.5"/>
<line x1="251.4" y1="185.5" x2="251.4" y2="572.5" stroke="#939393" stroke-width="1.5"/>
<line x1="294.3" y1="185.5" x2="294.3" y2="572.5" stroke="#939393" stroke-width="1.5"/>
<line x1="335.2" y1="185.5" x2="335.2" y2="572.5" stroke="#939393" stroke-width="1.5"/>
<path d="M45.5 185.5H358V572.5H45.5z" fill="none" stroke="#a2a2a2" stroke-width="1.2"/>
<line x1="40.0" y1="185.5" x2="45.5" y2="185.5" stroke="#d4d4d4" stroke-width="1.4"/>
<line x1="40.0" y1="240.78" x2="45.5" y2="240.78" stroke="#d4d4d4" stroke-width="1.4"/>
<line x1="40.0" y1="296.06" x2="45.5" y2="296.06" stroke="#d4d4d4" stroke-width="1.4"/>
<line x1="40.0" y1="351.34000000000003" x2="45.5" y2="351.34000000000003" stroke="#d4d4d4" stroke-width="1.4"/>
<line x1="40.0" y1="406.62" x2="45.5" y2="406.62" stroke="#d4d4d4" stroke-width="1.4"/>
<line x1="40.0" y1="461.9" x2="45.5" y2="461.9" stroke="#d4d4d4" stroke-width="1.4"/>
<line x1="40.0" y1="517.1800000000001" x2="45.5" y2="517.1800000000001" stroke="#d4d4d4" stroke-width="1.4"/>
<line x1="40.0" y1="572.46" x2="45.5" y2="572.46" stroke="#d4d4d4" stroke-width="1.4"/>
<line x1="45.5" y1="572.5" x2="45.5" y2="578.0" stroke="#d4d4d4" stroke-width="1.4"/>
<text x="44.7" y="593.6" font-size="14.3" fill="#dcdcdc" text-anchor="middle">0</text>
<line x1="85.6" y1="572.5" x2="85.6" y2="578.0" stroke="#d4d4d4" stroke-width="1.4"/>
<text x="84.8" y="593.6" font-size="14.3" fill="#dcdcdc" text-anchor="middle">2</text>
<line x1="128.4" y1="572.5" x2="128.4" y2="578.0" stroke="#d4d4d4" stroke-width="1.4"/>
<text x="127.60000000000001" y="593.6" font-size="14.3" fill="#dcdcdc" text-anchor="middle">4</text>
<line x1="168.6" y1="572.5" x2="168.6" y2="578.0" stroke="#d4d4d4" stroke-width="1.4"/>
<text x="167.79999999999998" y="593.6" font-size="14.3" fill="#dcdcdc" text-anchor="middle">6</text>
<line x1="211.4" y1="572.5" x2="211.4" y2="578.0" stroke="#d4d4d4" stroke-width="1.4"/>
<text x="210.6" y="593.6" font-size="14.3" fill="#dcdcdc" text-anchor="middle">8</text>
<line x1="251.4" y1="572.5" x2="251.4" y2="578.0" stroke="#d4d4d4" stroke-width="1.4"/>
<text x="250.6" y="593.6" font-size="14.3" fill="#dcdcdc" text-anchor="middle">10</text>
<line x1="294.3" y1="572.5" x2="294.3" y2="578.0" stroke="#d4d4d4" stroke-width="1.4"/>
<text x="293.5" y="593.6" font-size="14.3" fill="#dcdcdc" text-anchor="middle">12</text>
<line x1="335.2" y1="572.5" x2="335.2" y2="578.0" stroke="#d4d4d4" stroke-width="1.4"/>
<text x="334.4" y="593.6" font-size="14.3" fill="#dcdcdc" text-anchor="middle">14</text>
<text x="182.6" y="181" font-size="14.3" fill="#dcdcdc" text-anchor="middle">DeltaE 2000</text>
<text x="43.4" y="220.2" font-size="14.3" fill="#dcdcdc" text-anchor="end">100%</text>
<text x="43.4" y="274.2" font-size="14.3" fill="#dcdcdc" text-anchor="end">80%</text>
<text x="43.4" y="330.1" font-size="14.3" fill="#dcdcdc" text-anchor="end">60%</text>
<text x="43.4" y="384.6" font-size="14.3" fill="#dcdcdc" text-anchor="end">40%</text>
<text x="43.4" y="440.2" font-size="14.3" fill="#dcdcdc" text-anchor="end">20%</text>
<text x="43.4" y="495.4" font-size="14.3" fill="#dcdcdc" text-anchor="end">100</text>
<text x="43.4" y="550.6" font-size="14.3" fill="#dcdcdc" text-anchor="end">0</text>
<rect x="45.8" y="191.9" width="158.2" height="4.8" fill="url(#hb0)" stroke="#000" stroke-width="1.4"/>
<rect x="45.8" y="198.7" width="188.2" height="4.9" fill="url(#hb1)" stroke="#000" stroke-width="1.4"/>
<rect x="45.8" y="205.5" width="15.7" height="4.7" fill="url(#hb2)" stroke="#000" stroke-width="1.4"/>
<rect x="45.8" y="212.5" width="162.3" height="4.9" fill="url(#hb3)" stroke="#000" stroke-width="1.4"/>
<rect x="45.8" y="219.3" width="156.3" height="4.8" fill="url(#hb4)" stroke="#000" stroke-width="1.4"/>
<rect x="45.8" y="226.3" width="41.7" height="4.8" fill="url(#hb5)" stroke="#000" stroke-width="1.4"/>
<rect x="45.8" y="316.1" width="17.9" height="4.4" fill="url(#hb6)" stroke="#000" stroke-width="1.4"/>
<rect x="45.8" y="336.6" width="29.9" height="4.9" fill="url(#hb7)" stroke="#000" stroke-width="1.4"/>
<rect x="45.8" y="371.3" width="15.2" height="5.0" fill="url(#hb8)" stroke="#000" stroke-width="1.4"/>
<rect x="45.8" y="391.7" width="33.3" height="5.0" fill="url(#hb9)" stroke="#000" stroke-width="1.4"/>
<rect x="45.8" y="425.9" width="26.1" height="5.2" fill="url(#hb10)" stroke="#000" stroke-width="1.4"/>
<rect x="45.8" y="446.3" width="31.2" height="5.0" fill="url(#hb11)" stroke="#000" stroke-width="1.4"/>
<rect x="45.8" y="508.9" width="42.9" height="5.4" fill="url(#hb12)" stroke="#000" stroke-width="1.4"/>
<rect x="409.5" y="132.2" width="145.10000000000002" height="281.7" fill="#262626"/>
<line x1="409.5" y1="179.3" x2="554.6" y2="179.3" stroke="#939393" stroke-width="1.5"/>
<line x1="409.5" y1="227.2" x2="554.6" y2="227.2" stroke="#939393" stroke-width="1.5"/>
<line x1="409.5" y1="274.3" x2="554.6" y2="274.3" stroke="#939393" stroke-width="1.5"/>
<line x1="409.5" y1="320.4" x2="554.6" y2="320.4" stroke="#939393" stroke-width="1.5"/>
<line x1="409.5" y1="368.3" x2="554.6" y2="368.3" stroke="#939393" stroke-width="1.5"/>
<path d="M409.5 132.2H554.6V413.9H409.5z" fill="none" stroke="#a2a2a2" stroke-width="1.3"/>
<line x1="404.0" y1="132.2" x2="409.5" y2="132.2" stroke="#d4d4d4" stroke-width="1.4"/>
<text x="402.9" y="137.79999999999998" font-size="14.3" fill="#dcdcdc" text-anchor="end">15</text>
<line x1="404.0" y1="179.3" x2="409.5" y2="179.3" stroke="#d4d4d4" stroke-width="1.4"/>
<text x="402.9" y="184.9" font-size="14.3" fill="#dcdcdc" text-anchor="end">10</text>
<line x1="404.0" y1="227.2" x2="409.5" y2="227.2" stroke="#d4d4d4" stroke-width="1.4"/>
<text x="402.9" y="232.79999999999998" font-size="14.3" fill="#dcdcdc" text-anchor="end">5</text>
<line x1="404.0" y1="274.3" x2="409.5" y2="274.3" stroke="#d4d4d4" stroke-width="1.4"/>
<text x="402.9" y="279.90000000000003" font-size="14.3" fill="#dcdcdc" text-anchor="end">0</text>
<line x1="404.0" y1="320.4" x2="409.5" y2="320.4" stroke="#d4d4d4" stroke-width="1.4"/>
<text x="402.9" y="326.0" font-size="14.3" fill="#dcdcdc" text-anchor="end">-5</text>
<line x1="404.0" y1="368.3" x2="409.5" y2="368.3" stroke="#d4d4d4" stroke-width="1.4"/>
<text x="402.9" y="373.90000000000003" font-size="14.3" fill="#dcdcdc" text-anchor="end">-10</text>
<line x1="404.0" y1="413.9" x2="409.5" y2="413.9" stroke="#d4d4d4" stroke-width="1.4"/>
<text x="402.9" y="419.5" font-size="14.3" fill="#dcdcdc" text-anchor="end">-15</text>
<line x1="409.5" y1="413.9" x2="409.5" y2="419.4" stroke="#d4d4d4" stroke-width="1.4"/>
<line x1="554.6" y1="413.9" x2="554.6" y2="419.4" stroke="#d4d4d4" stroke-width="1.2"/>
<text x="468.6" y="127" font-size="14.3" fill="#dcdcdc" text-anchor="middle">Delta L</text>
<text x="481.5" y="431.2" font-size="14.3" fill="#dcdcdc" text-anchor="middle">100%</text>
<rect x="424.6" y="273" width="115.0" height="11.199999999999989" fill="url(#yv)" stroke="#000" stroke-width="1.2"/>
<rect x="606.9" y="132.2" width="144.70000000000005" height="281.7" fill="#262626"/>
<line x1="606.9" y1="179.3" x2="751.6" y2="179.3" stroke="#939393" stroke-width="1.5"/>
<line x1="606.9" y1="227.2" x2="751.6" y2="227.2" stroke="#939393" stroke-width="1.5"/>
<line x1="606.9" y1="274.3" x2="751.6" y2="274.3" stroke="#939393" stroke-width="1.5"/>
<line x1="606.9" y1="320.4" x2="751.6" y2="320.4" stroke="#939393" stroke-width="1.5"/>
<line x1="606.9" y1="368.3" x2="751.6" y2="368.3" stroke="#939393" stroke-width="1.5"/>
<path d="M606.9 132.2H751.6V413.9H606.9z" fill="none" stroke="#a2a2a2" stroke-width="1.3"/>
<line x1="601.4" y1="132.2" x2="606.9" y2="132.2" stroke="#d4d4d4" stroke-width="1.4"/>
<text x="600.3" y="137.79999999999998" font-size="14.3" fill="#dcdcdc" text-anchor="end">15</text>
<line x1="601.4" y1="179.3" x2="606.9" y2="179.3" stroke="#d4d4d4" stroke-width="1.4"/>
<text x="600.3" y="184.9" font-size="14.3" fill="#dcdcdc" text-anchor="end">10</text>
<line x1="601.4" y1="227.2" x2="606.9" y2="227.2" stroke="#d4d4d4" stroke-width="1.4"/>
<text x="600.3" y="232.79999999999998" font-size="14.3" fill="#dcdcdc" text-anchor="end">5</text>
<line x1="601.4" y1="274.3" x2="606.9" y2="274.3" stroke="#d4d4d4" stroke-width="1.4"/>
<text x="600.3" y="279.90000000000003" font-size="14.3" fill="#dcdcdc" text-anchor="end">0</text>
<line x1="601.4" y1="320.4" x2="606.9" y2="320.4" stroke="#d4d4d4" stroke-width="1.4"/>
<text x="600.3" y="326.0" font-size="14.3" fill="#dcdcdc" text-anchor="end">-5</text>
<line x1="601.4" y1="368.3" x2="606.9" y2="368.3" stroke="#d4d4d4" stroke-width="1.4"/>
<text x="600.3" y="373.90000000000003" font-size="14.3" fill="#dcdcdc" text-anchor="end">-10</text>
<line x1="601.4" y1="413.9" x2="606.9" y2="413.9" stroke="#d4d4d4" stroke-width="1.4"/>
<text x="600.3" y="419.5" font-size="14.3" fill="#dcdcdc" text-anchor="end">-15</text>
<line x1="606.9" y1="413.9" x2="606.9" y2="419.4" stroke="#d4d4d4" stroke-width="1.4"/>
<line x1="751.6" y1="413.9" x2="751.6" y2="419.4" stroke="#d4d4d4" stroke-width="1.2"/>
<text x="666.2" y="127" font-size="14.3" fill="#dcdcdc" text-anchor="middle">Delta C</text>
<text x="679" y="431.2" font-size="14.3" fill="#dcdcdc" text-anchor="middle">100%</text>
<rect x="622" y="273" width="114.60000000000002" height="57.19999999999999" fill="url(#yv)" stroke="#000" stroke-width="1.2"/>
<rect x="804.4" y="132.2" width="144.80000000000007" height="281.7" fill="#262626"/>
<line x1="804.4" y1="179.3" x2="949.2" y2="179.3" stroke="#939393" stroke-width="1.5"/>
<line x1="804.4" y1="227.2" x2="949.2" y2="227.2" stroke="#939393" stroke-width="1.5"/>
<line x1="804.4" y1="274.3" x2="949.2" y2="274.3" stroke="#939393" stroke-width="1.5"/>
<line x1="804.4" y1="320.4" x2="949.2" y2="320.4" stroke="#939393" stroke-width="1.5"/>
<line x1="804.4" y1="368.3" x2="949.2" y2="368.3" stroke="#939393" stroke-width="1.5"/>
<path d="M804.4 132.2H949.2V413.9H804.4z" fill="none" stroke="#a2a2a2" stroke-width="1.3"/>
<line x1="798.9" y1="132.2" x2="804.4" y2="132.2" stroke="#d4d4d4" stroke-width="1.4"/>
<text x="797.8" y="137.79999999999998" font-size="14.3" fill="#dcdcdc" text-anchor="end">15</text>
<line x1="798.9" y1="179.3" x2="804.4" y2="179.3" stroke="#d4d4d4" stroke-width="1.4"/>
<text x="797.8" y="184.9" font-size="14.3" fill="#dcdcdc" text-anchor="end">10</text>
<line x1="798.9" y1="227.2" x2="804.4" y2="227.2" stroke="#d4d4d4" stroke-width="1.4"/>
<text x="797.8" y="232.79999999999998" font-size="14.3" fill="#dcdcdc" text-anchor="end">5</text>
<line x1="798.9" y1="274.3" x2="804.4" y2="274.3" stroke="#d4d4d4" stroke-width="1.4"/>
<text x="797.8" y="279.90000000000003" font-size="14.3" fill="#dcdcdc" text-anchor="end">0</text>
<line x1="798.9" y1="320.4" x2="804.4" y2="320.4" stroke="#d4d4d4" stroke-width="1.4"/>
<text x="797.8" y="326.0" font-size="14.3" fill="#dcdcdc" text-anchor="end">-5</text>
<line x1="798.9" y1="368.3" x2="804.4" y2="368.3" stroke="#d4d4d4" stroke-width="1.4"/>
<text x="797.8" y="373.90000000000003" font-size="14.3" fill="#dcdcdc" text-anchor="end">-10</text>
<line x1="798.9" y1="413.9" x2="804.4" y2="413.9" stroke="#d4d4d4" stroke-width="1.4"/>
<text x="797.8" y="419.5" font-size="14.3" fill="#dcdcdc" text-anchor="end">-15</text>
<line x1="804.4" y1="413.9" x2="804.4" y2="419.4" stroke="#d4d4d4" stroke-width="1.4"/>
<line x1="949.2" y1="413.9" x2="949.2" y2="419.4" stroke="#d4d4d4" stroke-width="1.2"/>
<text x="863" y="127" font-size="14.3" fill="#dcdcdc" text-anchor="middle">Delta H</text>
<text x="876.5" y="431.2" font-size="14.3" fill="#dcdcdc" text-anchor="middle">100%</text>
<rect x="819.6" y="251.2" width="113.79999999999995" height="22.19999999999999" fill="url(#yv)" stroke="#000" stroke-width="1.2"/>
<rect x="377.3" y="440.5" width="591.7" height="162.5" fill="#000"/>
<rect x="397" y="448" width="100" height="66" fill="#bec0a6"/>
<rect x="397" y="514" width="100" height="66" fill="#c2c3a4"/>
<rect x="397.3" y="448.4" width="99.4" height="131.2" fill="none" stroke="#fff" stroke-width="1.1"/>
<text x="447" y="595" font-size="11.8" fill="#fff" text-anchor="middle">20%</text>
<rect x="512.8" y="448" width="100" height="66" fill="#bdc08c"/>
<rect x="512.8" y="514" width="100" height="66" fill="#c1c286"/>
<rect x="513.0999999999999" y="448.4" width="99.4" height="131.2" fill="none" stroke="#fff" stroke-width="1.1"/>
<text x="562.8" y="595" font-size="11.8" fill="#fff" text-anchor="middle">40%</text>
<rect x="628.6" y="448" width="100" height="66" fill="#bdc070"/>
<rect x="628.6" y="514" width="100" height="66" fill="#bfc06b"/>
<rect x="628.9" y="448.4" width="99.4" height="131.2" fill="none" stroke="#fff" stroke-width="1.1"/>
<text x="678.6" y="595" font-size="11.8" fill="#fff" text-anchor="middle">60%</text>
<rect x="744.3" y="448" width="100" height="66" fill="#000"/>
<rect x="744.3" y="514" width="100" height="66" fill="#c2c045"/>
<rect x="744.5999999999999" y="448.4" width="99.4" height="131.2" fill="none" stroke="#fff" stroke-width="1.1"/>
<text x="794.3" y="595" font-size="11.8" fill="#fff" text-anchor="middle">80%</text>
<rect x="860" y="448" width="100" height="66" fill="#bcbf26"/>
<rect x="860" y="514" width="100" height="66" fill="#c6c400"/>
<rect x="860.3" y="448.4" width="99.4" height="131.2" fill="none" stroke="#fff" stroke-width="1.1"/>
<text x="910" y="595" font-size="11.8" fill="#fff" text-anchor="middle">100%</text>
<text transform="translate(389.6 476.7) rotate(-90)" font-size="12.2" fill="#fff" text-anchor="middle">Actual</text>
<text transform="translate(389.6 551) rotate(-90)" font-size="12.2" fill="#fff" text-anchor="middle">Target</text>
<rect x="975.5" y="59" width="700" height="558" fill="#1c1c1c"/>
<rect x="982" y="65.8" width="681.3" height="544.8" fill="#333"/>
<rect x="1019.8" y="89.8" width="639.7" height="491.4" fill="#262626"/>
<text x="1322.7" y="83" font-size="14.3" fill="#dcdcdc" text-anchor="middle">CIE 1976 u'v'</text>
<g clip-path="url(#plotc)"><g id="fan"><path fill="url(#w0)" d="M1230.8 197.5L1682.2 190.4L1681.6 221.1z"/><path fill="url(#w1)" d="M1230.8 197.5L1673.1 199.8L1671.9 229.9z"/><path fill="url(#w2)" d="M1230.8 197.5L1664.4 208.9L1662.7 238.3z"/><path fill="url(#w3)" d="M1230.8 197.5L1656.1 217.6L1653.7 246.4z"/><path fill="url(#w4)" d="M1230.8 197.5L1648 225.9L1645.1 254.3z"/><path fill="url(#w5)" d="M1230.8 197.5L1640.3 234L1636.8 261.8z"/><path fill="url(#w6)" d="M1230.8 197.5L1632.7 241.9L1628.8 269.1z"/><path fill="url(#w7)" d="M1230.8 197.5L1625.5 249.5L1621 276.2z"/><path fill="url(#w8)" d="M1230.8 197.5L1618.4 256.8L1613.5 283z"/><path fill="url(#w9)" d="M1230.8 197.5L1611.5 264L1606.1 289.7z"/><path fill="url(#w10)" d="M1230.8 197.5L1604.9 270.9L1599 296.2z"/><path fill="url(#w11)" d="M1230.8 197.5L1598.4 277.7L1592.1 302.5z"/><path fill="url(#w12)" d="M1230.8 197.5L1592.1 284.2L1585.3 308.6z"/><path fill="url(#w13)" d="M1230.8 197.5L1585.9 290.7L1578.7 314.6z"/><path fill="url(#w14)" d="M1230.8 197.5L1579.9 296.9L1572.3 320.5z"/><path fill="url(#w15)" d="M1230.8 197.5L1574 303.1L1566 326.2z"/><path fill="url(#w16)" d="M1230.8 197.5L1568.2 309.1L1559.8 331.8z"/><path fill="url(#w17)" d="M1230.8 197.5L1562.5 315L1553.8 337.3z"/><path fill="url(#w18)" d="M1230.8 197.5L1557 320.8L1547.9 342.7z"/><path fill="url(#w19)" d="M1230.8 197.5L1551.5 326.4L1542 348z"/><path fill="url(#w20)" d="M1230.8 197.5L1546.2 332L1536.3 353.2z"/><path fill="url(#w21)" d="M1230.8 197.5L1540.9 337.5L1530.6 358.3z"/><path fill="url(#w22)" d="M1230.8 197.5L1535.7 342.9L1525.1 363.3z"/><path fill="url(#w23)" d="M1230.8 197.5L1530.5 348.3L1519.6 368.3z"/><path fill="url(#w24)" d="M1230.8 197.5L1525.5 353.5L1514.2 373.2z"/><path fill="url(#w25)" d="M1230.8 197.5L1520.5 358.7L1508.8 378.1z"/><path fill="url(#w26)" d="M1230.8 197.5L1515.5 363.9L1503.5 382.9z"/><path fill="url(#w27)" d="M1230.8 197.5L1510.6 369L1498.3 387.6z"/><path fill="url(#w28)" d="M1230.8 197.5L1505.7 374L1493.1 392.3z"/><path fill="url(#w29)" d="M1230.8 197.5L1500.9 379L1488 397z"/><path fill="url(#w30)" d="M1230.8 197.5L1496.1 384L1482.8 401.6z"/><path fill="url(#w31)" d="M1230.8 197.5L1491.4 388.9L1477.8 406.2z"/><path fill="url(#w32)" d="M1230.8 197.5L1486.7 393.8L1472.7 410.8z"/><path fill="url(#w33)" d="M1230.8 197.5L1481.9 398.7L1467.7 415.3z"/><path fill="url(#w34)" d="M1230.8 197.5L1477.2 403.6L1462.7 419.9z"/><path fill="url(#w35)" d="M1230.8 197.5L1472.6 408.4L1457.7 424.4z"/><path fill="url(#w36)" d="M1230.8 197.5L1467.9 413.3L1452.7 428.9z"/><path fill="url(#w37)" d="M1230.8 197.5L1463.5 418.4L1448 433.7z"/><path fill="url(#w38)" d="M1230.8 197.5L1459.2 423.5L1443.3 438.5z"/><path fill="url(#w39)" d="M1230.8 197.5L1454.8 428.6L1438.5 443.3z"/><path fill="url(#w40)" d="M1230.8 197.5L1450.4 433.8L1433.8 448.2z"/><path fill="url(#w41)" d="M1230.8 197.5L1446 439L1429 453.1z"/><path fill="url(#w42)" d="M1230.8 197.5L1441.5 444.2L1424.2 458z"/><path fill="url(#w43)" d="M1230.8 197.5L1437 449.5L1419.4 462.9z"/><path fill="url(#w44)" d="M1230.8 197.5L1432.5 454.7L1414.5 467.9z"/><path fill="url(#w45)" d="M1230.8 197.5L1427.9 460.1L1409.6 472.9z"/><path fill="url(#w46)" d="M1230.8 197.5L1423.3 465.4L1404.7 477.9z"/><path fill="url(#w47)" d="M1230.8 197.5L1418.7 470.9L1399.6 483z"/><path fill="url(#w48)" d="M1230.8 197.5L1414 476.4L1394.6 488.2z"/><path fill="url(#w49)" d="M1230.8 197.5L1409.2 481.9L1389.5 493.4z"/><path fill="url(#w50)" d="M1230.8 197.5L1404.4 487.6L1384.3 498.7z"/><path fill="url(#w51)" d="M1230.8 197.5L1399.5 493.3L1379 504.1z"/><path fill="url(#w52)" d="M1230.8 197.5L1394.5 499.1L1373.6 509.5z"/><path fill="url(#w53)" d="M1230.8 197.5L1389.5 505L1368.2 515z"/><path fill="url(#w54)" d="M1230.8 197.5L1384.3 510.9L1362.7 520.7z"/><path fill="url(#w55)" d="M1230.8 197.5L1379.1 517L1357 526.4z"/><path fill="url(#w56)" d="M1230.8 197.5L1373.8 523.3L1351.3 532.2z"/><path fill="url(#w57)" d="M1230.8 197.5L1368.3 529.6L1345.4 538.2z"/><path fill="url(#w58)" d="M1230.8 197.5L1362.8 536.1L1339.5 544.3z"/><path fill="url(#w59)" d="M1230.8 197.5L1357.1 542.7L1333.3 550.5z"/><path fill="url(#w60)" d="M1230.8 197.5L1351.3 549.5L1327.1 556.8z"/><path fill="url(#w61)" d="M1230.8 197.5L1345.3 556.4L1320.7 563.4z"/><path fill="url(#w62)" d="M1230.8 197.5L1339.2 563.5L1314.1 570.1z"/><path fill="url(#w63)" d="M1230.8 197.5L1332.9 570.9L1307.3 576.9z"/><path fill="url(#w64)" d="M1230.8 197.5L1326.5 578.4L1300.3 584z"/><path fill="url(#w65)" d="M1230.8 197.5L1318.8 581.9L1292.5 587z"/><path fill="url(#w66)" d="M1230.8 197.5L1311 584.6L1284.4 589.2z"/><path fill="url(#w67)" d="M1230.8 197.5L1302.8 586.1L1276.2 590.1z"/><path fill="url(#w68)" d="M1230.8 197.5L1294.5 586.7L1267.9 590.1z"/><path fill="url(#w69)" d="M1230.8 197.5L1285.2 580.1L1259.1 582.9z"/><path fill="url(#w70)" d="M1230.8 197.5L1276.2 572.7L1250.6 574.9z"/><path fill="url(#w71)" d="M1230.8 197.5L1267.5 565.6L1242.4 567.2z"/><path fill="url(#w72)" d="M1230.8 197.5L1259.2 558.9L1234.6 560z"/><path fill="url(#w73)" d="M1230.8 197.5L1251.3 552.5L1227.1 553z"/><path fill="url(#w74)" d="M1230.8 197.5L1243.6 546.2L1219.8 546.3z"/><path fill="url(#w75)" d="M1230.8 197.5L1236.2 540.1L1212.9 539.7z"/><path fill="url(#w76)" d="M1230.8 197.5L1229 533.9L1206.2 533z"/><path fill="url(#w77)" d="M1230.8 197.5L1222.1 527.8L1199.7 526.4z"/><path fill="url(#w78)" d="M1230.8 197.5L1215.5 521.6L1193.5 519.8z"/><path fill="url(#w79)" d="M1230.8 197.5L1209.1 515.3L1187.6 513.1z"/><path fill="url(#w80)" d="M1230.8 197.5L1203 509L1181.9 506.4z"/><path fill="url(#w81)" d="M1230.8 197.5L1197.1 502.6L1176.4 499.6z"/><path fill="url(#w82)" d="M1230.8 197.5L1191.5 496.3L1171.2 492.9z"/><path fill="url(#w83)" d="M1230.8 197.5L1186 490L1166.2 486.3z"/><path fill="url(#w84)" d="M1230.8 197.5L1180.8 483.8L1161.5 479.7z"/><path fill="url(#w85)" d="M1230.8 197.5L1175.8 477.7L1156.9 473.3z"/><path fill="url(#w86)" d="M1230.8 197.5L1171 471.6L1152.5 466.9z"/><path fill="url(#w87)" d="M1230.8 197.5L1166.4 465.7L1148.3 460.7z"/><path fill="url(#w88)" d="M1230.8 197.5L1161.9 459.9L1144.3 454.6z"/><path fill="url(#w89)" d="M1230.8 197.5L1157.7 454.2L1140.4 448.7z"/><path fill="url(#w90)" d="M1230.8 197.5L1153.5 448.6L1136.6 442.8z"/><path fill="url(#w91)" d="M1230.8 197.5L1149.6 443.1L1133 437z"/><path fill="url(#w92)" d="M1230.8 197.5L1145.7 437.8L1129.6 431.4z"/><path fill="url(#w93)" d="M1230.8 197.5L1142 432.5L1126.2 425.9z"/><path fill="url(#w94)" d="M1230.8 197.5L1138.4 427.3L1123 420.5z"/><path fill="url(#w95)" d="M1230.8 197.5L1134.9 422.2L1119.9 415.2z"/><path fill="url(#w96)" d="M1230.8 197.5L1131.6 417.2L1116.9 410z"/><path fill="url(#w97)" d="M1230.8 197.5L1128.3 412.3L1113.9 404.9z"/><path fill="url(#w98)" d="M1230.8 197.5L1125.2 407.5L1111.1 399.9z"/><path fill="url(#w99)" d="M1230.8 197.5L1122.1 402.8L1108.4 394.9z"/><path fill="url(#w100)" d="M1230.8 197.5L1119.1 398.2L1105.7 390.1z"/><path fill="url(#w101)" d="M1230.8 197.5L1116.2 393.6L1103.1 385.4z"/><path fill="url(#w102)" d="M1230.8 197.5L1113.4 389.1L1100.6 380.7z"/><path fill="url(#w103)" d="M1230.8 197.5L1110.6 384.7L1098.2 376.1z"/><path fill="url(#w104)" d="M1230.8 197.5L1107.9 380.4L1095.8 371.6z"/><path fill="url(#w105)" d="M1230.8 197.5L1105.3 376.1L1093.4 367.1z"/><path fill="url(#w106)" d="M1230.8 197.5L1102.7 371.9L1091.1 362.8z"/><path fill="url(#w107)" d="M1230.8 197.5L1100.2 367.7L1088.9 358.4z"/><path fill="url(#w108)" d="M1230.8 197.5L1097.7 363.6L1086.7 354.2z"/><path fill="url(#w109)" d="M1230.8 197.5L1095.3 359.6L1084.6 350z"/><path fill="url(#w110)" d="M1230.8 197.5L1092.9 355.6L1082.5 345.8z"/><path fill="url(#w111)" d="M1230.8 197.5L1090.6 351.6L1080.4 341.7z"/><path fill="url(#w112)" d="M1230.8 197.5L1088.2 347.7L1078.4 337.7z"/><path fill="url(#w113)" d="M1230.8 197.5L1086 343.8L1076.4 333.6z"/><path fill="url(#w114)" d="M1230.8 197.5L1083.8 340L1074.4 329.6z"/><path fill="url(#w115)" d="M1230.8 197.5L1081.6 336.1L1072.5 325.7z"/><path fill="url(#w116)" d="M1230.8 197.5L1079.4 332.4L1070.6 321.8z"/><path fill="url(#w117)" d="M1230.8 197.5L1077.3 328.6L1068.8 317.8z"/><path fill="url(#w118)" d="M1230.8 197.5L1075.3 324.8L1067 313.9z"/><path fill="url(#w119)" d="M1230.8 197.5L1073.2 321.1L1065.1 310.1z"/><path fill="url(#w120)" d="M1230.8 197.5L1071.2 317.3L1063.4 306.2z"/><path fill="url(#w121)" d="M1230.8 197.5L1069.2 313.6L1061.7 302.3z"/><path fill="url(#w122)" d="M1230.8 197.5L1067.2 309.9L1060 298.5z"/><path fill="url(#w123)" d="M1230.8 197.5L1065.3 306.2L1058.3 294.7z"/><path fill="url(#w124)" d="M1230.8 197.5L1063.4 302.5L1056.7 290.9z"/><path fill="url(#w125)" d="M1230.8 197.5L1061.6 298.8L1055.1 287z"/><path fill="url(#w126)" d="M1230.8 197.5L1059.7 295.1L1053.5 283.2z"/><path fill="url(#w127)" d="M1230.8 197.5L1057.9 291.4L1052 279.4z"/><path fill="url(#w128)" d="M1230.8 197.5L1056.2 287.6L1050.4 275.6z"/><path fill="url(#w129)" d="M1230.8 197.5L1054.3 284L1048.8 271.8z"/><path fill="url(#w130)" d="M1230.8 197.5L1052.4 280.3L1047.2 268z"/><path fill="url(#w131)" d="M1230.8 197.5L1050.5 276.6L1045.5 264.2z"/><path fill="url(#w132)" d="M1230.8 197.5L1048.6 273L1043.9 260.4z"/><path fill="url(#w133)" d="M1230.8 197.5L1046.7 269.3L1042.3 256.6z"/><path fill="url(#w134)" d="M1230.8 197.5L1044.9 265.5L1040.7 252.7z"/><path fill="url(#w135)" d="M1230.8 197.5L1043 261.8L1039.1 248.9z"/><path fill="url(#w136)" d="M1230.8 197.5L1041.2 258L1037.5 245z"/><path fill="url(#w137)" d="M1230.8 197.5L1039.3 254.2L1035.9 241.1z"/><path fill="url(#w138)" d="M1230.8 197.5L1037.5 250.4L1034.4 237.1z"/><path fill="url(#w139)" d="M1230.8 197.5L1035.7 246.5L1032.8 233.1z"/><path fill="url(#w140)" d="M1230.8 197.5L1033.9 242.6L1031.3 229.1z"/><path fill="url(#w141)" d="M1230.8 197.5L1032.1 238.6L1029.8 225z"/><path fill="url(#w142)" d="M1230.8 197.5L1030.3 234.7L1028.3 220.9z"/><path fill="url(#w143)" d="M1230.8 197.5L1028.6 230.6L1026.8 216.8z"/><path fill="url(#w144)" d="M1230.8 197.5L1026.8 226.5L1025.3 212.6z"/><path fill="url(#w145)" d="M1230.8 197.5L1025.1 222.4L1023.9 208.3z"/><path fill="url(#w146)" d="M1230.8 197.5L1023.3 218.2L1022.4 204z"/><path fill="url(#w147)" d="M1230.8 197.5L1021.7 214L1021 199.7z"/><path fill="url(#w148)" d="M1230.8 197.5L1020 209.7L1019.6 195.3z"/><path fill="url(#w149)" d="M1230.8 197.5L1018.3 205.3L1018.3 190.8z"/><path fill="url(#w150)" d="M1230.8 197.5L1016.7 200.9L1017 186.3z"/><path fill="url(#w151)" d="M1230.8 197.5L1015.2 196.4L1015.7 181.7z"/><path fill="url(#w152)" d="M1230.8 197.5L1013.6 191.8L1014.5 177.1z"/><path fill="url(#w153)" d="M1230.8 197.5L1012.1 187.2L1013.4 172.3z"/><path fill="url(#w154)" d="M1230.8 197.5L1010.8 182.5L1012.3 167.6z"/><path fill="url(#w155)" d="M1230.8 197.5L1009.5 177.7L1011.3 162.7z"/><path fill="url(#w156)" d="M1230.8 197.5L1008.2 172.9L1010.4 157.8z"/><path fill="url(#w157)" d="M1230.8 197.5L1007.1 168L1009.6 152.9z"/><path fill="url(#w158)" d="M1230.8 197.5L1006.1 163.1L1009 147.9z"/><path fill="url(#w159)" d="M1230.8 197.5L1005.3 158.2L1008.5 142.9z"/><path fill="url(#w160)" d="M1230.8 197.5L1004.8 153.2L1008.3 137.9z"/><path fill="url(#w161)" d="M1230.8 197.5L1004.5 148.1L1008.3 132.9z"/><path fill="url(#w162)" d="M1230.8 197.5L1004.5 143.2L1008.7 127.9z"/><path fill="url(#w163)" d="M1230.8 197.5L1004.9 138.2L1009.5 123z"/><path fill="url(#w164)" d="M1230.8 197.5L1005.8 133.4L1010.7 118.3z"/><path fill="url(#w165)" d="M1230.8 197.5L1007.3 128.7L1012.5 113.7z"/><path fill="url(#w166)" d="M1230.8 197.5L1008.7 124L1014.2 109.1z"/><path fill="url(#w167)" d="M1230.8 197.5L1010.3 119.4L1016.1 104.6z"/><path fill="url(#w168)" d="M1230.8 197.5L1012.1 114.8L1018.2 100.2z"/><path fill="url(#w169)" d="M1230.8 197.5L1014.5 110.5L1020.9 96z"/><path fill="url(#w170)" d="M1230.8 197.5L1017.7 106.6L1024.4 92.3z"/><path fill="url(#w171)" d="M1230.8 197.5L1021.9 103.2L1028.8 89.2z"/><path fill="url(#w172)" d="M1230.8 197.5L1027 100.3L1034.1 86.7z"/><path fill="url(#w173)" d="M1230.8 197.5L1033.4 98.2L1040.6 85z"/><path fill="url(#w174)" d="M1230.8 197.5L1040.7 96.8L1047.9 84.1z"/><path fill="url(#w175)" d="M1230.8 197.5L1048.5 96L1055.8 83.9z"/><path fill="url(#w176)" d="M1230.8 197.5L1056.5 95.6L1063.8 84z"/><path fill="url(#w177)" d="M1230.8 197.5L1064.3 95.4L1071.6 84.4z"/><path fill="url(#w178)" d="M1230.8 197.5L1071.7 95.4L1079.1 84.8z"/><path fill="url(#w179)" d="M1230.8 197.5L1079 95.5L1086.3 85.4z"/><path fill="url(#w180)" d="M1230.8 197.5L1085.9 95.7L1093.1 86z"/><path fill="url(#w181)" d="M1230.8 197.5L1092.5 95.9L1099.7 86.7z"/><path fill="url(#w182)" d="M1230.8 197.5L1098.8 96.2L1106 87.4z"/><path fill="url(#w183)" d="M1230.8 197.5L1104.8 96.5L1111.9 88.2z"/><path fill="url(#w184)" d="M1230.8 197.5L1110.4 96.9L1117.6 88.9z"/><path fill="url(#w185)" d="M1230.8 197.5L1115.9 97.2L1122.9 89.7z"/><path fill="url(#w186)" d="M1230.8 197.5L1121 97.6L1128.1 90.4z"/><path fill="url(#w187)" d="M1230.8 197.5L1125.9 98L1132.9 91.1z"/><path fill="url(#w188)" d="M1230.8 197.5L1130.6 98.3L1137.6 91.8z"/><path fill="url(#w189)" d="M1230.8 197.5L1135 98.7L1142 92.4z"/><path fill="url(#w190)" d="M1230.8 197.5L1139.3 99L1146.2 93z"/><path fill="url(#w191)" d="M1230.8 197.5L1143.4 99.4L1150.2 93.7z"/><path fill="url(#w192)" d="M1230.8 197.5L1147.3 99.7L1154.1 94.3z"/><path fill="url(#w193)" d="M1230.8 197.5L1151 100L1157.8 94.8z"/><path fill="url(#w194)" d="M1230.8 197.5L1154.6 100.3L1161.4 95.4z"/><path fill="url(#w195)" d="M1230.8 197.5L1158.1 100.6L1164.8 95.9z"/><path fill="url(#w196)" d="M1230.8 197.5L1161.4 100.9L1168.1 96.4z"/><path fill="url(#w197)" d="M1230.8 197.5L1164.6 101.2L1171.3 96.9z"/><path fill="url(#w198)" d="M1230.8 197.5L1167.7 101.5L1174.4 97.4z"/><path fill="url(#w199)" d="M1230.8 197.5L1170.7 101.8L1177.4 97.9z"/><path fill="url(#w200)" d="M1230.8 197.5L1173.6 102L1180.3 98.4z"/><path fill="url(#w201)" d="M1230.8 197.5L1176.5 102.3L1183.1 98.8z"/><path fill="url(#w202)" d="M1230.8 197.5L1179.2 102.5L1185.8 99.2z"/><path fill="url(#w203)" d="M1230.8 197.5L1181.9 102.8L1188.5 99.7z"/><path fill="url(#w204)" d="M1230.8 197.5L1184.5 103L1191 100.1z"/><path fill="url(#w205)" d="M1230.8 197.5L1187 103.2L1193.5 100.5z"/><path fill="url(#w206)" d="M1230.8 197.5L1189.5 103.5L1196 100.9z"/><path fill="url(#w207)" d="M1230.8 197.5L1191.9 103.7L1198.4 101.3z"/><path fill="url(#w208)" d="M1230.8 197.5L1194.3 103.9L1200.8 101.6z"/><path fill="url(#w209)" d="M1230.8 197.5L1196.6 104.1L1203.1 102z"/><path fill="url(#w210)" d="M1230.8 197.5L1198.9 104.3L1205.3 102.4z"/><path fill="url(#w211)" d="M1230.8 197.5L1201.1 104.5L1207.5 102.7z"/><path fill="url(#w212)" d="M1230.8 197.5L1203.3 104.8L1209.7 103.1z"/><path fill="url(#w213)" d="M1230.8 197.5L1205.5 105L1211.8 103.5z"/><path fill="url(#w214)" d="M1230.8 197.5L1207.6 105.2L1213.9 103.8z"/><path fill="url(#w215)" d="M1230.8 197.5L1209.7 105.4L1216 104.1z"/><path fill="url(#w216)" d="M1230.8 197.5L1211.8 105.6L1218 104.5z"/><path fill="url(#w217)" d="M1230.8 197.5L1213.8 105.8L1220.1 104.8z"/><path fill="url(#w218)" d="M1230.8 197.5L1215.8 106L1222.1 105.2z"/><path fill="url(#w219)" d="M1230.8 197.5L1217.8 106.2L1224 105.5z"/><path fill="url(#w220)" d="M1230.8 197.5L1219.8 106.4L1226 105.8z"/><path fill="url(#w221)" d="M1230.8 197.5L1221.7 106.6L1227.9 106.1z"/><path fill="url(#w222)" d="M1230.8 197.5L1223.6 106.8L1229.8 106.5z"/><path fill="url(#w223)" d="M1230.8 197.5L1225.6 106.9L1231.7 106.8z"/><path fill="url(#w224)" d="M1230.8 197.5L1227.5 107.1L1233.6 107.1z"/><path fill="url(#w225)" d="M1230.8 197.5L1229.4 107.3L1235.5 107.5z"/><path fill="url(#w226)" d="M1230.8 197.5L1231.3 107.5L1237.4 107.8z"/><path fill="url(#w227)" d="M1230.8 197.5L1233.1 107.7L1239.2 108.1z"/><path fill="url(#w228)" d="M1230.8 197.5L1235 107.9L1241.1 108.4z"/><path fill="url(#w229)" d="M1230.8 197.5L1236.9 108.1L1242.9 108.8z"/><path fill="url(#w230)" d="M1230.8 197.5L1238.8 108.3L1244.8 109z"/><path fill="url(#w231)" d="M1230.8 197.5L1240.6 108.4L1246.7 109.2z"/><path fill="url(#w232)" d="M1230.8 197.5L1242.5 108.4L1248.5 109.4z"/><path fill="url(#w233)" d="M1230.8 197.5L1244.4 108.5L1250.4 109.7z"/><path fill="url(#w234)" d="M1230.8 197.5L1246.3 108.6L1252.3 109.9z"/><path fill="url(#w235)" d="M1230.8 197.5L1248.2 108.7L1254.2 110.1z"/><path fill="url(#w236)" d="M1230.8 197.5L1250.1 108.8L1256.1 110.3z"/><path fill="url(#w237)" d="M1230.8 197.5L1252.1 108.9L1258 110.6z"/><path fill="url(#w238)" d="M1230.8 197.5L1254 109L1260 110.8z"/><path fill="url(#w239)" d="M1230.8 197.5L1256 109.1L1261.9 111z"/><path fill="url(#w240)" d="M1230.8 197.5L1257.9 109.2L1263.9 111.3z"/><path fill="url(#w241)" d="M1230.8 197.5L1259.9 109.3L1265.9 111.5z"/><path fill="url(#w242)" d="M1230.8 197.5L1262 109.4L1267.9 111.8z"/><path fill="url(#w243)" d="M1230.8 197.5L1264 109.6L1269.9 112z"/><path fill="url(#w244)" d="M1230.8 197.5L1266.1 109.7L1272 112.3z"/><path fill="url(#w245)" d="M1230.8 197.5L1268.2 109.8L1274.1 112.5z"/><path fill="url(#w246)" d="M1230.8 197.5L1270.3 109.9L1276.2 112.8z"/><path fill="url(#w247)" d="M1230.8 197.5L1272.5 110L1278.4 113.1z"/><path fill="url(#w248)" d="M1230.8 197.5L1274.7 110.2L1280.6 113.4z"/><path fill="url(#w249)" d="M1230.8 197.5L1277 110.3L1282.8 113.6z"/><path fill="url(#w250)" d="M1230.8 197.5L1279.3 110.4L1285.1 113.9z"/><path fill="url(#w251)" d="M1230.8 197.5L1281.6 110.6L1287.4 114.2z"/><path fill="url(#w252)" d="M1230.8 197.5L1284 110.7L1289.8 114.5z"/><path fill="url(#w253)" d="M1230.8 197.5L1286.4 110.8L1292.2 114.8z"/><path fill="url(#w254)" d="M1230.8 197.5L1288.9 111L1294.7 115.1z"/><path fill="url(#w255)" d="M1230.8 197.5L1291.5 111.1L1297.2 115.5z"/><path fill="url(#w256)" d="M1230.8 197.5L1294.1 111.3L1299.8 115.8z"/><path fill="url(#w257)" d="M1230.8 197.5L1296.8 111.5L1302.5 116.2z"/><path fill="url(#w258)" d="M1230.8 197.5L1299.6 111.6L1305.3 116.5z"/><path fill="url(#w259)" d="M1230.8 197.5L1302.5 111.8L1308.1 116.9z"/><path fill="url(#w260)" d="M1230.8 197.5L1305.4 112L1311 117.2z"/><path fill="url(#w261)" d="M1230.8 197.5L1308.5 112.1L1314.1 117.6z"/><path fill="url(#w262)" d="M1230.8 197.5L1311.6 112.3L1317.2 118z"/><path fill="url(#w263)" d="M1230.8 197.5L1314.9 112.5L1320.5 118.4z"/><path fill="url(#w264)" d="M1230.8 197.5L1318.3 112.7L1323.8 118.9z"/><path fill="url(#w265)" d="M1230.8 197.5L1321.8 112.9L1327.3 119.3z"/><path fill="url(#w266)" d="M1230.8 197.5L1325.5 113.1L1331 119.8z"/><path fill="url(#w267)" d="M1230.8 197.5L1329.3 113.4L1334.8 120.3z"/><path fill="url(#w268)" d="M1230.8 197.5L1333.3 113.6L1338.8 120.8z"/><path fill="url(#w269)" d="M1230.8 197.5L1337.5 113.8L1342.9 121.3z"/><path fill="url(#w270)" d="M1230.8 197.5L1341.9 114.1L1347.3 121.8z"/><path fill="url(#w271)" d="M1230.8 197.5L1346.5 114.3L1351.9 122.4z"/><path fill="url(#w272)" d="M1230.8 197.5L1351.4 114.6L1356.8 123z"/><path fill="url(#w273)" d="M1230.8 197.5L1356.5 114.9L1361.9 123.6z"/><path fill="url(#w274)" d="M1230.8 197.5L1362 115.2L1367.3 124.3z"/><path fill="url(#w275)" d="M1230.8 197.5L1367.8 115.5L1373 125z"/><path fill="url(#w276)" d="M1230.8 197.5L1373.9 115.8L1379.2 125.8z"/><path fill="url(#w277)" d="M1230.8 197.5L1380.5 116.2L1385.7 126.6z"/><path fill="url(#w278)" d="M1230.8 197.5L1387.6 116.6L1392.7 127.4z"/><path fill="url(#w279)" d="M1230.8 197.5L1395.1 117L1400.2 128.4z"/><path fill="url(#w280)" d="M1230.8 197.5L1403.3 117.4L1408.4 129.3z"/><path fill="url(#w281)" d="M1230.8 197.5L1412.2 117.9L1417.2 130.4z"/><path fill="url(#w282)" d="M1230.8 197.5L1421.8 118.4L1426.7 131.6z"/><path fill="url(#w283)" d="M1230.8 197.5L1432.3 118.9L1437.2 132.8z"/><path fill="url(#w284)" d="M1230.8 197.5L1443.9 119.5L1448.7 134.2z"/><path fill="url(#w285)" d="M1230.8 197.5L1456.7 120.2L1461.4 135.7z"/><path fill="url(#w286)" d="M1230.8 197.5L1470.9 120.9L1475.6 137.4z"/><path fill="url(#w287)" d="M1230.8 197.5L1486.8 121.7L1491.4 139.2z"/><path fill="url(#w288)" d="M1230.8 197.5L1504.8 122.5L1509.3 141.3z"/><path fill="url(#w289)" d="M1230.8 197.5L1525.3 123.5L1529.7 143.7z"/><path fill="url(#w290)" d="M1230.8 197.5L1548.8 124.7L1553.1 146.5z"/><path fill="url(#w291)" d="M1230.8 197.5L1576.2 126L1580.2 149.6z"/><path fill="url(#w292)" d="M1230.8 197.5L1608.4 127.5L1612.3 153.4z"/><path fill="url(#w293)" d="M1230.8 197.5L1647 129.3L1650.7 157.8z"/><path fill="url(#w294)" d="M1230.8 197.5L1694 131.6L1697.5 163.2z"/><path fill="url(#w295)" d="M1230.8 197.5L1698.8 140.9L1701.6 172.8z"/><path fill="url(#w296)" d="M1230.8 197.5L1703.1 150.4L1705.2 182.6z"/><path fill="url(#w297)" d="M1230.8 197.5L1706.1 160.1L1707.6 192.5z"/><path fill="url(#w298)" d="M1230.8 197.5L1701.4 170.4L1702.2 202.4z"/><path fill="url(#w299)" d="M1230.8 197.5L1691.6 180.6L1691.7 212z"/></g><use href="#fan"/><path d="M1000 80H1680V600H1000zM1499.8 153.1L1100.8 110.1L1207 450.3z" fill="#000" fill-opacity="0.4" fill-rule="evenodd"/><path d="M1000 80H1680V600H1000zM1293.6 565.5L1293.5 565.5L1293.4 565.4L1293.4 565.5L1293.3 565.6L1293.1 565.6L1292.9 565.6L1292.7 565.5L1292.6 565.7L1292.5 565.8L1292.4 565.9L1292.3 566L1292 566L1291.7 566L1291.4 565.9L1291.1 565.9L1290.8 565.9L1290.4 565.9L1290 565.8L1289.4 565.6L1288.7 565.1L1287.7 564.5L1286.5 563.8L1285.2 562.9L1283.8 561.8L1282.1 560.5L1280.2 559L1278 557.2L1275.6 555.2L1273 553L1270.1 550.5L1266.9 547.8L1263.4 544.9L1259.4 541.7L1255 538.1L1250.2 534.1L1245.1 529.9L1239.5 525.3L1233.5 520.2L1227 514.4L1220 508L1212.5 500.8L1204.5 492.5L1195.4 482.5L1185 470.2L1173.6 455.9L1161.6 439.9L1148.9 422L1135.6 402.3L1122.1 380.9L1108.4 358.3L1094.9 335.2L1081.9 311.6L1070 288.1L1059.5 265.4L1050.3 243.6L1042.3 223.3L1035.7 204.8L1030.5 188.3L1026.7 173.7L1024 161.1L1022.4 150.1L1021.8 140.7L1022.1 132.6L1023.2 125.7L1025.2 119.7L1028 114.7L1031.4 110.7L1035.4 107.6L1040 105.2L1044.9 103.6L1050.2 102.5L1055.7 101.8L1061.5 101.4L1067.5 101.1L1073.6 101.1L1079.6 101.1L1085.7 101.2L1091.8 101.3L1098.1 101.6L1104.6 102L1111.3 102.4L1118.1 102.9L1125.2 103.5L1132.6 104.1L1140.2 104.9L1148.1 105.6L1156.4 106.5L1165 107.4L1173.9 108.3L1183.2 109.3L1192.9 110.4L1203 111.5L1213.5 112.7L1224.5 113.9L1235.8 115.2L1247.7 116.6L1259.9 118L1272.7 119.4L1285.8 120.9L1299.4 122.5L1313.4 124.1L1327.8 125.7L1342.6 127.4L1357.7 129.1L1373 130.9L1388.6 132.7L1404.2 134.5L1419.6 136.2L1434.7 138L1449.6 139.7L1464.5 141.4L1479.2 143L1493.3 144.6L1506.6 146.2L1519.5 147.6L1531.7 149L1543.3 150.3L1554.1 151.6L1564.3 152.8L1573.8 153.9L1582.6 154.9L1590.9 155.8L1598.5 156.7L1605.7 157.5L1612.4 158.3L1618.8 159L1624.8 159.7L1630.5 160.3L1635.7 160.9L1640.6 161.5L1645.2 162L1649.3 162.5L1653 162.9L1656.3 163.3L1659.2 163.6L1661.9 163.9L1664.3 164.2L1666.5 164.5L1668.5 164.7L1670.2 164.9L1671.6 165L1672.8 165.2L1673.9 165.3L1674.9 165.4L1675.9 165.5L1676.7 165.6L1677.5 165.7L1678.3 165.8L1679.1 165.9L1679.9 166L1680.7 166.1L1681.4 166.2L1682 166.2L1682.4 166.3L1682.7 166.3L1683 166.3L1683.2 166.4L1683.4 166.4L1683.5 166.4L1683.6 166.4z" fill="#262626" fill-rule="evenodd"/></g>
<circle cx="1230.8" cy="197.5" r="36" fill="url(#wglow)"/>
<path d="M1019.8 89.8H1659.5V581.2H1019.8z" fill="none" stroke="#a2a2a2" stroke-width="1.4"/>
<line x1="1013.5" y1="581.2" x2="1019.8" y2="581.2" stroke="#d4d4d4" stroke-width="1.4"/>
<text x="1012.8" y="587.4000000000001" font-size="14.3" fill="#dcdcdc" text-anchor="end">0</text>
<line x1="1020.0" y1="581.2" x2="1020.0" y2="587.6" stroke="#d4d4d4" stroke-width="1.4"/>
<text x="1019.5" y="603" font-size="14.3" fill="#dcdcdc" text-anchor="middle">0</text>
<line x1="1013.5" y1="540.3000000000001" x2="1019.8" y2="540.3000000000001" stroke="#d4d4d4" stroke-width="1.4"/>
<text x="1012.8" y="546.5000000000001" font-size="14.3" fill="#dcdcdc" text-anchor="end">0,05</text>
<line x1="1073.25" y1="581.2" x2="1073.25" y2="587.6" stroke="#d4d4d4" stroke-width="1.4"/>
<text x="1072.75" y="603" font-size="14.3" fill="#dcdcdc" text-anchor="middle">0,05</text>
<line x1="1013.5" y1="499.40000000000003" x2="1019.8" y2="499.40000000000003" stroke="#d4d4d4" stroke-width="1.4"/>
<text x="1012.8" y="505.6" font-size="14.3" fill="#dcdcdc" text-anchor="end">0,1</text>
<line x1="1126.5" y1="581.2" x2="1126.5" y2="587.6" stroke="#d4d4d4" stroke-width="1.4"/>
<text x="1126.0" y="603" font-size="14.3" fill="#dcdcdc" text-anchor="middle">0,1</text>
<line x1="1013.5" y1="458.5" x2="1019.8" y2="458.5" stroke="#d4d4d4" stroke-width="1.4"/>
<text x="1012.8" y="464.7" font-size="14.3" fill="#dcdcdc" text-anchor="end">0,15</text>
<line x1="1179.75" y1="581.2" x2="1179.75" y2="587.6" stroke="#d4d4d4" stroke-width="1.4"/>
<text x="1179.25" y="603" font-size="14.3" fill="#dcdcdc" text-anchor="middle">0,15</text>
<line x1="1013.5" y1="417.6" x2="1019.8" y2="417.6" stroke="#d4d4d4" stroke-width="1.4"/>
<text x="1012.8" y="423.8" font-size="14.3" fill="#dcdcdc" text-anchor="end">0,2</text>
<line x1="1233.0" y1="581.2" x2="1233.0" y2="587.6" stroke="#d4d4d4" stroke-width="1.4"/>
<text x="1232.5" y="603" font-size="14.3" fill="#dcdcdc" text-anchor="middle">0,2</text>
<line x1="1013.5" y1="376.70000000000005" x2="1019.8" y2="376.70000000000005" stroke="#d4d4d4" stroke-width="1.4"/>
<text x="1012.8" y="382.90000000000003" font-size="14.3" fill="#dcdcdc" text-anchor="end">0,25</text>
<line x1="1286.25" y1="581.2" x2="1286.25" y2="587.6" stroke="#d4d4d4" stroke-width="1.4"/>
<text x="1285.75" y="603" font-size="14.3" fill="#dcdcdc" text-anchor="middle">0,25</text>
<line x1="1013.5" y1="335.8" x2="1019.8" y2="335.8" stroke="#d4d4d4" stroke-width="1.4"/>
<text x="1012.8" y="342.0" font-size="14.3" fill="#dcdcdc" text-anchor="end">0,3</text>
<line x1="1339.5" y1="581.2" x2="1339.5" y2="587.6" stroke="#d4d4d4" stroke-width="1.4"/>
<text x="1339.0" y="603" font-size="14.3" fill="#dcdcdc" text-anchor="middle">0,3</text>
<line x1="1013.5" y1="294.90000000000003" x2="1019.8" y2="294.90000000000003" stroke="#d4d4d4" stroke-width="1.4"/>
<text x="1012.8" y="301.1" font-size="14.3" fill="#dcdcdc" text-anchor="end">0,35</text>
<line x1="1392.75" y1="581.2" x2="1392.75" y2="587.6" stroke="#d4d4d4" stroke-width="1.4"/>
<text x="1392.25" y="603" font-size="14.3" fill="#dcdcdc" text-anchor="middle">0,35</text>
<line x1="1013.5" y1="254.0" x2="1019.8" y2="254.0" stroke="#d4d4d4" stroke-width="1.4"/>
<text x="1012.8" y="260.2" font-size="14.3" fill="#dcdcdc" text-anchor="end">0,4</text>
<line x1="1446.0" y1="581.2" x2="1446.0" y2="587.6" stroke="#d4d4d4" stroke-width="1.4"/>
<text x="1445.5" y="603" font-size="14.3" fill="#dcdcdc" text-anchor="middle">0,4</text>
<line x1="1013.5" y1="213.10000000000002" x2="1019.8" y2="213.10000000000002" stroke="#d4d4d4" stroke-width="1.4"/>
<text x="1012.8" y="219.3" font-size="14.3" fill="#dcdcdc" text-anchor="end">0,45</text>
<line x1="1499.25" y1="581.2" x2="1499.25" y2="587.6" stroke="#d4d4d4" stroke-width="1.4"/>
<text x="1498.75" y="603" font-size="14.3" fill="#dcdcdc" text-anchor="middle">0,45</text>
<line x1="1013.5" y1="172.20000000000005" x2="1019.8" y2="172.20000000000005" stroke="#d4d4d4" stroke-width="1.4"/>
<text x="1012.8" y="178.40000000000003" font-size="14.3" fill="#dcdcdc" text-anchor="end">0,5</text>
<line x1="1552.5" y1="581.2" x2="1552.5" y2="587.6" stroke="#d4d4d4" stroke-width="1.4"/>
<text x="1552.0" y="603" font-size="14.3" fill="#dcdcdc" text-anchor="middle">0,5</text>
<line x1="1013.5" y1="131.3" x2="1019.8" y2="131.3" stroke="#d4d4d4" stroke-width="1.4"/>
<text x="1012.8" y="137.5" font-size="14.3" fill="#dcdcdc" text-anchor="end">0,55</text>
<line x1="1605.75" y1="581.2" x2="1605.75" y2="587.6" stroke="#d4d4d4" stroke-width="1.4"/>
<text x="1605.25" y="603" font-size="14.3" fill="#dcdcdc" text-anchor="middle">0,55</text>
<g stroke="#fff" stroke-opacity="0.94" stroke-width="1.35"><rect x="1271.7" y="181.5" width="13.8" height="13.8" fill="none"/><rect x="1323.7" y="173.3" width="13.8" height="13.8" fill="none"/><rect x="1377.6" y="164.4" width="13.8" height="13.8" fill="none"/><rect x="1435.5" y="154.5" width="13.8" height="13.8" fill="none"/><rect x="1492.5" y="145.1" width="13.8" height="13.8" fill="none"/><rect x="1183.9" y="162.8" width="13.8" height="13.8" fill="none"/><rect x="1153.5" y="142.1" width="13.8" height="13.8" fill="none"/><rect x="1129.4" y="125.8" width="13.8" height="13.8" fill="none"/><rect x="1109.8" y="112.5" width="13.8" height="13.8" fill="none"/><rect x="1093.6" y="101.6" width="13.8" height="13.8" fill="none"/><rect x="1220.0" y="221.4" width="13.8" height="13.8" fill="rgba(200,200,255,0.36)"/><rect x="1217.4" y="259.5" width="13.8" height="13.8" fill="rgba(200,200,255,0.36)"/><rect x="1211.5" y="305.3" width="13.8" height="13.8" fill="rgba(200,200,255,0.36)"/><rect x="1207.3" y="361.4" width="13.8" height="13.8" fill="none"/><rect x="1199.4" y="444.0" width="13.8" height="13.8" fill="none"/><rect x="1203.4" y="193.0" width="13.8" height="13.8" fill="none"/><rect x="1183.5" y="196.3" width="13.8" height="13.8" fill="none"/><rect x="1164.0" y="199.6" width="13.8" height="13.8" fill="none"/><rect x="1144.8" y="202.8" width="13.8" height="13.8" fill="none"/><rect x="1125.9" y="205.9" width="13.8" height="13.8" fill="none"/><rect x="1243.5" y="203.2" width="13.8" height="13.8" fill="none"/><rect x="1266.3" y="218.6" width="13.8" height="13.8" fill="none"/><rect x="1292.5" y="236.4" width="13.8" height="13.8" fill="none"/><rect x="1323.0" y="257.0" width="13.8" height="13.8" fill="none"/><rect x="1359.1" y="281.5" width="13.8" height="13.8" fill="none"/><rect x="1225.3" y="171.4" width="13.8" height="13.8" fill="rgba(255,255,220,0.42)"/><rect x="1226.8" y="155.3" width="13.8" height="13.8" fill="rgba(255,255,220,0.42)"/><rect x="1228.1" y="141.0" width="13.8" height="13.8" fill="rgba(255,255,220,0.42)"/><rect x="1229.4" y="128.1" width="13.8" height="13.8" fill="rgba(255,255,220,0.42)"/><rect x="1230.4" y="116.4" width="13.8" height="13.8" fill="none"/></g>
<rect x="1223" y="189.9" width="13" height="13" fill="none" stroke="#000" stroke-width="1.7"/>
<g stroke="#000" stroke-width="1.2"><circle cx="1152" cy="117.9" r="4.4" fill="#12a012"/><circle cx="1504.8" cy="150.6" r="4.2" fill="#a80000"/><circle cx="1167" cy="208.5" r="4.6" fill="#00a8a8"/><circle cx="1338.6" cy="315.3" r="3.9" fill="#98009a"/><circle cx="1203" cy="452.9" r="4.2" fill="#2a00a0"/><circle cx="1217.8" cy="313.6" r="4.2" fill="#6a6ac8"/><circle cx="1222" cy="266.4" r="4.2" fill="#8c8cc6"/><circle cx="1225.4" cy="229.4" r="4.2" fill="#a4a4c6"/><circle cx="1234" cy="126" r="4.6" fill="#c4be22"/><circle cx="1232.5" cy="149.3" r="4.3" fill="#b8b86e"/><circle cx="1231" cy="163.9" r="4.8" fill="#bcbc8c"/><circle cx="1229.7" cy="180.5" r="4.2" fill="#bebea4"/><circle cx="1228.5" cy="198.6" r="4.2" fill="#fff"/></g>
<rect x="1441.1" y="429.1" width="212.0" height="144.39999999999998" fill="url(#insg)"/>
<path clip-path="url(#insc)" d="M1347.8 382.2L1747.8 623.0L1747.8 379.1L1347.8 379.1z" fill="#000" fill-opacity="0.4"/>
<rect x="1441.1" y="429.1" width="212.0" height="144.39999999999998" fill="none" stroke="#8c8c74" stroke-width="1.6"/>
<rect x="1539.6" y="493.5" width="13.6" height="13.6" fill="none" stroke="#fff" stroke-width="1.6"/>
<circle cx="1510.1" cy="520.2" r="4.4" fill="#b4ae26" stroke="#000" stroke-width="1.2"/>
<text x="52.3" y="648.8" font-size="26.9" fill="#f0f0f0" textLength="232.7" lengthAdjust="spacingAndGlyphs">Avg dE2000: 3,49</text>
<text x="48.3" y="689.7" font-size="26.9" fill="#f0f0f0" textLength="240.7" lengthAdjust="spacingAndGlyphs">Max dE2000: 9,12</text>
<text x="16.4" y="737.2" font-size="26.9" fill="#f0f0f0" textLength="218" lengthAdjust="spacingAndGlyphs">Current Reading</text>
<text x="16.4" y="772.6" font-size="23.5" fill="#f0f0f0" textLength="101.6" lengthAdjust="spacingAndGlyphs">x: 0,4185</text>
<text x="172.9" y="772.6" font-size="23.5" fill="#f0f0f0" textLength="102.1" lengthAdjust="spacingAndGlyphs">y: 0,5115</text>
<text x="16.4" y="813.5" font-size="23.5" fill="#f0f0f0" textLength="109.8" lengthAdjust="spacingAndGlyphs">fL: 103,77</text>
<text x="16.4" y="847.3" font-size="23.5" fill="#f0f0f0" textLength="158.6" lengthAdjust="spacingAndGlyphs">cd/m²: 355,54</text>
<rect x="358.2" y="656.8" width="250.3" height="179.0" fill="#262626"/>
<line x1="358.2" y1="791.05" x2="608.5" y2="791.05" stroke="#939393" stroke-width="1.5"/>
<line x1="358.2" y1="746.3" x2="608.5" y2="746.3" stroke="#939393" stroke-width="1.5"/>
<line x1="358.2" y1="701.55" x2="608.5" y2="701.55" stroke="#939393" stroke-width="1.5"/>
<path d="M358.2 656.8H608.5V835.8H358.2z" fill="none" stroke="#a2a2a2" stroke-width="1.3"/>
<line x1="352.7" y1="835.8" x2="358.2" y2="835.8" stroke="#d4d4d4" stroke-width="1.4"/>
<text x="351.59999999999997" y="841.1999999999999" font-size="14.3" fill="#dcdcdc" text-anchor="end">80</text>
<line x1="352.7" y1="791.05" x2="358.2" y2="791.05" stroke="#d4d4d4" stroke-width="1.4"/>
<text x="351.59999999999997" y="796.4499999999999" font-size="14.3" fill="#dcdcdc" text-anchor="end">90</text>
<line x1="352.7" y1="746.3" x2="358.2" y2="746.3" stroke="#d4d4d4" stroke-width="1.4"/>
<text x="351.59999999999997" y="751.6999999999999" font-size="14.3" fill="#dcdcdc" text-anchor="end">100</text>
<line x1="352.7" y1="701.55" x2="358.2" y2="701.55" stroke="#d4d4d4" stroke-width="1.4"/>
<text x="351.59999999999997" y="706.9499999999999" font-size="14.3" fill="#dcdcdc" text-anchor="end">110</text>
<line x1="352.7" y1="656.8" x2="358.2" y2="656.8" stroke="#d4d4d4" stroke-width="1.4"/>
<text x="351.59999999999997" y="662.1999999999999" font-size="14.3" fill="#dcdcdc" text-anchor="end">120</text>
<line x1="358.2" y1="835.8" x2="358.2" y2="841.3" stroke="#d4d4d4" stroke-width="1.4"/>
<line x1="608.5" y1="835.8" x2="608.5" y2="841.3" stroke="#d4d4d4" stroke-width="1.2"/>
<text x="468.3" y="650.4" font-size="13.7" fill="#dcdcdc" text-anchor="middle">RGB Balance</text>
<text x="483.8" y="853.2" font-size="14.3" fill="#dcdcdc" text-anchor="middle">100%</text>
<rect x="383" y="754.8" width="65.6" height="80.5" fill="url(#rb)" stroke="#000" stroke-width="1.2"/>
<rect x="448.6" y="750.8" width="66.2" height="84.5" fill="url(#gbar)" stroke="#000" stroke-width="1.2"/>
<rect x="516.4" y="689.6" width="65.2" height="145.7" fill="url(#bb)" stroke="#000" stroke-width="1.2"/>
<rect x="628.1999999999999" y="623.6" width="731.0" height="236.8" fill="#000"/>
<rect x="629.4" y="624.9" width="728.6" height="28.7" fill="url(#thg)"/>
<text transform="translate(878.0 644.8) scale(1.62 1)" font-size="13.4" fill="#fff" text-anchor="middle" stroke="#fff" stroke-width="0.55">20%</text>
<text transform="translate(984.4 644.8) scale(1.62 1)" font-size="13.4" fill="#fff" text-anchor="middle" stroke="#fff" stroke-width="0.55">40%</text>
<text transform="translate(1090.8 644.8) scale(1.62 1)" font-size="13.4" fill="#fff" text-anchor="middle" stroke="#fff" stroke-width="0.55">60%</text>
<text transform="translate(1197.2 644.8) scale(1.62 1)" font-size="13.4" fill="#fff" text-anchor="middle" stroke="#fff" stroke-width="0.55">80%</text>
<text transform="translate(1303.6 644.8) scale(1.62 1)" font-size="13.4" fill="#fff" text-anchor="middle" stroke="#fff" stroke-width="0.55">100%</text>
<rect x="629.4" y="653.6" width="728.6" height="25.95" fill="#404040"/>
<text transform="translate(648.3 673.0) scale(1.44 1)" font-size="15.6" fill="#f4f4f4" font-weight="bold">x: CIE31</text>
<text transform="translate(831.4 673.0) scale(1.44 1)" font-size="15.6" fill="#f0f0f0" stroke="#f0f0f0" stroke-width="0.3">0,3306</text>
<text transform="translate(937.8 673.0) scale(1.44 1)" font-size="15.6" fill="#f0f0f0" stroke="#f0f0f0" stroke-width="0.3">0,3524</text>
<text transform="translate(1044.2 673.0) scale(1.44 1)" font-size="15.6" fill="#f0f0f0" stroke="#f0f0f0" stroke-width="0.3">0,3753</text>
<text transform="translate(1150.6 673.0) scale(1.44 1)" font-size="15.6" fill="#f0f0f0" stroke="#f0f0f0" stroke-width="0.3">0,0000</text>
<text transform="translate(1257.0 673.0) scale(1.44 1)" font-size="15.6" fill="#f0f0f0" stroke="#f0f0f0" stroke-width="0.3">0,4185</text>
<rect x="629.4" y="679.35" width="728.6" height="25.95" fill="#7f7f7f"/>
<text transform="translate(648.3 698.75) scale(1.44 1)" font-size="15.6" fill="#f4f4f4" font-weight="bold">y: CIE31</text>
<text transform="translate(831.4 698.75) scale(1.44 1)" font-size="15.6" fill="#f0f0f0" stroke="#f0f0f0" stroke-width="0.3">0,3628</text>
<text transform="translate(937.8 698.75) scale(1.44 1)" font-size="15.6" fill="#f0f0f0" stroke="#f0f0f0" stroke-width="0.3">0,4000</text>
<text transform="translate(1044.2 698.75) scale(1.44 1)" font-size="15.6" fill="#f0f0f0" stroke="#f0f0f0" stroke-width="0.3">0,4384</text>
<text transform="translate(1150.6 698.75) scale(1.44 1)" font-size="15.6" fill="#f0f0f0" stroke="#f0f0f0" stroke-width="0.3">0,0000</text>
<text transform="translate(1257.0 698.75) scale(1.44 1)" font-size="15.6" fill="#f0f0f0" stroke="#f0f0f0" stroke-width="0.3">0,5115</text>
<rect x="629.4" y="705.1" width="728.6" height="25.95" fill="#404040"/>
<text transform="translate(648.3 724.5) scale(1.44 1)" font-size="15.6" fill="#f4f4f4" font-weight="bold">Y</text>
<text transform="translate(831.4 724.5) scale(1.44 1)" font-size="15.6" fill="#f0f0f0" stroke="#f0f0f0" stroke-width="0.3">379,6147</text>
<text transform="translate(937.8 724.5) scale(1.44 1)" font-size="15.6" fill="#f0f0f0" stroke="#f0f0f0" stroke-width="0.3">371,6390</text>
<text transform="translate(1044.2 724.5) scale(1.44 1)" font-size="15.6" fill="#f0f0f0" stroke="#f0f0f0" stroke-width="0.3">364,9782</text>
<text transform="translate(1150.6 724.5) scale(1.44 1)" font-size="15.6" fill="#f0f0f0" stroke="#f0f0f0" stroke-width="0.3">0,0000</text>
<text transform="translate(1257.0 724.5) scale(1.44 1)" font-size="15.6" fill="#f0f0f0" stroke="#f0f0f0" stroke-width="0.3">355,5429</text>
<rect x="629.4" y="730.85" width="728.6" height="25.95" fill="#7f7f7f"/>
<text transform="translate(648.3 750.25) scale(1.44 1)" font-size="15.6" fill="#f4f4f4" font-weight="bold">Target x:CIE31</text>
<text transform="translate(831.4 750.25) scale(1.44 1)" font-size="15.6" fill="#f0f0f0" stroke="#f0f0f0" stroke-width="0.3">0,3352</text>
<text transform="translate(937.8 750.25) scale(1.44 1)" font-size="15.6" fill="#f0f0f0" stroke="#f0f0f0" stroke-width="0.3">0,3587</text>
<text transform="translate(1044.2 750.25) scale(1.44 1)" font-size="15.6" fill="#f0f0f0" stroke="#f0f0f0" stroke-width="0.3">0,3816</text>
<text transform="translate(1150.6 750.25) scale(1.44 1)" font-size="15.6" fill="#f0f0f0" stroke="#f0f0f0" stroke-width="0.3">0,4048</text>
<text transform="translate(1257.0 750.25) scale(1.44 1)" font-size="15.6" fill="#f0f0f0" stroke="#f0f0f0" stroke-width="0.3">0,4271</text>
<rect x="629.4" y="756.6" width="728.6" height="25.95" fill="#404040"/>
<text transform="translate(648.3 776.0) scale(1.44 1)" font-size="15.6" fill="#f4f4f4" font-weight="bold">Target y:CIE31</text>
<text transform="translate(831.4 776.0) scale(1.44 1)" font-size="15.6" fill="#f0f0f0" stroke="#f0f0f0" stroke-width="0.3">0,3662</text>
<text transform="translate(937.8 776.0) scale(1.44 1)" font-size="15.6" fill="#f0f0f0" stroke="#f0f0f0" stroke-width="0.3">0,4050</text>
<text transform="translate(1044.2 776.0) scale(1.44 1)" font-size="15.6" fill="#f0f0f0" stroke="#f0f0f0" stroke-width="0.3">0,4429</text>
<text transform="translate(1150.6 776.0) scale(1.44 1)" font-size="15.6" fill="#f0f0f0" stroke="#f0f0f0" stroke-width="0.3">0,4813</text>
<text transform="translate(1257.0 776.0) scale(1.44 1)" font-size="15.6" fill="#f0f0f0" stroke="#f0f0f0" stroke-width="0.3">0,5181</text>
<rect x="629.4" y="782.35" width="728.6" height="25.95" fill="#7f7f7f"/>
<text transform="translate(648.3 801.75) scale(1.44 1)" font-size="15.6" fill="#f4f4f4" font-weight="bold">Target Y</text>
<text transform="translate(831.4 801.75) scale(1.44 1)" font-size="15.6" fill="#f0f0f0" stroke="#f0f0f0" stroke-width="0.3">390,3018</text>
<text transform="translate(937.8 801.75) scale(1.44 1)" font-size="15.6" fill="#f0f0f0" stroke="#f0f0f0" stroke-width="0.3">383,1065</text>
<text transform="translate(1044.2 801.75) scale(1.44 1)" font-size="15.6" fill="#f0f0f0" stroke="#f0f0f0" stroke-width="0.3">377,4996</text>
<text transform="translate(1150.6 801.75) scale(1.44 1)" font-size="15.6" fill="#f0f0f0" stroke="#f0f0f0" stroke-width="0.3">372,8313</text>
<text transform="translate(1257.0 801.75) scale(1.44 1)" font-size="15.6" fill="#f0f0f0" stroke="#f0f0f0" stroke-width="0.3">369,0971</text>
<rect x="629.4" y="808.1" width="728.6" height="25.95" fill="#404040"/>
<text transform="translate(648.3 827.5) scale(1.44 1)" font-size="15.6" fill="#f4f4f4" font-weight="bold">ΔE 2000</text>
<text transform="translate(831.4 827.5) scale(1.44 1)" font-size="15.6" fill="#f0f0f0" stroke="#f0f0f0" stroke-width="0.3">1,5765</text>
<text transform="translate(937.8 827.5) scale(1.44 1)" font-size="15.6" fill="#f0f0f0" stroke="#f0f0f0" stroke-width="0.3">1,6580</text>
<text transform="translate(1044.2 827.5) scale(1.44 1)" font-size="15.6" fill="#f0f0f0" stroke="#f0f0f0" stroke-width="0.3">1,5380</text>
<text transform="translate(1150.6 827.5) scale(1.44 1)" font-size="15.6" fill="#f0f0f0" stroke="#f0f0f0" stroke-width="0.3">0,0000</text>
<text transform="translate(1257.0 827.5) scale(1.44 1)" font-size="15.6" fill="#f0f0f0" stroke="#f0f0f0" stroke-width="0.3">2,0998</text>
<rect x="629.4" y="833.85" width="728.6" height="25.95" fill="#7f7f7f"/>
<text transform="translate(648.3 853.25) scale(1.44 1)" font-size="15.6" fill="#f4f4f4" font-weight="bold">ΔE ITP</text>
<text transform="translate(831.4 853.25) scale(1.44 1)" font-size="15.6" fill="#f0f0f0" stroke="#f0f0f0" stroke-width="0.3">3,4211</text>
<text transform="translate(937.8 853.25) scale(1.44 1)" font-size="15.6" fill="#f0f0f0" stroke="#f0f0f0" stroke-width="0.3">4,4562</text>
<text transform="translate(1044.2 853.25) scale(1.44 1)" font-size="15.6" fill="#f0f0f0" stroke="#f0f0f0" stroke-width="0.3">4,7958</text>
<text transform="translate(1150.6 853.25) scale(1.44 1)" font-size="15.6" fill="#f0f0f0" stroke="#f0f0f0" stroke-width="0.3">0,0000</text>
<text transform="translate(1257.0 853.25) scale(1.44 1)" font-size="15.6" fill="#f0f0f0" stroke="#f0f0f0" stroke-width="0.3">9,4080</text>
<rect x="0" y="869.6" width="1670" height="78" fill="url(#stripg)"/>
<rect x="2.2" y="869.4" width="56.2" height="75.6" rx="5" fill="url(#btn)"/>
<circle cx="30.5" cy="881" r="9.3" fill="url(#upc)"/>
<path d="M24.6 883.4h11.8l-5.9-6.6z" fill="#2a2a2a"/>
<rect x="9" y="902" width="43.5" height="37.4" rx="4" fill="#ffff00" stroke="#c8c83c" stroke-width="0.8"/>
<rect x="7.5" y="875.5" width="24.4" height="64.8" fill="none" stroke="#111" stroke-width="1" stroke-dasharray="1 2"/>
<rect x="66.1" y="869.6" width="187.2" height="75.4" rx="5" fill="url(#btn)"/>
<rect x="72.5" y="876.4" width="174.8" height="44.4" rx="4.5" fill="#c1c2a4" stroke="#a6a78a" stroke-width="1.2"/>
<text x="159.9" y="939.8" font-size="12.6" fill="#2c2c2c" text-anchor="middle" font-weight="bold">20%</text>
<rect x="256.1" y="869.6" width="187.2" height="75.4" rx="5" fill="url(#btn)"/>
<rect x="262.5" y="876.4" width="174.8" height="44.4" rx="4.5" fill="#c1c286" stroke="#a6a770" stroke-width="1.2"/>
<text x="349.9" y="939.8" font-size="12.6" fill="#2c2c2c" text-anchor="middle" font-weight="bold">40%</text>
<rect x="446.2" y="869.6" width="187.2" height="75.4" rx="5" fill="url(#btn)"/>
<rect x="452.6" y="876.4" width="174.8" height="44.4" rx="4.5" fill="#bfc06b" stroke="#a4a558" stroke-width="1.2"/>
<text x="540.0" y="939.8" font-size="12.6" fill="#2c2c2c" text-anchor="middle" font-weight="bold">60%</text>
<rect x="636.3" y="869.6" width="187.2" height="75.4" rx="5" fill="url(#btn)"/>
<rect x="642.7" y="876.4" width="174.8" height="44.4" rx="4.5" fill="#c2c045" stroke="#a6a438" stroke-width="1.2"/>
<text x="730.1" y="939.8" font-size="12.6" fill="#2c2c2c" text-anchor="middle" font-weight="bold">80%</text>
<rect x="826.3" y="869.6" width="187.2" height="75.4" rx="5" fill="url(#btnsel)"/>
<rect x="832.7" y="876.4" width="174.8" height="44.4" rx="4.5" fill="#c4c400" stroke="#a4a400" stroke-width="1.2"/>
<text x="920.1" y="939.8" font-size="12.6" fill="#fff" text-anchor="middle" font-weight="bold">100%</text>
<path d="M1267.2 947V874.5a5 5 0 0 1 5-5H1322a5 5 0 0 1 5 5V947z" fill="url(#cb)"/>
<rect x="1267.2" y="892.2" width="59.8" height="55" fill="#6e6e6e"/>
<line x1="1267.2" y1="892" x2="1327" y2="892" stroke="#555" stroke-width="1.2"/>
<circle cx="1297.3" cy="880.2" r="9" fill="url(#cc)"/>
<path d="M1291.4 883h11.8l-5.9-6.4z" fill="#2a2a2a"/>
<rect x="1279" y="901.6" width="36.4" height="35.2" rx="6" fill="url(#sbg)" stroke="#2a2a2a" stroke-width="2.8"/>
<rect x="1289" y="910.8" width="16.8" height="17.2" fill="#000"/>
<rect x="1329.1" y="869.3" width="56.9" height="37.8" rx="2" fill="url(#cb)"/>
<rect x="1387.1999999999998" y="869.3" width="54.6" height="37.8" rx="2" fill="url(#cb)"/>
<rect x="1443.0" y="869.3" width="55.4" height="37.8" rx="2" fill="url(#cb)"/>
<rect x="1499.6" y="869.3" width="55.4" height="37.8" rx="2" fill="url(#cb)"/>
<rect x="1556.1999999999998" y="869.3" width="54.6" height="37.8" rx="2" fill="url(#cb)"/>
<rect x="1612.0" y="869.3" width="59.4" height="37.8" rx="2" fill="url(#cb)"/>
<circle cx="1357.6" cy="888.2" r="12.4" fill="url(#cc)"/>
<circle cx="1414.7" cy="888.2" r="12.4" fill="url(#cc)"/>
<circle cx="1470.8" cy="888.2" r="12.4" fill="url(#cc)"/>
<circle cx="1527.4" cy="888.2" r="12.4" fill="url(#cc)"/>
<circle cx="1583.3" cy="888.2" r="12.4" fill="url(#cc)"/>
<circle cx="1640.6" cy="888.2" r="12.4" fill="url(#cc)"/>
<rect x="1352.6" y="883.2" width="10" height="10" fill="#333"/>
<path d="M1410.6 882v12.4l10-6.2z" fill="#333"/>
<g stroke="#333" stroke-width="2.2" fill="none"><path d="M1467.5 882.4h-3v11.6h3M1474.100 882.4h3v11.6h-3"/></g><path d="M1467.4 888.2h6.8" stroke="#333" stroke-width="2" stroke-dasharray="1.6 1"/>
<path d="M1527.4 888.2c-2-3.6-7.4-3.6-7.4 0s5.4 3.600 7.4 0c2-3.6 7.4-3.600 7.400 0s-5.400 3.600-7.400 0z" fill="none" stroke="#333" stroke-width="2.3"/>
<g fill="none" stroke="#333" stroke-width="2.8"><path d="M1577.6 887a6 6 0 0 1 10.200-3.400"/><path d="M1589 889.400a6 6 0 0 1-10.200 3.400"/></g><path d="M1584.600 886.400l6 .500-.500-6.200z M1582 890l-6-.500.500 6.200z" fill="#333"/>
<rect x="1329.100" y="908.400" width="169" height="40" rx="2" fill="url(#cb2)"/>
<rect x="1499.700" y="908.400" width="172" height="40" rx="2" fill="url(#cb2)"/>
<circle cx="1367" cy="928" r="12.400" fill="url(#cc)"/><circle cx="1633.600" cy="928" r="12.400" fill="url(#cc)"/>
<path d="M1366 923l-4 5 4 5M1371.500 923l-4 5 4 5" fill="none" stroke="#3a3a3a" stroke-width="2.3"/>
<path d="M1629.600 923l4 5-4 5M1635.100 923l4 5-4 5" fill="none" stroke="#3a3a3a" stroke-width="2.3"/>
<text x="1400.9" y="936.7" font-size="27.2" fill="#383838" textLength="63" lengthAdjust="spacingAndGlyphs" stroke="#383838" stroke-width="0.9">Back</text>
<text x="1534.2" y="936.7" font-size="27.2" fill="#383838" textLength="64" lengthAdjust="spacingAndGlyphs" stroke="#383838" stroke-width="0.9">Next</text>
<rect x="1665.5" y="38" width="4.5" height="832" fill="url(#edge)"/>
</svg></body></html>
